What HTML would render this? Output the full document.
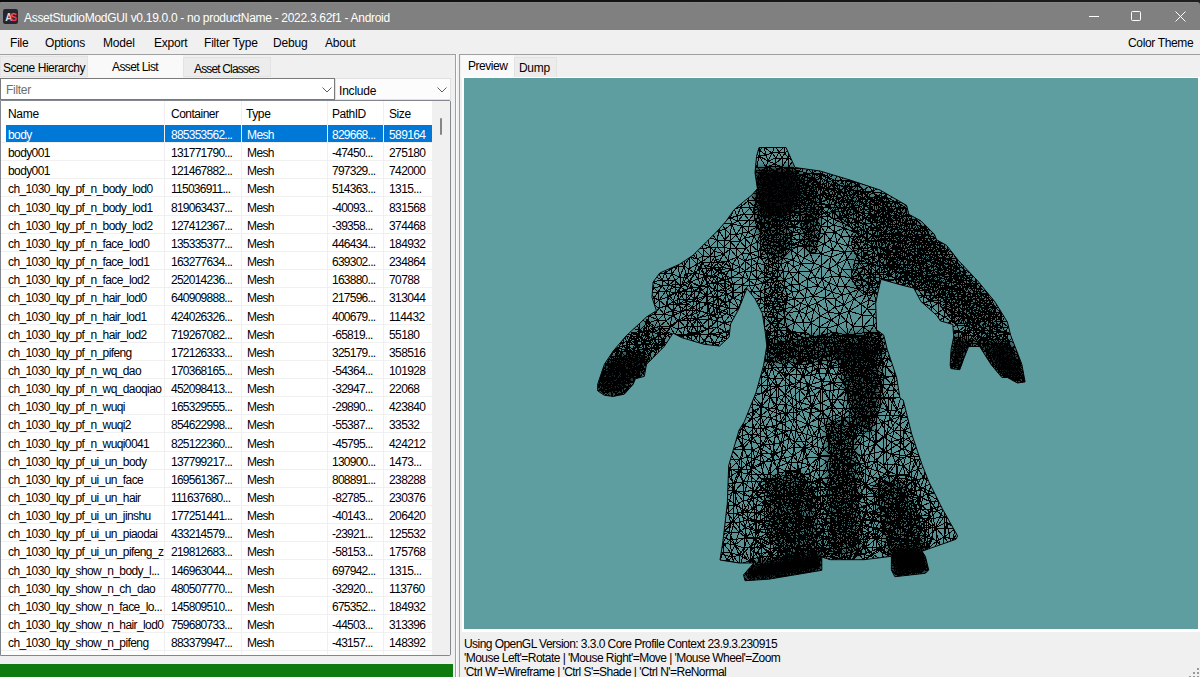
<!DOCTYPE html>
<html><head><meta charset="utf-8"><style>
*{margin:0;padding:0;box-sizing:border-box}
html,body{width:1200px;height:677px;overflow:hidden;background:#f0f0f0;font-family:"Liberation Sans",sans-serif;font-size:12px;color:#000}
.a{position:absolute}
.tx{position:absolute;line-height:17px;white-space:nowrap}
#top{left:0;top:0;width:1200px;height:6px;background:linear-gradient(90deg,#0b0b0b 0,#121212 600px,#1a1a1a 1020px,#1e1e1e 1200px)}
#title{left:0;top:2px;width:1200px;height:28px;background:#808080;border-top:1px solid #878787;border-radius:1px 3px 0 0}
.mi{top:35px;letter-spacing:-0.2px}
.t{position:absolute;line-height:17px;white-space:nowrap;letter-spacing:-0.6px}
.sw{color:#fff}
.c1,.c3{letter-spacing:-0.75px}
.gl{position:absolute;left:1px;width:431px;height:1px;background:#f0f0f0}
.vs{position:absolute;top:101px;width:1px;height:553px;background:#f0f0f0}
.sel{position:absolute;height:17px;background:#0078d7}
</style></head><body>
<div class="a" id="top"></div>
<div class="a" id="title"></div>
<div class="tx" style="left:24px;top:10px;color:#fff;letter-spacing:-0.3px">AssetStudioModGUI v0.19.0.0 - no productName - 2022.3.62f1 - Android</div>
<svg class="a" style="left:3px;top:9px" width="15" height="15" viewBox="0 0 15 15">
<defs><linearGradient id="ga" x1="0" y1="0" x2="1" y2="1"><stop offset="0" stop-color="#ff7040"/><stop offset="1" stop-color="#ff1070"/></linearGradient>
<linearGradient id="gw" x1="0" y1="0" x2="1" y2="0"><stop offset="0" stop-color="#f0eef6"/><stop offset="0.6" stop-color="#e8c8d8"/><stop offset="1" stop-color="#ff6060"/></linearGradient></defs>
<rect x="0" y="0" width="15" height="15" rx="2.2" fill="#23262e"/>
<text x="2.2" y="11.6" font-family="Liberation Sans" font-weight="bold" font-size="10" fill="url(#gw)" letter-spacing="-1.2">A</text>
<text x="7.2" y="11.6" font-family="Liberation Sans" font-weight="bold" font-size="10" fill="url(#ga)">S</text>
</svg>
<svg class="a" style="left:1080px;top:8px" width="120" height="18">
<line x1="9" y1="8.5" x2="19" y2="8.5" stroke="#fff" stroke-width="1"/>
<rect x="51.5" y="3.5" width="9" height="9" rx="1" fill="none" stroke="#fff" stroke-width="1"/>
<line x1="95.5" y1="3.5" x2="105.5" y2="13.5" stroke="#fff" stroke-width="1"/>
<line x1="105.5" y1="3.5" x2="95.5" y2="13.5" stroke="#fff" stroke-width="1"/>
</svg>
<div class="a" style="left:0;top:30px;width:1200px;height:24px;background:#f0f0f0"></div>
<div class="tx mi" style="left:10px">File</div>
<div class="tx mi" style="left:45px">Options</div>
<div class="tx mi" style="left:103px">Model</div>
<div class="tx mi" style="left:154px">Export</div>
<div class="tx mi" style="left:204px">Filter Type</div>
<div class="tx mi" style="left:273px">Debug</div>
<div class="tx mi" style="left:325px">About</div>
<div class="tx mi" style="left:1128px;letter-spacing:-0.35px">Color Theme</div>
<!-- left panel frame -->
<div class="a" style="left:0;top:54px;width:457px;height:1px;background:#a0a0a0"></div>
<div class="a" style="left:455px;top:54px;width:1px;height:623px;background:#a0a0a0"></div>
<div class="a" style="left:456px;top:54px;width:1px;height:623px;background:#fbfbfb"></div>
<!-- right panel frame -->
<div class="a" style="left:459px;top:54px;width:741px;height:1px;background:#a0a0a0"></div>
<div class="a" style="left:459px;top:54px;width:1px;height:623px;background:#a0a0a0"></div>
<!-- left tabs -->
<div class="a" style="left:0;top:56px;width:88px;height:21px;background:#ececec;border:1px solid #e3e3e3"></div>
<div class="a" style="left:88px;top:55px;width:95px;height:23px;background:#f9f9f9"></div>
<div class="a" style="left:183px;top:57px;width:88px;height:20px;background:#ececec;border:1px solid #e3e3e3"></div>
<div class="tx" style="left:3px;top:60px;letter-spacing:-0.45px">Scene Hierarchy</div>
<div class="tx" style="left:112px;top:58.5px;letter-spacing:-0.6px">Asset List</div>
<div class="tx" style="left:194px;top:60.5px;letter-spacing:-0.85px">Asset Classes</div>
<!-- filter row -->
<div class="a" style="left:0;top:78px;width:335px;height:22px;background:#fff;border:1px solid #7a7a7a"></div>
<div class="tx" style="left:6px;top:81.5px;color:#6d6d6d;letter-spacing:-0.3px">Filter</div>
<svg class="a" style="left:322px;top:87px" width="10" height="6"><path d="M0.5 0.5 L5 5 L9.5 0.5" fill="none" stroke="#606060" stroke-width="1"/></svg>
<div class="a" style="left:335px;top:78px;width:116px;height:22px;background:#fcfcfc;border:1px solid #e0e0e0"></div>
<div class="tx" style="left:339px;top:82.5px;letter-spacing:-0.2px">Include</div>
<svg class="a" style="left:437px;top:87px" width="10" height="6"><path d="M0.5 0.5 L5 5 L9.5 0.5" fill="none" stroke="#606060" stroke-width="1"/></svg>
<!-- table -->
<div class="a" style="left:0;top:100px;width:451px;height:556px;background:#fff;border:1px solid #828790;border-radius:0 2px 2px 0"></div>
<div class="a" style="left:432px;top:101px;width:18px;height:554px;background:#f0f0f0"></div>
<div class="a" style="left:440px;top:118px;width:2px;height:17px;background:#858585;border-radius:1px"></div>
<div class="tx" style="left:8px;top:106px;letter-spacing:-0.3px">Name</div>
<div class="tx" style="left:171px;top:106px;letter-spacing:-0.5px">Container</div>
<div class="tx" style="left:246px;top:106px;letter-spacing:-0.4px">Type</div>
<div class="tx" style="left:332px;top:106px;letter-spacing:-0.5px">PathID</div>
<div class="tx" style="left:389px;top:106px;letter-spacing:-0.4px">Size</div>
<div class="gl" style="top:142.00px"></div>
<div class="gl" style="top:160.15px"></div>
<div class="gl" style="top:178.30px"></div>
<div class="gl" style="top:196.45px"></div>
<div class="gl" style="top:214.60px"></div>
<div class="gl" style="top:232.75px"></div>
<div class="gl" style="top:250.90px"></div>
<div class="gl" style="top:269.05px"></div>
<div class="gl" style="top:287.20px"></div>
<div class="gl" style="top:305.35px"></div>
<div class="gl" style="top:323.50px"></div>
<div class="gl" style="top:341.65px"></div>
<div class="gl" style="top:359.80px"></div>
<div class="gl" style="top:377.95px"></div>
<div class="gl" style="top:396.10px"></div>
<div class="gl" style="top:414.25px"></div>
<div class="gl" style="top:432.40px"></div>
<div class="gl" style="top:450.55px"></div>
<div class="gl" style="top:468.70px"></div>
<div class="gl" style="top:486.85px"></div>
<div class="gl" style="top:505.00px"></div>
<div class="gl" style="top:523.15px"></div>
<div class="gl" style="top:541.30px"></div>
<div class="gl" style="top:559.45px"></div>
<div class="gl" style="top:577.60px"></div>
<div class="gl" style="top:595.75px"></div>
<div class="gl" style="top:613.90px"></div>
<div class="gl" style="top:632.05px"></div>
<div class="gl" style="top:650.20px"></div>
<div class="vs" style="left:164px"></div>
<div class="vs" style="left:241px"></div>
<div class="vs" style="left:327px"></div>
<div class="vs" style="left:383px"></div>
<div class="sel" style="top:125.0px;left:6px;width:158px"></div>
<div class="sel" style="top:125.0px;left:165px;width:76px"></div>
<div class="sel" style="top:125.0px;left:242px;width:85px"></div>
<div class="sel" style="top:125.0px;left:328px;width:55px"></div>
<div class="sel" style="top:125.0px;left:384px;width:48px"></div>
<div class="t sw c0" style="top:127.00px;left:8px">body</div>
<div class="t sw c1" style="top:127.00px;left:171px">885353562...</div>
<div class="t sw c2" style="top:127.00px;left:247px">Mesh</div>
<div class="t sw c3" style="top:127.00px;left:332px">829668...</div>
<div class="t sw c4" style="top:127.00px;left:389px">589164</div>
<div class="t c0" style="top:145.15px;left:8px">body001</div>
<div class="t c1" style="top:145.15px;left:171px">131771790...</div>
<div class="t c2" style="top:145.15px;left:247px">Mesh</div>
<div class="t c3" style="top:145.15px;left:332px">-47450...</div>
<div class="t c4" style="top:145.15px;left:389px">275180</div>
<div class="t c0" style="top:163.30px;left:8px">body001</div>
<div class="t c1" style="top:163.30px;left:171px">121467882...</div>
<div class="t c2" style="top:163.30px;left:247px">Mesh</div>
<div class="t c3" style="top:163.30px;left:332px">797329...</div>
<div class="t c4" style="top:163.30px;left:389px">742000</div>
<div class="t c0" style="top:181.45px;left:8px">ch_1030_lqy_pf_n_body_lod0</div>
<div class="t c1" style="top:181.45px;left:171px">115036911...</div>
<div class="t c2" style="top:181.45px;left:247px">Mesh</div>
<div class="t c3" style="top:181.45px;left:332px">514363...</div>
<div class="t c4" style="top:181.45px;left:389px">1315...</div>
<div class="t c0" style="top:199.60px;left:8px">ch_1030_lqy_pf_n_body_lod1</div>
<div class="t c1" style="top:199.60px;left:171px">819063437...</div>
<div class="t c2" style="top:199.60px;left:247px">Mesh</div>
<div class="t c3" style="top:199.60px;left:332px">-40093...</div>
<div class="t c4" style="top:199.60px;left:389px">831568</div>
<div class="t c0" style="top:217.75px;left:8px">ch_1030_lqy_pf_n_body_lod2</div>
<div class="t c1" style="top:217.75px;left:171px">127412367...</div>
<div class="t c2" style="top:217.75px;left:247px">Mesh</div>
<div class="t c3" style="top:217.75px;left:332px">-39358...</div>
<div class="t c4" style="top:217.75px;left:389px">374468</div>
<div class="t c0" style="top:235.90px;left:8px">ch_1030_lqy_pf_n_face_lod0</div>
<div class="t c1" style="top:235.90px;left:171px">135335377...</div>
<div class="t c2" style="top:235.90px;left:247px">Mesh</div>
<div class="t c3" style="top:235.90px;left:332px">446434...</div>
<div class="t c4" style="top:235.90px;left:389px">184932</div>
<div class="t c0" style="top:254.05px;left:8px">ch_1030_lqy_pf_n_face_lod1</div>
<div class="t c1" style="top:254.05px;left:171px">163277634...</div>
<div class="t c2" style="top:254.05px;left:247px">Mesh</div>
<div class="t c3" style="top:254.05px;left:332px">639302...</div>
<div class="t c4" style="top:254.05px;left:389px">234864</div>
<div class="t c0" style="top:272.20px;left:8px">ch_1030_lqy_pf_n_face_lod2</div>
<div class="t c1" style="top:272.20px;left:171px">252014236...</div>
<div class="t c2" style="top:272.20px;left:247px">Mesh</div>
<div class="t c3" style="top:272.20px;left:332px">163880...</div>
<div class="t c4" style="top:272.20px;left:389px">70788</div>
<div class="t c0" style="top:290.35px;left:8px">ch_1030_lqy_pf_n_hair_lod0</div>
<div class="t c1" style="top:290.35px;left:171px">640909888...</div>
<div class="t c2" style="top:290.35px;left:247px">Mesh</div>
<div class="t c3" style="top:290.35px;left:332px">217596...</div>
<div class="t c4" style="top:290.35px;left:389px">313044</div>
<div class="t c0" style="top:308.50px;left:8px">ch_1030_lqy_pf_n_hair_lod1</div>
<div class="t c1" style="top:308.50px;left:171px">424026326...</div>
<div class="t c2" style="top:308.50px;left:247px">Mesh</div>
<div class="t c3" style="top:308.50px;left:332px">400679...</div>
<div class="t c4" style="top:308.50px;left:389px">114432</div>
<div class="t c0" style="top:326.65px;left:8px">ch_1030_lqy_pf_n_hair_lod2</div>
<div class="t c1" style="top:326.65px;left:171px">719267082...</div>
<div class="t c2" style="top:326.65px;left:247px">Mesh</div>
<div class="t c3" style="top:326.65px;left:332px">-65819...</div>
<div class="t c4" style="top:326.65px;left:389px">55180</div>
<div class="t c0" style="top:344.80px;left:8px">ch_1030_lqy_pf_n_pifeng</div>
<div class="t c1" style="top:344.80px;left:171px">172126333...</div>
<div class="t c2" style="top:344.80px;left:247px">Mesh</div>
<div class="t c3" style="top:344.80px;left:332px">325179...</div>
<div class="t c4" style="top:344.80px;left:389px">358516</div>
<div class="t c0" style="top:362.95px;left:8px">ch_1030_lqy_pf_n_wq_dao</div>
<div class="t c1" style="top:362.95px;left:171px">170368165...</div>
<div class="t c2" style="top:362.95px;left:247px">Mesh</div>
<div class="t c3" style="top:362.95px;left:332px">-54364...</div>
<div class="t c4" style="top:362.95px;left:389px">101928</div>
<div class="t c0" style="top:381.10px;left:8px">ch_1030_lqy_pf_n_wq_daoqiao</div>
<div class="t c1" style="top:381.10px;left:171px">452098413...</div>
<div class="t c2" style="top:381.10px;left:247px">Mesh</div>
<div class="t c3" style="top:381.10px;left:332px">-32947...</div>
<div class="t c4" style="top:381.10px;left:389px">22068</div>
<div class="t c0" style="top:399.25px;left:8px">ch_1030_lqy_pf_n_wuqi</div>
<div class="t c1" style="top:399.25px;left:171px">165329555...</div>
<div class="t c2" style="top:399.25px;left:247px">Mesh</div>
<div class="t c3" style="top:399.25px;left:332px">-29890...</div>
<div class="t c4" style="top:399.25px;left:389px">423840</div>
<div class="t c0" style="top:417.40px;left:8px">ch_1030_lqy_pf_n_wuqi2</div>
<div class="t c1" style="top:417.40px;left:171px">854622998...</div>
<div class="t c2" style="top:417.40px;left:247px">Mesh</div>
<div class="t c3" style="top:417.40px;left:332px">-55387...</div>
<div class="t c4" style="top:417.40px;left:389px">33532</div>
<div class="t c0" style="top:435.55px;left:8px">ch_1030_lqy_pf_n_wuqi0041</div>
<div class="t c1" style="top:435.55px;left:171px">825122360...</div>
<div class="t c2" style="top:435.55px;left:247px">Mesh</div>
<div class="t c3" style="top:435.55px;left:332px">-45795...</div>
<div class="t c4" style="top:435.55px;left:389px">424212</div>
<div class="t c0" style="top:453.70px;left:8px">ch_1030_lqy_pf_ui_un_body</div>
<div class="t c1" style="top:453.70px;left:171px">137799217...</div>
<div class="t c2" style="top:453.70px;left:247px">Mesh</div>
<div class="t c3" style="top:453.70px;left:332px">130900...</div>
<div class="t c4" style="top:453.70px;left:389px">1473...</div>
<div class="t c0" style="top:471.85px;left:8px">ch_1030_lqy_pf_ui_un_face</div>
<div class="t c1" style="top:471.85px;left:171px">169561367...</div>
<div class="t c2" style="top:471.85px;left:247px">Mesh</div>
<div class="t c3" style="top:471.85px;left:332px">808891...</div>
<div class="t c4" style="top:471.85px;left:389px">238288</div>
<div class="t c0" style="top:490.00px;left:8px">ch_1030_lqy_pf_ui_un_hair</div>
<div class="t c1" style="top:490.00px;left:171px">111637680...</div>
<div class="t c2" style="top:490.00px;left:247px">Mesh</div>
<div class="t c3" style="top:490.00px;left:332px">-82785...</div>
<div class="t c4" style="top:490.00px;left:389px">230376</div>
<div class="t c0" style="top:508.15px;left:8px">ch_1030_lqy_pf_ui_un_jinshu</div>
<div class="t c1" style="top:508.15px;left:171px">177251441...</div>
<div class="t c2" style="top:508.15px;left:247px">Mesh</div>
<div class="t c3" style="top:508.15px;left:332px">-40143...</div>
<div class="t c4" style="top:508.15px;left:389px">206420</div>
<div class="t c0" style="top:526.30px;left:8px">ch_1030_lqy_pf_ui_un_piaodai</div>
<div class="t c1" style="top:526.30px;left:171px">433214579...</div>
<div class="t c2" style="top:526.30px;left:247px">Mesh</div>
<div class="t c3" style="top:526.30px;left:332px">-23921...</div>
<div class="t c4" style="top:526.30px;left:389px">125532</div>
<div class="t c0" style="top:544.45px;left:8px">ch_1030_lqy_pf_ui_un_pifeng_z</div>
<div class="t c1" style="top:544.45px;left:171px">219812683...</div>
<div class="t c2" style="top:544.45px;left:247px">Mesh</div>
<div class="t c3" style="top:544.45px;left:332px">-58153...</div>
<div class="t c4" style="top:544.45px;left:389px">175768</div>
<div class="t c0" style="top:562.60px;left:8px">ch_1030_lqy_show_n_body_l...</div>
<div class="t c1" style="top:562.60px;left:171px">146963044...</div>
<div class="t c2" style="top:562.60px;left:247px">Mesh</div>
<div class="t c3" style="top:562.60px;left:332px">697942...</div>
<div class="t c4" style="top:562.60px;left:389px">1315...</div>
<div class="t c0" style="top:580.75px;left:8px">ch_1030_lqy_show_n_ch_dao</div>
<div class="t c1" style="top:580.75px;left:171px">480507770...</div>
<div class="t c2" style="top:580.75px;left:247px">Mesh</div>
<div class="t c3" style="top:580.75px;left:332px">-32920...</div>
<div class="t c4" style="top:580.75px;left:389px">113760</div>
<div class="t c0" style="top:598.90px;left:8px">ch_1030_lqy_show_n_face_lo...</div>
<div class="t c1" style="top:598.90px;left:171px">145809510...</div>
<div class="t c2" style="top:598.90px;left:247px">Mesh</div>
<div class="t c3" style="top:598.90px;left:332px">675352...</div>
<div class="t c4" style="top:598.90px;left:389px">184932</div>
<div class="t c0" style="top:617.05px;left:8px">ch_1030_lqy_show_n_hair_lod0</div>
<div class="t c1" style="top:617.05px;left:171px">759680733...</div>
<div class="t c2" style="top:617.05px;left:247px">Mesh</div>
<div class="t c3" style="top:617.05px;left:332px">-44503...</div>
<div class="t c4" style="top:617.05px;left:389px">313396</div>
<div class="t c0" style="top:635.20px;left:8px">ch_1030_lqy_show_n_pifeng</div>
<div class="t c1" style="top:635.20px;left:171px">883379947...</div>
<div class="t c2" style="top:635.20px;left:247px">Mesh</div>
<div class="t c3" style="top:635.20px;left:332px">-43157...</div>
<div class="t c4" style="top:635.20px;left:389px">148392</div>
<!-- right tabs -->
<div class="a" style="left:461px;top:55px;width:53px;height:23px;background:#f9f9f9"></div>
<div class="a" style="left:514px;top:57px;width:43px;height:21px;background:#ececec;border:1px solid #e3e3e3"></div>
<div class="tx" style="left:468px;top:58px;letter-spacing:-0.45px">Preview</div>
<div class="tx" style="left:519px;top:59.5px;letter-spacing:-0.3px">Dump</div>
<!-- preview -->
<div class="a" style="left:462px;top:77px;width:738px;height:555px;background:#fff"></div>
<div class="a" style="left:464px;top:78px;width:734px;height:551px;background:#5f9ea0;overflow:hidden"><svg class="a" style="left:-464px;top:-78px" width="1200" height="677" viewBox="0 0 1200 677">
<defs><filter id="bl" x="-20%" y="-20%" width="140%" height="140%"><feGaussianBlur stdDeviation="3.0"/></filter><clipPath id="sil"><polygon points="759.0,147.5 786.0,147.5 795.0,167.5 820.0,171.0 850.0,180.0 880.0,190.0 906.6,205.4 908.8,214.3 921.0,220.9 934.3,234.2 936.5,239.7 946.5,245.3 958.7,260.8 977.5,280.7 995.2,302.2 1007.4,322.1 1010.7,335.4 1021.8,364.2 1025.1,381.9 1017.4,383.0 1007.4,377.5 1001.9,377.5 990.8,364.2 979.7,346.5 968.6,346.5 964.2,357.6 959.8,369.7 950.9,368.6 950.2,365.2 951.1,349.3 953.7,336.9 952.8,324.5 940.4,320.9 936.9,315.6 920.9,301.4 913.8,288.1 903.2,285.5 881.0,279.3 877.5,294.3 875.7,303.2 876.6,329.8 883.7,335.1 887.2,349.3 892.6,365.2 896.6,377.5 900.0,398.2 903.2,400.0 911.7,434.0 922.0,464.6 928.7,481.5 942.3,508.7 957.6,535.9 955.9,539.3 922.0,551.2 925.3,556.3 928.7,569.9 925.3,573.3 894.8,576.7 891.4,569.9 891.4,556.3 864.2,559.7 830.2,559.7 821.8,557.0 821.8,570.3 768.6,579.2 745.0,580.7 743.5,574.8 753.9,563.0 739.0,563.0 720.0,560.0 722.8,542.3 727.3,503.9 728.7,465.5 739.1,430.0 744.3,421.8 756.1,392.3 763.5,365.7 766.8,346.0 765.3,332.7 762.4,313.5 755.0,298.7 746.9,288.4 738.7,309.1 730.6,323.9 729.1,337.1 719.5,346.0 704.1,344.3 681.9,337.7 673.1,333.2 664.2,346.5 646.5,364.3 644.3,376.4 635.4,378.7 633.2,384.2 624.3,394.2 613.2,396.4 604.4,395.3 597.7,390.8 597.7,384.2 604.4,364.3 613.2,351.0 626.5,335.5 646.5,317.0 656.4,310.7 652.0,297.4 653.1,282.0 659.8,273.0 679.7,264.2 693.0,255.3 706.3,242.0 717.4,231.0 726.2,221.0 733.9,209.9 743.6,201.7 751.7,195.2 757.4,188.7 755.0,172.5 756.6,156.2"/></clipPath></defs>
<g clip-path="url(#sil)">
<polygon points="759.0,147.5 786.0,147.5 795.0,167.5 820.0,171.0 850.0,180.0 880.0,190.0 906.6,205.4 908.8,214.3 921.0,220.9 934.3,234.2 936.5,239.7 946.5,245.3 958.7,260.8 977.5,280.7 995.2,302.2 1007.4,322.1 1010.7,335.4 1021.8,364.2 1025.1,381.9 1017.4,383.0 1007.4,377.5 1001.9,377.5 990.8,364.2 979.7,346.5 968.6,346.5 964.2,357.6 959.8,369.7 950.9,368.6 950.2,365.2 951.1,349.3 953.7,336.9 952.8,324.5 940.4,320.9 936.9,315.6 920.9,301.4 913.8,288.1 903.2,285.5 881.0,279.3 877.5,294.3 875.7,303.2 876.6,329.8 883.7,335.1 887.2,349.3 892.6,365.2 896.6,377.5 900.0,398.2 903.2,400.0 911.7,434.0 922.0,464.6 928.7,481.5 942.3,508.7 957.6,535.9 955.9,539.3 922.0,551.2 925.3,556.3 928.7,569.9 925.3,573.3 894.8,576.7 891.4,569.9 891.4,556.3 864.2,559.7 830.2,559.7 821.8,557.0 821.8,570.3 768.6,579.2 745.0,580.7 743.5,574.8 753.9,563.0 739.0,563.0 720.0,560.0 722.8,542.3 727.3,503.9 728.7,465.5 739.1,430.0 744.3,421.8 756.1,392.3 763.5,365.7 766.8,346.0 765.3,332.7 762.4,313.5 755.0,298.7 746.9,288.4 738.7,309.1 730.6,323.9 729.1,337.1 719.5,346.0 704.1,344.3 681.9,337.7 673.1,333.2 664.2,346.5 646.5,364.3 644.3,376.4 635.4,378.7 633.2,384.2 624.3,394.2 613.2,396.4 604.4,395.3 597.7,390.8 597.7,384.2 604.4,364.3 613.2,351.0 626.5,335.5 646.5,317.0 656.4,310.7 652.0,297.4 653.1,282.0 659.8,273.0 679.7,264.2 693.0,255.3 706.3,242.0 717.4,231.0 726.2,221.0 733.9,209.9 743.6,201.7 751.7,195.2 757.4,188.7 755.0,172.5 756.6,156.2" fill="#000" fill-opacity="0.05"/>
<g filter="url(#bl)"><polygon points="755.0,168.0 797.0,168.0 800.0,190.0 795.0,213.0 785.0,216.0 760.0,216.0 755.0,200.0" fill="#000" fill-opacity="0.87"/>
<polygon points="755.0,210.0 790.0,213.0 792.0,250.0 780.0,262.0 762.0,250.0 756.0,230.0" fill="#000" fill-opacity="0.40"/>
<polygon points="797.0,172.0 815.0,172.0 822.0,210.0 815.0,255.0 805.0,250.0 798.0,215.0" fill="#000" fill-opacity="0.40"/>
<polygon points="815.0,172.0 860.0,182.0 858.0,205.0 845.0,232.0 835.0,220.0 822.0,195.0" fill="#000" fill-opacity="0.21"/>
<polygon points="760.0,250.0 780.0,255.0 792.0,330.0 768.0,340.0 762.0,300.0" fill="#000" fill-opacity="0.12"/>
<polygon points="870.0,195.0 907.0,205.0 946.0,245.0 1000.0,310.0 1007.0,330.0 985.0,335.0 950.0,318.0 915.0,285.0 880.0,260.0" fill="#000" fill-opacity="0.12"/>
<polygon points="765.0,340.0 800.0,337.0 840.0,333.0 878.0,330.0 886.0,345.0 884.0,358.0 840.0,360.0 800.0,363.0 765.0,365.0" fill="#000" fill-opacity="0.40"/>
<polygon points="835.0,345.0 872.0,343.0 882.0,372.0 880.0,405.0 870.0,435.0 855.0,425.0 845.0,390.0" fill="#000" fill-opacity="0.49"/>
<polygon points="596.0,389.0 604.0,365.0 612.0,356.0 640.0,352.0 651.0,360.0 646.0,366.0 645.0,371.0 638.0,380.0 631.0,384.0 623.0,394.0 612.0,397.0 606.0,394.0 600.0,395.0" fill="#000" fill-opacity="0.74"/>
<polygon points="975.0,340.0 1008.0,340.0 1022.0,364.0 1025.0,382.0 1017.0,383.0 1007.0,377.0 1002.0,377.0 990.0,364.0 980.0,346.0 968.0,346.0 960.0,370.0 951.0,368.0 951.0,349.0 953.0,335.0" fill="#000" fill-opacity="0.69"/>
<polygon points="743.0,575.0 754.0,563.0 790.0,556.0 822.0,552.0 822.0,570.0 769.0,579.0 745.0,581.0" fill="#000" fill-opacity="0.87"/>
<polygon points="891.0,548.0 925.0,546.0 929.0,570.0 925.0,573.0 895.0,577.0 891.0,570.0" fill="#000" fill-opacity="0.87"/>
<polygon points="765.0,478.0 800.0,472.0 815.0,490.0 822.0,558.0 790.0,560.0 768.0,540.0" fill="#000" fill-opacity="0.35"/>
<polygon points="825.0,420.0 855.0,418.0 862.0,556.0 828.0,558.0" fill="#000" fill-opacity="0.35"/>
<polygon points="875.0,482.0 905.0,480.0 925.0,540.0 928.0,570.0 892.0,570.0 880.0,520.0" fill="#000" fill-opacity="0.35"/>
<polygon points="612.0,345.0 648.0,314.0 672.0,333.0 664.0,346.0 646.0,364.0 620.0,366.0" fill="#000" fill-opacity="0.12"/>
<polygon points="955.0,262.0 980.0,282.0 1000.0,310.0 1010.0,336.0 985.0,338.0 955.0,325.0 940.0,300.0" fill="#000" fill-opacity="0.16"/>
<polygon points="655.0,285.0 690.0,262.0 715.0,250.0 740.0,260.0 735.0,320.0 710.0,340.0 670.0,333.0" fill="#000" fill-opacity="0.03"/>
<polygon points="736.0,477.0 790.0,468.0 823.0,480.0 871.0,471.0 923.0,465.0 942.0,509.0 957.0,536.0 922.0,551.0 864.0,560.0 830.0,560.0 753.0,563.0 720.0,560.0 727.0,504.0" fill="#000" fill-opacity="0.01"/>
<polygon points="745.0,572.0 756.0,564.0 790.0,558.0 821.0,556.0 822.0,570.0 769.0,579.0 747.0,580.0" fill="#000" fill-opacity="0.95"/>
<polygon points="893.0,552.0 924.0,550.0 928.0,569.0 925.0,573.0 896.0,576.0 892.0,570.0" fill="#000" fill-opacity="0.95"/>
<polygon points="960.0,340.0 970.0,346.0 964.0,358.0 960.0,370.0 951.0,368.0 951.0,349.0" fill="#000" fill-opacity="0.58"/>
<polygon points="992.0,345.0 1012.0,345.0 1022.0,364.0 1025.0,382.0 1017.0,383.0 1007.0,377.0 1002.0,377.0 992.0,364.0" fill="#000" fill-opacity="0.58"/>
<polygon points="850.0,180.0 907.0,205.0 946.0,245.0 960.0,262.0 935.0,300.0 903.0,285.0 881.0,279.0 876.0,300.0 850.0,290.0" fill="#000" fill-opacity="0.16"/></g>
<path d="M768 378L772 368M673 302L668 297M944 528L954 521M791 212L799 214M625 369L623 376M802 228L808 232M829 435L835 424M915 460L911 472M845 286L850 293M744 492L743 501M823 194L821 203M911 404L910 418M891 384L896 391M827 328L820 336M864 280L870 275M943 275L939 269M717 291L718 282M993 346L1002 342M866 417L855 408M761 416L771 418M788 169L788 177M900 196L894 194M898 492L904 496M805 193L798 186M741 207L744 214M774 572L769 580M952 314L958 307M781 546L770 552M930 256L933 263M761 385L762 393M851 346L848 335M827 328L819 327M792 398L800 390M891 442L894 431M964 296L969 284M691 333L691 344M992 300L983 300M840 443L846 436M734 327L724 323M708 335L708 329M843 200L847 196M854 232L844 228M847 390L855 392M768 229L761 223M680 277L675 280M806 314L814 310M915 460L912 452M797 547L788 549M817 303L825 298M779 372L775 378M762 406L761 416M938 303L932 307M798 578L779 583M854 232L861 236M724 254L730 249M754 428L748 434M827 462L816 470M764 490L777 490M762 189L758 185M759 156L759 150M831 320L827 328M851 346L855 335M790 201L796 200M774 255L765 250M912 481L911 472M639 318L640 330M928 494L920 497M884 422L894 431M779 288L785 287M741 207L734 209M635 323L630 328M931 502L930 512M798 272L793 277M778 397L778 387M803 449L798 462M824 343L816 343M820 316L819 327M887 204L886 194M802 228L799 234M837 173L846 174M877 407L873 415M917 230L910 230M664 342L665 349M849 516L853 523M710 247L701 243M659 308L655 314M843 501L839 513M889 507L888 515M909 261L910 254M913 279L909 283M858 424L851 428M751 266L751 272M775 164L777 171M700 269L706 268M817 303L814 310M814 358L824 356M805 193L805 185M838 209L843 200M839 351L834 343M944 317L938 322M818 419L810 413M749 280L757 279M765 369L761 376M867 293L861 304M764 328L760 337M743 197L749 176M773 316L778 313M680 277L672 274M840 314L849 311M715 315L707 313M907 570L907 581M909 261L905 267M763 173L757 167M752 150L759 150M955 350L958 340M880 397L877 407M996 327L990 322M821 254L821 266M761 385L752 385M728 505L736 505M886 367L888 359M743 482L756 481M849 311L861 304M876 204L877 197M825 233L830 240M753 172L749 176M983 331L973 328M798 272L811 271M733 284L733 292M989 288L977 275M909 202L908 208M797 512L810 510M938 313L932 307M736 248L730 241M765 179L765 184M804 536L804 525M753 172L750 166M889 210L897 202M798 504L788 514M763 283L774 282M872 554L866 547M708 329L709 319M764 147L762 142M927 248L919 243M646 334L640 330M820 316L828 312M923 296L928 290M951 296L945 293M755 200L757 194M792 398L793 407M843 200L850 202M783 494L778 507M743 277L742 285M675 335L684 343M649 316L639 318M767 342L760 348M778 196L778 190M805 246L799 242M672 316L670 326M841 340L834 343M924 228L933 225M748 457L743 449M746 248L742 254M798 336L792 340M852 354L845 351M830 391L837 399M763 574L761 585M920 527L913 525M814 552L802 554M763 173L759 178M825 233L820 233M867 293L869 300M848 401L846 409M749 220L755 220M815 202L809 204M900 242L893 234M636 381L639 369M759 156L766 167M791 244L785 241M996 375L1005 375M820 403L821 389M788 313L783 309M840 314L828 312M786 535L778 538M739 532L745 537M759 321L760 337M980 306L988 305M723 543L731 553M717 291L712 282M783 176L788 177M940 244L947 250M864 561L845 565M728 505L721 508M877 407L868 397M866 547L881 548M748 457L746 465M801 221L799 214M846 557L850 545M793 540L797 547M912 552L919 553M750 561L754 573M1020 369L1030 374M755 459L753 450M735 545L731 553M906 478L911 472M723 267L721 273M711 262L706 268M969 284L962 289M776 220L783 220M646 377L639 369M795 221L799 214M822 279L825 289M892 260L896 254M821 266L815 277M769 580L761 585M956 358L949 363M934 231L933 225M781 443L787 450M810 253L804 258M738 437L743 449M923 303L930 301M833 559L838 551M730 241L725 240M758 251L763 245M724 254L718 263M847 484L839 475M952 314L944 317M954 521L944 517M755 459L764 462M853 251L847 259M921 264L926 260M672 316L666 321M768 378L770 386M927 310L932 307M823 505L832 502M787 450L775 453M832 408L821 411M765 184L759 178M879 283L879 274M851 428L846 436M841 430L840 443M795 442L803 449M875 183L863 179M919 579L907 581M797 566L790 572M855 417L858 424M873 415L876 424M972 320L978 324M637 347L629 341M944 528L936 528M727 560L723 552M764 196L769 201M778 196L784 192M683 335L685 327M962 372L955 366M679 260L685 259M797 512L796 524M932 307L930 301M780 208L772 206M919 250L927 248M603 378L603 386M770 495L770 504M821 226L813 225M718 282L724 280M815 395L820 403M977 275L975 286M763 204L769 201M831 444L824 449M699 334L708 335M726 332L736 336M789 272L783 271M666 266L661 268M691 333L684 343M859 289L851 278M821 363L828 373M872 554L864 561M743 426L735 430M859 207L865 205M956 358L964 364M726 332L717 327M709 347L715 352M797 470L798 462M910 215L917 215M937 511L944 517M872 345L882 349M747 520L747 512M762 216L755 220M778 397L776 405M753 490L756 481M932 251L934 244M757 227L761 233M856 222L854 232M714 251L715 257M756 506L747 512M700 311L697 319M757 531L764 526M864 561L853 561M785 301L779 303M675 335L672 343M881 298L874 292M765 369L761 359M706 276L712 282M860 349L852 354M787 450L780 459M897 478L903 466M808 306L801 303M596 373L605 371M814 349L816 343M778 313L777 321M746 574L733 569M825 572L845 565M841 340L839 351M857 243L848 246M925 282L919 282M700 311L692 308M895 247L890 240M686 299L679 304M999 300L1010 321M749 192L757 194M778 557L788 549M873 192L863 191M646 334L654 328M944 528L944 537M811 323L814 310M805 332L812 336M851 346L852 354M963 264L964 274M754 428L765 428M739 532L745 528M786 404L793 407M772 206L774 212M751 298L761 298M958 284L951 280M795 555L802 554M909 202L903 203M768 272L778 270M888 410L873 415M802 493L810 492M637 347L638 355M947 250L953 247M732 270L723 267M914 426L917 436M724 247L724 254M783 186L784 192M811 375L805 368M820 316L831 320M938 295L945 293M847 484L853 489M887 275L887 265M783 433L789 438M941 289L939 282M856 222L857 213M839 351L845 351M925 282L917 288M910 254L905 244M745 528L745 537M726 332L724 323M839 460L832 456M835 183L845 187M806 501L810 492M861 398L855 392M760 303L761 298M957 325L965 326M776 158L775 164M994 354L1002 350M699 345L709 347M813 446L803 449M799 194L802 202M751 266L752 259M697 319L692 315M901 564L907 570M1019 362L1020 369M1012 358L1002 350M1005 316L1010 321M708 286L700 292M806 441L795 442M794 153L788 158M758 435L754 428M925 282L930 280M794 419L793 407M791 285L785 287M863 212L865 218M877 432L884 422M761 385L761 376M809 204L813 209M880 397L887 390M818 534L831 530M883 497L874 503M860 444L854 436M879 365L868 367M810 465L816 470M1012 358L1019 362M753 490L758 497M816 247L809 240M751 245L745 238M772 461L764 462M768 296L766 305M898 492L890 492M786 336L792 340M933 270L939 269M739 318L733 321M788 158L782 158M808 279L811 271M785 503L778 507M776 405L770 397M775 263L768 266M649 316L658 320M1010 368L1019 362M779 152L784 147M792 193L784 192M678 266L684 266M860 472L848 474M745 261L737 257M856 510L851 505M678 329L679 320M750 561L744 548M693 326L701 326M947 250L954 253M841 340L845 351M971 309L980 306M734 327L733 321M964 296L971 298M887 250L890 240M873 316L877 310M730 315L729 308M885 377L880 384M805 332L792 332M785 559L782 571M907 274L897 279M980 306L984 312M772 461L775 453M859 201L859 207M686 305L692 308M847 390L848 401M981 282L980 293M777 356L786 352M759 321L757 311M889 337L885 331M827 216L829 205M717 321L708 329M617 351L621 343M798 186L805 185M727 294L718 297M777 467L785 471M715 276L721 273M838 358L839 367M728 261L737 257M949 329L951 321M665 349L684 343M777 328L770 323M775 164L768 161M933 270L927 270M932 483L940 492M1017 344L1014 329M997 316L1002 322M804 536L814 541M808 279L818 286M778 397L786 404M606 360L598 366M793 160L788 169M991 316L995 308M951 296L945 300M883 292L900 290M911 494L914 504M727 490L722 484M958 277L951 272M884 465L888 475M757 263L762 272M892 522L888 515M934 244L927 248M828 538L836 536M732 270L731 278M812 526L804 525M886 233L880 235M778 507L779 515M771 287L774 282M903 466L915 460M775 263L783 258M789 385L792 398M791 212L789 221M762 474L770 474M679 299L673 302M643 361L631 358M761 565L770 552M764 239L771 241M819 428L807 424M780 241L771 241M735 491L727 490M865 513L872 519M818 534L826 522M643 361L639 369M701 326L697 319M927 310L923 303M659 354L650 361M775 263L781 264M770 552L761 547M786 235L780 241M920 527L918 518M836 494L829 488M761 454L764 462M760 291L752 291M710 247L717 247M797 346L806 347M802 168L804 175M802 202L808 197M666 306L673 310M783 176L782 167M914 241L919 243M835 307L835 299M831 257L837 264M794 153L813 165M907 511L899 518M994 354L993 346M824 343L820 336M772 461L780 459M877 432L884 437M690 257L697 264M806 314L799 311M833 218L827 216M795 176L791 186M884 241L890 240M684 266L687 277M955 350L963 357M849 516L851 505M859 207L857 213M853 326L848 335M934 231L937 238M777 356L785 367M797 346L798 336M878 228L886 233M767 517L764 526M741 301L745 307M856 222L848 215M913 246L919 243M885 285L896 286M842 541L851 535M736 235L742 226M911 494L920 489M721 348L727 340M731 523L738 513M751 266L757 263M835 232L828 227M852 270L847 259M808 232L807 221M720 521L721 508M764 328L764 317M899 425L904 430M717 240L710 232M752 291L761 298M789 385L800 390M787 481L785 471M866 417L876 424M813 165L808 169M861 249L857 243M829 205L835 204M782 293L773 292M860 444L850 444M869 406L866 417M859 529L862 521M943 275L936 276M710 247L710 256M756 522L757 531M881 193L877 197M880 384L876 377M891 442L884 437M856 176L863 179M985 319L990 322M838 325L848 335M777 233L787 228M969 278L958 284M837 375L828 373M794 419L807 424M882 523L872 519M910 215L908 208M934 231L944 238M768 378L775 378M791 212L790 201M775 453L780 459M922 506L930 512M984 364L971 359M764 317L773 316M909 533L908 544M697 319L709 319M792 236L791 244M804 475L804 483M725 460L740 459M865 379L861 368M814 552L823 546M786 404L776 405M884 422L884 437M765 179L769 174M783 522L796 524M945 368L949 363M745 528L757 531M897 508L899 518M837 173L828 178M951 272L956 267M958 258L953 247M906 290L900 290M837 243L833 250M813 296L825 289M846 557L838 551M725 240L725 229M783 379L779 372M877 310L867 309M802 493L795 491M831 257L821 266M873 192L877 197M1002 350L1011 349M951 513L940 492M913 294L909 283M811 323L819 327M664 314L655 314M797 254L793 260M693 326L699 334M788 463L780 459M795 176L788 169M819 428L812 436M862 456L859 463M906 486L904 496M800 361L800 353M760 539L771 543M851 535L853 523M751 245L750 253M1030 382L1022 386M739 532L729 532M797 247L791 244M913 279L919 282M717 240L725 240M738 472L734 483M912 552L904 553M813 180L804 175M788 514L779 515M813 366L809 355M822 279L829 283M831 530L844 532M800 361L809 355M791 250L793 260M784 147L788 143M905 223L910 230M652 275L662 280M743 197L749 192M759 156L757 167M778 196L781 201M901 527L913 525M719 563L723 552M963 357L972 347M828 538L833 545M749 280L755 285M771 195L769 201M802 168L796 168M827 167L832 170M779 215L780 208M713 296L717 291M596 373L594 384M876 302L881 298M793 540L786 535M776 220L778 226M710 232L715 227M733 284L725 288M769 245L771 241M883 497L879 487M740 580L733 569M850 237L844 228M758 251L757 242M773 303L766 305M623 395L629 389M707 313L697 319M964 364L955 366M826 495L823 505M872 257L872 264M1005 316L1002 322M686 291L676 293M858 424L869 429M815 236L809 240M941 289L946 282M850 237L861 236M879 266L880 255M743 482L744 492M771 481L777 490M868 197L865 205M621 343L625 333M853 251L848 246M880 248L887 250M896 286L883 292M766 155L759 150M958 258L954 253M924 478L926 467M777 356L772 368M918 518L913 525M820 336L816 343M826 522L831 530M839 475L828 470M735 545L745 537M787 579L790 572M1023 355L1027 363M717 291L708 286M936 528L929 519M728 213L734 209M730 469L722 472M848 401L855 392M754 236L757 227M802 375L805 368M880 515L888 515M918 469L926 467M795 221L789 221M606 360L605 371M896 227L893 234M796 168L788 169M805 193L808 197M842 295L835 299M820 478L828 470M788 463L798 462M837 243L830 240M881 193L881 185M847 390L839 389M881 507L874 503M951 272L951 280M924 458L915 460M936 276L930 280M780 530L774 525M597 392L603 386M751 272L757 279M928 494L940 492M833 545L836 536M654 305L646 299M796 524L804 525M990 322L991 330M825 233L821 226M735 545L744 548M873 235L878 240M831 196L834 190M799 194L796 200M860 444L862 456M918 469L924 458M901 397L889 398M925 242L927 248M865 484L875 493M1002 359L1002 350M879 321L878 333M777 490L787 481M923 296L931 295M820 186L828 178M797 566L795 555M792 332L787 327M764 239L761 233M647 323L640 330M830 391L829 399M748 457L755 459M780 414L768 410M896 500L889 507M611 366L623 360M944 258L951 259M930 256L932 251M891 442L883 451M764 147L770 142M941 289L947 288M872 229L865 224M996 327L1008 327M990 337L997 336M873 192L881 185M797 254L797 247M888 567L899 577M778 478L777 490M806 347L816 343M715 276L724 280M749 220L749 226M810 253L821 254M758 365L765 369M892 260L887 265M812 173L813 165M744 416L752 419M762 474L756 481M933 263L939 269M958 284L962 289M861 398L848 401M793 407L788 413M791 250L797 247M692 308L686 316M883 223L884 216M875 493L874 503M839 389L831 382M747 520L738 513M840 443L850 444M755 285L752 291M763 283L765 277M885 331L879 321M859 289L850 293M789 385L783 379M1020 369L1027 363M888 410L889 398M778 226L787 228M874 218L870 215M873 235L867 232M706 276L708 286M662 286L669 285M701 286L708 286M743 292L742 285M636 381L632 374M720 521L718 537M659 335L654 328M785 359L785 367M874 325L878 333M812 526L817 515M897 478L906 478M812 436L807 424M693 326L690 321M761 223L761 233M868 538L866 547M781 264L778 270M680 277L687 277M912 269L905 267M837 243L835 232M821 175L827 167M871 283L859 289M767 351L760 348M798 504L790 497M804 175L801 180M823 194L826 189M760 210L755 207M833 559L837 565M956 358L955 366M933 263L927 270M762 406L770 397M681 287L687 277M646 334L639 337M754 236L761 233M678 266L672 274M748 232L745 238M773 444L776 435M777 171L769 174M916 542L920 527M991 316L990 322M781 546L793 540M792 236L794 227M866 417L869 429M831 196L835 204M923 303L932 307M864 280L859 274M868 526L872 519M685 327L690 321M681 287L675 287M904 430L910 418M774 255L783 258M756 270L757 263M709 347L704 341M853 251L861 249M901 397L904 385M865 513L873 511M872 477L881 479M902 217L899 208M841 218L848 223M870 332L878 333M883 497L890 492M863 212L857 213M868 526L868 538M862 456L868 447M897 279L890 281M883 451L884 465M660 326L667 332M825 298L825 289M615 373L625 369M790 149L785 153M969 278L964 274M831 320L819 327M723 543L718 537M838 551L828 552M923 296L923 303M718 282L712 282M843 200L837 197M878 340L865 336M798 504L810 510M796 368L789 374M775 146L784 147M767 342L770 335M858 424L866 417M990 337L987 343M806 314L808 306M730 218L737 216M919 579L912 575M796 478L795 491M795 322L787 327M749 176L749 192M850 379L860 386M662 286L654 288M749 285L755 285M817 515L809 519M713 296L708 286M946 282L947 288M832 292L825 289M879 283L883 279M863 212L870 208M779 372L789 374M903 466L906 478M844 418L851 428M700 311L707 313M780 241L772 235M858 541L850 545M837 197L834 190M732 270L733 264M999 300L993 294M1009 341L1004 334M801 264L793 260M777 328L787 327M712 268L711 262M892 260L898 267M924 478L912 481M763 204L755 207M861 261L847 259M741 301L734 298M914 241L918 237M710 247L707 237M723 267L718 263M878 340L878 333M647 323L654 328M859 529L851 535M1004 334L1002 342M964 364L971 359M806 441L812 436M712 268L706 276M918 469L912 481M845 492L836 494M768 438L758 435M951 513L945 508M882 523L888 532M755 220L749 226M932 564L943 550M746 465L753 467M937 511L945 508M697 259L697 264M784 280L774 282M987 343L988 351M883 223L878 228M831 320L828 312M731 523L729 532M907 236L910 230M779 303L776 298M753 172L757 167M672 274L668 280M861 236L867 232M821 217L827 221M724 254L715 257M766 533L778 538M768 272L765 277M791 186L783 186M964 364L963 357M912 481L906 478M859 529L858 541M646 377L651 370M665 273L662 280M804 475L816 470M684 266L689 269M728 513L721 508M749 280L743 277M759 257L750 253M879 283L870 275M777 328L770 335M867 240L857 243M768 229L764 239M647 349L638 355M783 379L775 378M884 422L873 415M882 200L883 210M683 335L691 333M735 491L743 501M861 398L855 408M879 487L881 479M741 207L736 203M914 504L904 496M935 549L927 549M771 543L778 538M857 479L865 484M715 343L721 348M933 263L933 270M788 313L799 311M844 418L846 409M806 215L801 221M765 184L776 184M996 327L997 316M846 174L841 180M813 165L819 169M828 418L836 415M745 261L745 271M745 261L750 253M783 176L777 171M974 293L969 284M802 375L811 375M886 259L879 266M983 300L986 294M791 186L784 192M899 208L897 202M736 248L742 254M758 365L752 385M821 254L833 250M779 303L783 309M793 456L780 459M833 559L826 563M861 261L872 264M896 464L903 466M900 196L897 202M882 523L880 515M792 398L785 394M771 195L778 190M782 158L785 153M810 253L805 246M841 218L845 208M869 406L873 415M727 294L717 291M807 221L801 221M796 524L788 514M865 336L872 345M785 503L798 504M983 331L991 330M892 266L887 265M1030 382L1030 374M738 472L748 474M821 209L821 203M615 373L611 366M754 304L761 298M892 347L894 355M755 459L753 467M922 254L932 251M734 298L743 292M955 529L954 521M615 373L623 376M943 263L939 269M751 499L758 497M727 490L725 497M764 462L770 474M728 513L738 513M723 301L729 301M777 336L778 344M847 196L850 202M987 343L978 344M798 272L794 267M808 306L814 310M843 501L832 502M862 456L867 468M817 497L815 504M659 300L658 292M944 537L943 550M735 491L725 497M837 375L831 382M873 511L874 503M849 516L856 510M911 404L897 410M698 279L694 273M666 291L659 300M713 296L713 304M934 231L924 228M983 331L981 338M847 259L837 264M974 335L966 335M845 252L837 264M853 326L846 321M922 254L916 256M969 278L972 269M865 224L865 218M879 365L876 377M822 279L832 276M914 241L907 236M903 284L896 286M922 506L918 518M770 335L760 337M952 335L943 326M886 259L892 260M676 293L668 297M815 202L821 203M914 504L920 497M883 451L884 437M896 557L884 561M853 452L843 452M837 286L832 276M924 228L927 223M910 254L903 258M808 279L807 288M699 334L691 333M723 217L715 227M944 537L953 539M730 218L738 221M728 261L723 267M794 307L801 303M723 543L729 532M865 224L871 223M765 428L776 435M617 351L629 352M799 242L799 234M730 315L739 308M956 358L963 357M768 266L762 272M782 167L775 164M712 268L715 276M735 545L729 532M783 249L774 255M838 325L846 321M847 466L839 475M825 233L828 227M860 349L861 342M881 507L888 515M611 366L606 360M962 316L958 307M799 311L808 306M821 226L820 233M773 426L765 428M768 438L764 445M907 236L918 237M697 259L702 262M818 241L809 240M861 249L865 254M784 280L785 287M1002 368L992 366M917 215L924 218M751 298L754 304M903 284L897 279M680 277L684 266M754 214L755 220M869 360L868 367M901 397L896 391M869 406L868 397M770 504L758 497M924 228L914 224M608 353L614 344M701 326L709 319M903 466L906 456M853 523L862 521M891 442L892 454M773 426L782 423M887 204L889 210M710 232L723 217M1015 379L1007 383M815 395L809 385M851 346L861 342M939 282L936 276M804 475L796 478M812 406L815 395M741 301L743 292M760 303L754 304M885 377L876 377M891 384L885 377M780 241L777 247M844 305L850 293M907 274L898 267M635 323L625 333M678 329L675 335M876 302L867 309M823 194L826 199M818 534L804 536M669 285L662 280M761 385L770 386M610 390L604 398M969 284L969 278M648 288L652 282M805 163L799 163M981 351L971 359M715 276L718 282M858 183L851 189M806 347L814 349M903 284L900 290M874 247L865 254M900 196L881 185M881 193L886 194M651 370L650 361M932 483L924 478M765 369L768 361M958 340L967 343M778 557L785 559M922 569L919 579M619 382L623 376M965 326L973 328M672 263L671 269M819 373L822 381M783 258L793 260M945 368L955 366M808 232L809 240M920 274L926 276M913 294L917 288M851 346L845 351M786 404L785 394M799 284L793 277M750 441L743 449M631 358L629 352M686 316L690 321M769 260L765 250M899 544L904 553M949 329L943 326M802 493L790 497M944 317L951 321M785 318L777 321M845 252L847 259M647 349L659 354M608 353L615 359M874 247L867 240M887 275L897 279M812 406L820 403M792 292L787 296M943 275L946 282M838 358L845 351M746 574L754 573M710 256L711 262M882 349L894 355M918 469L911 472M736 235L742 233M800 361L792 356M886 233L890 240M842 295L837 286M839 460L827 462M710 256L702 262M611 366L615 359M741 207L737 216M753 586L740 580M958 284L953 289M1023 355L1011 349M787 228L794 227M858 361L869 360M853 207L857 213M820 316L814 310M761 376L768 378M839 460L828 470M850 379L847 371M896 365L894 355M635 323L639 318M643 361L651 370M825 298L835 307M923 296L917 300M909 261L912 269M768 312L773 316M762 216L766 209M806 347L806 339M672 263L690 251M930 236L925 242M827 328L828 337M748 201L755 207M878 340L885 343M840 443L843 452M794 153L799 163M799 284L808 279M950 265L951 259M997 316L991 316M916 542L928 536M785 211L780 208M786 404L788 413M804 475L797 470M745 271L751 266M984 364L996 375M889 220L889 210M784 280L779 288M748 232L742 226M920 489L928 494M863 327L855 335M864 280L859 289M941 289L934 286M895 247L887 250M822 279L818 286M799 242L797 247M749 404L744 416M739 532L735 545M813 446L812 436M666 306L668 297M977 275L972 269M829 205L826 199M916 542L927 549M906 486L912 481M919 250L910 254M854 299L861 304M861 249L874 247M727 294L734 298M730 234L725 229M782 167L782 158M857 192L847 196M764 196L762 189M806 501L810 510M772 153L764 147M724 247L717 247M763 574L761 565M883 210L876 204M931 502L937 511M1002 307L995 308M906 456L912 452M847 466L860 472M841 430L844 418M723 301L719 306M857 243L861 236M922 506L931 502M816 470L828 470M695 248L703 256M859 289L845 286M881 358L882 349M784 192L778 190M794 419L788 413M909 533L913 525M791 212L795 221M776 158L768 161M899 208L889 210M867 505L873 511M752 150L750 166M848 335L855 335M1015 379L1005 375M890 483L881 479M903 258L896 254M651 293L658 292M873 316L879 321M813 446L819 457M717 291L718 297M821 209L813 209M865 336L870 332M768 223L770 216M640 330L632 336M733 284L731 278M834 225L828 227M781 264L783 258M797 512L798 504M810 253L814 263M844 532L853 523M867 352L861 342M929 519L944 517M795 442L791 430M768 361L772 368M843 501L851 505M992 300L995 308M839 513L838 523M832 367L824 356M922 569L912 575M770 552L770 563M996 327L1002 322M922 254L919 250M797 566L805 566M823 194L816 196M791 285L792 292M951 272L945 269M764 317L759 321M941 251L932 251M738 513L740 522M777 233L768 229M874 218L884 216M881 507L883 497M764 445L753 450M861 229L865 224M840 276L837 286M1017 344L1009 341M879 365L886 367M945 368L954 374M748 201L749 192M945 300L938 295M814 263L801 264M770 188L762 189M812 482L810 492M743 292L752 291M686 305L695 299M720 312L730 315M815 219L813 225M938 259L930 256M786 404L780 414M721 223L725 229M715 276L712 282M766 305L757 311M959 331L965 326M824 244L818 241M962 316L952 314M815 202L813 209M737 257L733 264M904 430L914 426M667 332L672 343M955 529L944 537M897 508L907 511M740 459L743 449M959 331L958 340M783 249L783 258M943 275L951 280M978 344L981 338M782 293L787 296M804 175L805 185M766 533L771 543M768 296L773 292M939 501L940 492M865 379L868 367M944 517L945 508M864 561L858 552M878 213L870 215M821 226L815 219M867 505L856 510M858 361L867 352M762 474L764 462M857 192L850 202M861 398L869 406M974 293L971 298M695 248L710 232M736 336L727 340M635 323L640 330M882 349L888 359M842 541L833 545M793 160L788 158M914 224L924 218M824 356L814 349M757 242L763 245M946 307L952 305M791 250L783 258M832 292L837 286M907 511L918 518M899 544L890 544M888 410L891 420M740 459L746 465M748 474L756 481M784 280L783 271M775 263L778 270M879 266L887 265M946 347L947 355M896 365L888 359M837 173L841 180M736 235L732 224M856 510L853 523M891 442L903 438M763 283L772 277M610 382L605 371M879 283L885 285M756 522L757 513M825 298L832 292M882 200L881 193M773 303L768 296M908 208L903 203M843 452L848 459M864 267L870 275M762 406L749 404M835 232L844 228M892 347L889 337M924 228L924 218M762 406L762 393M779 215L783 220M786 336L787 327M904 230L910 230M885 377L886 367M980 293L975 286M852 270L859 274M781 546L771 543M958 340L952 335M869 389L865 379M841 430L835 424M916 256L910 254M858 183L856 176M853 367L847 371M876 302L874 292M758 435L764 445M652 282L662 286M771 418L768 410M859 201L857 192M813 446L824 449M732 270L740 267M844 532L836 536M818 534L823 546M963 357L962 347M818 286L813 296M924 458L917 436M773 303L776 298M858 552L853 561M883 292L874 292M1009 341L1015 335M884 241L887 250M783 522L795 532M842 541L850 545M920 274L927 270M758 365L760 348M733 284L743 277M751 547L745 537M840 192L847 196M770 216L774 212M897 478L898 492M872 477L860 472M876 444L877 432M888 532L876 539M713 296L706 296M767 351L767 342M743 426L738 437M744 214L738 221M935 549L943 550M651 293L646 299M824 244L833 250M958 277L958 284M922 506L914 504M923 296L930 301M763 574L769 580M681 287L675 280M787 481L795 491M776 184L783 186M831 354L838 358M749 285L749 280M725 460L731 440M813 165L805 163M817 497L819 487M713 304L719 306M736 248L730 249M866 417L873 415M980 293L974 304M903 284L907 274M872 264L864 267M751 547L744 548M901 527L899 518M958 277L956 267M831 257L833 250M806 314L803 322M804 237L808 232M756 506L758 497M943 326L951 321M770 386L775 378M896 227L904 230M768 438L765 428M754 189L758 185M841 340L835 335M748 201L741 207M872 229L867 232M713 296L718 297M794 307L783 309M759 156L768 161M1004 334L997 336M781 546L786 535M853 523L838 523M789 385L785 394M739 532L731 523M893 234L888 226M905 223L904 230M877 461L870 454M740 267L739 273M715 315L717 321M793 540L804 536M852 270L864 267M745 261L742 254M749 404L754 411M740 459L730 469M848 223L844 228M872 345L875 351M799 402L802 410M936 528L944 537M859 463L853 452M805 246L797 247M766 533L764 526M743 501L736 505M758 435L748 434M778 478L787 481M831 196L826 199M741 301L751 298M829 205L821 203M760 348L761 359M798 272L808 279M1002 307L1005 316M958 307L966 302M808 232L799 234M667 332L675 335M757 167L754 161M925 282L926 276M829 269L832 276M738 437L748 434M788 463L797 470M758 251L759 257M870 208L871 201M853 326L862 315M762 272L765 277M897 508L888 515M805 332L803 322M789 272L784 280M817 497L810 492M805 298L808 306M639 337L644 342M760 539L761 547M835 183L826 189M912 269L921 264M827 216L827 221M737 216L744 214M768 229L761 233M820 478L829 488M777 247L771 241M846 174L856 176M765 184L762 189M774 525L767 517M768 272L772 277M856 222L861 229M981 282L975 286M824 244L830 240M862 456L853 452M954 253L951 259M909 261L916 256M824 343L834 343M802 202L809 204M806 501L817 497M860 444L868 447M748 201L750 208M941 251L944 258M940 244L948 242M864 561L876 562M892 522L888 532M698 279L690 282M939 501L937 511M754 411L744 416M826 563L820 559M728 213L736 203M718 537L729 532M668 280L662 280M723 301L718 297M748 232L749 226M925 282L928 290M949 329L957 325M699 303L707 302M756 554L770 552M821 254L816 247M958 277L951 280M819 487L812 482M911 494L906 486M737 216L734 209M749 280L742 285M892 260L887 250M879 283L883 292M845 492L838 486M805 332L795 322M791 186L792 193M805 368L809 355M768 312L774 309M955 529L953 539M959 331L957 325M776 158L772 153M879 274L883 279M920 489L912 481M788 158L785 153M782 293L785 287M826 495L829 488M672 263L661 268M887 275L879 274M760 291L761 298M720 312L724 323M795 221L801 221M755 220L761 223M857 192L851 189M907 511L908 519M1007 383L996 375M639 337L632 336M885 285L890 281M902 217L908 208M992 366L988 358M784 147L785 153M869 406L877 407M773 426L776 435M643 361L650 361M806 397L799 402M897 410L891 420M712 268L706 268M806 347L800 353M765 184L770 188M778 557L770 563M750 208L755 207M728 261L733 264M858 424L863 435M785 559L790 572M811 375L819 373M859 463L848 459M739 555L750 561M759 178L758 185M757 263L752 259M714 251L724 254M706 296L700 292M775 263L774 255M943 275L951 272M826 563L825 572M861 368L868 367M824 356L821 363M611 366L625 369M881 358L869 360M800 382L800 390M702 262L697 264M730 241L740 241M890 544L900 537M806 215L806 209M739 564L733 569M878 471L881 479M765 428L771 418M916 542L909 533M924 218L933 225M776 220L779 215M779 215L785 211M762 216L770 216M746 248L740 241M888 554L884 561M918 469L915 460M794 299L794 307M939 501L945 508M879 274L870 275M797 512L809 519M783 186L778 190M771 481L762 474M917 446L912 452M821 411L810 413M768 296L771 287M699 334L708 329M877 461L884 465M793 160L796 168M890 492L879 487M870 215L871 223M916 542L908 544M840 276L832 276M830 240L833 250M857 479L853 489M804 475L812 482M839 460L843 452M708 335L717 327M739 555L739 564M767 351L768 361M895 271L897 279M938 303L945 300M951 513L944 517M783 249L791 244M829 283L825 289M911 404L901 397M832 408L846 409M647 349L650 361M743 449L753 450M887 275L892 266M888 410L880 397M679 260L672 263M780 208L781 201M894 194L886 194M953 289L947 288M769 245L764 239M835 183L840 192M886 233L888 226M745 307L751 298M783 433L782 423M832 502L836 494M660 326L659 335M878 228L874 218M899 544L900 537M771 195L770 188M779 152L782 158M763 283L755 285M997 336L1002 342M768 229L772 235M723 543L735 545M863 212L859 207M930 572L919 579M791 250L791 244M1009 341L1002 350M793 407L802 410M799 311L803 322M717 240L724 247M778 226L783 220M888 567L876 562M857 479L860 472M800 382L802 375M740 459L748 457M985 319L978 314M756 554L751 547M776 405L780 414M903 284L906 290M764 490L758 497M855 392L860 386M648 288L654 288M896 464L888 475M855 417L855 408M833 218L832 212M732 224L730 234M737 257L730 249M859 274L851 278M759 257L769 260M878 228L871 223M749 220L744 214M691 344L684 343M841 218L848 215M659 274L662 280M916 256L919 250M666 306L659 308M891 384L880 384M814 552L808 546M772 153L768 161M1002 368L1010 368M699 334L691 344M806 441L802 433M869 360L861 368M988 305L984 312M874 292L869 300M878 228L880 235M742 226L738 221M859 289L867 293M837 399L848 401M922 254L921 264M890 544L881 548M911 442L903 449M804 237L799 242M724 323L733 321M786 235L787 228M837 264L842 269M868 197L863 191M811 323L803 322M822 279L829 269M772 368L775 378M953 289L951 280M835 307L844 305M679 304L681 312M739 308L739 318M939 282L946 282M802 493L804 483M790 201L799 208M745 307L739 318M795 322L803 322M713 304L718 297M869 389L880 384M901 564L888 567M751 547L761 547M955 350L950 341M648 288L652 275M631 358L638 355M907 511L914 504M806 314L811 323M782 293L776 298M756 270L751 272M846 362L838 358M879 365L881 358M806 441L813 446M883 223L874 218M780 241L785 241M848 335L846 321M694 273L697 264M907 274L905 267M978 324L978 314M910 560L919 553M914 224L910 230M747 520L757 513M933 263L926 260M901 564L896 557M989 288L981 282M787 481L796 478M715 553L723 552M794 153L790 149M758 435L765 428M841 218L832 212M907 236L904 230M865 484L860 472M604 398L614 399M757 227L755 220M911 442L917 436M800 382L789 385M776 405L768 410M761 416L754 428M715 343L708 335M779 288L782 293M804 525L809 519M812 406L799 402M872 229L871 223M754 214L749 220M952 314L951 321M754 181L753 172M944 238L953 247M1023 377L1022 386M839 460L839 475M720 312L719 306M702 262L711 262M886 367L894 376M1023 355L1012 358M1015 379L1015 388M952 314L952 305M853 251L845 252M867 352L869 360M859 201L863 191M861 304L869 300M717 327L708 329M749 285L742 285M754 214L755 207M962 316L972 320M629 352L629 341M842 541L838 551M735 491L744 492M1012 358L1011 349M686 291L694 291M778 313L785 318M981 351L988 351M919 250L919 243M936 276L926 276M717 240L719 231M703 249L703 256M950 265L956 267M929 519L937 511M798 462L806 458M734 483L722 484M862 315L861 304M654 305L659 300M900 242L907 236M932 483L920 489M721 223L719 231M810 577L805 566M996 327L997 336M832 367L821 363M721 530L729 532M781 546L788 549M992 300L986 294M810 510L809 519M760 291L755 285M888 567L884 561M739 564L727 560M679 320L690 321M683 335L684 343M672 274L665 273M861 261L864 267M958 307L952 305M927 556L932 564M900 242L902 251M987 343L981 338M798 186L791 186M769 260L768 266M764 490L753 490M625 333L630 328M778 557L782 571M800 353L809 355M720 521L721 530M761 454L753 450M972 320L973 328M760 303L757 311M733 284L724 280M697 259L690 257M750 561L761 565M754 181L758 185M779 288L773 292M843 501L836 494M806 501L815 504M977 275L981 282M750 208L741 207M818 241L825 233M882 200L876 204M658 347L664 342M672 274L671 269M757 167L750 166M794 267L787 262M860 444L870 439M778 313L783 309M824 343L814 349M770 323L777 321M886 259L880 255M805 193L802 202M718 263L715 257M699 303L695 299M615 373L605 371M748 232L742 233M794 227L799 234M865 513L862 521M988 358L984 364M918 518L930 512M936 528L928 527M878 213L884 216M904 430L894 431M826 563L837 565M739 532L740 522M958 284L964 274M891 577L888 567M944 317L943 326M695 299L700 292M877 461L867 468M930 256L926 260M736 235L730 234M983 300L974 304M994 354L988 351M715 315L719 306M865 484L879 487M944 258L943 263M948 242L953 247M950 545L943 550M840 443L831 444M876 539L890 544M938 259L941 251M777 233L778 226M629 352L638 355M685 259L690 257M794 227L789 221M927 270L926 260M889 220L896 215M785 301L794 307M831 196L823 194M856 510L862 521M934 286L928 290M761 454L775 453M811 375L822 381M849 311L846 321M776 158L782 158M911 404L914 426M773 426L783 433M940 244L941 251M699 345L691 344M869 186L858 183M741 207L743 197M745 261L751 266M816 470L819 457M896 464L897 478M853 326L855 335M802 228L807 221M949 363L955 366M855 417L851 428M842 295L844 305M897 508L896 500M833 559L846 557M883 223L889 220M811 375L809 385M811 323L812 336M637 347L644 342M815 202L821 209M665 273L671 269M880 248L880 255M762 393L770 397M855 408L848 401M625 369L639 369M891 420L894 431M776 220L768 223M909 533L901 527M917 300L900 290M708 335L704 341M869 389L880 397M914 241L905 244M786 235L785 241M680 277L681 287M859 529L868 526M813 180L813 191M810 253L816 247M706 276L700 269M839 367L847 371M941 251L934 244M751 499L743 501M768 438L776 435M884 437L894 431M820 559L828 552M782 423L788 413M854 299L859 289M872 264L870 275M876 204L871 201M760 210L754 214M884 422L891 420M863 212L865 205M880 248L874 247M837 243L841 236M813 446L806 458M883 210L889 210M795 221L794 227M876 424L869 429M914 241L913 246M619 382L629 389M668 280L669 285M837 399L839 389M762 474L748 474M865 336L855 335M858 541L858 552M889 337L885 343M782 571L779 583M767 517L757 513M839 513L832 502M728 261L730 249M667 332L664 342M858 183L852 182M738 513L747 512M908 519L899 518M865 379L876 377M821 226L828 227M748 201L755 200M853 207L845 208M743 277L745 271M1027 363L1030 374M910 560L915 567M890 483L879 487M862 315L863 327M819 373L828 373M834 225L827 221M845 252L833 250M859 201L850 202M797 470L810 465M884 241L880 248M830 391L839 389M707 237L710 232M931 502L928 494M723 543L723 552M772 206L769 201M639 337L640 330M1002 359L992 366M855 417L846 409M756 554L750 561M868 197L877 197M795 555L797 547M782 167L788 169M765 179L763 173M802 202L796 200M880 397L880 384M771 195L778 196M981 351L987 343M814 358L821 363M834 343L828 337M798 272L801 264M902 217L896 215M759 257L765 250M751 245L757 242M782 571L770 563M824 244L816 247M899 425L894 431M883 210L884 216M734 209L736 203M692 308L692 315M777 336L770 335M760 348L760 337M787 579L779 583M717 321L709 319M887 275L895 271M821 217L827 216M703 249L701 243M857 375L861 368M832 367L828 373M861 229L867 232M725 460L730 469M876 204L878 213M745 528L740 522M759 156L766 155M804 483L795 491M935 549L937 541M910 418L914 426M853 207L859 207M900 196L909 202M766 305L760 303M835 307L828 312M717 321L717 327M758 251L750 253M701 286L706 276M837 375L839 367M833 218L834 225M619 382L623 395M719 231L715 227M945 300L952 305M764 147L759 150M789 385L778 387M733 284L742 285M809 385L821 389M761 416L768 410M652 275L661 268M727 560L733 569M768 272L762 272M958 300L958 307M772 153L775 146M770 188L778 190M820 186L813 180M850 545L851 535M821 203L826 199M761 385L752 394M766 155L768 161M865 484L872 477M964 296L958 293M782 423L780 414M712 268L723 267M785 559L795 555M781 443L789 438M785 359L786 352M889 220L888 226M720 334L715 343M666 291L662 286M876 444L870 454M783 186L788 177M814 358L813 366M853 489L852 497M773 316L774 309M764 445L773 444M831 320L840 314M754 236L745 238M745 261L740 267M964 296L962 289M888 475L878 471M764 490L771 481M729 477L730 469M776 184L770 188M983 300L980 293M799 291L805 298M861 261L872 257M854 299L844 305M958 300L966 302M1002 350L993 346M804 475L810 465M797 566L802 554M802 202L806 209M955 350L947 355M717 327L724 323M853 452L850 444M841 218L834 225M934 286L930 280M953 289L958 293M808 546L797 547M834 225L844 228M876 539L866 547M778 387L770 397M930 280L926 276M846 174L852 182M884 465L878 471M659 300L666 306M840 276L842 269M717 321L724 323M841 218L838 209M639 318L646 299M732 270L721 273M766 533L757 531M770 335L770 323M989 288L986 294M810 577L817 576M659 335L664 342M681 287L690 282M820 403L829 399M805 332L798 336M799 208L799 214M953 289L962 289M756 554L761 565M773 426L771 418M928 527L929 519M683 335L675 335M897 478L906 486M783 433L776 435M907 236L905 244M895 271L892 266M728 261L718 263M807 424L810 413M796 368L785 367M690 257L690 251M774 525L779 515M904 430L911 442M689 269L697 264M916 256L921 264M881 548L884 561M864 267L859 274M785 318L787 327M865 205L871 201M951 296L952 305M949 329L952 335M922 254L926 260M779 288L771 287M910 560L904 553M610 390L614 399M603 378L605 371M930 280L928 290M648 288L651 293M904 553L908 544M762 406L768 410M823 505L827 513M802 433L791 430M706 296L707 302M790 201L785 211M732 270L728 261M598 366L605 371M890 483L890 492M779 372L785 367M868 197L873 192M735 491L743 482M766 167L769 174M959 331L952 335M734 298L733 292M958 340L950 341M1023 377L1030 374M887 275L890 281M917 288L909 283M790 201L784 192M865 484L861 495M800 361L796 368M672 316L664 314M812 526L804 536M731 523L740 522M767 351L761 359M806 215L813 209M768 223L762 216M686 299L694 291M928 536L920 527M840 314L846 321M818 286L807 288M743 277L731 278M861 229L861 236M753 490L751 499M829 283L832 292M977 275L969 278M885 377L894 376M831 478L838 486M755 459L746 465M870 439L869 429M868 526L862 521M825 298L835 299M753 490L744 492M757 279L765 277M831 530L838 523M927 556L919 553M887 204L897 202M845 492L853 489M774 255L769 245M833 218L827 221M797 346L792 340M739 564L731 553M740 459L738 472M814 263L804 258M785 301L782 293M981 351L972 347M887 275L883 279M912 575L915 567M767 517L770 504M821 203L816 196M927 310L917 300M972 320L965 326M835 424L826 425M706 276L715 276M840 192L837 197M760 210L763 204M651 293L654 288M888 410L897 410M1015 379L1020 369M861 495L867 505M749 404L752 385M896 365L886 367M792 332L798 336M837 399L846 409M956 267L964 274M876 377L868 367M760 539L766 533M693 326L691 333M775 263L769 260M832 292L835 299M832 408L836 415M715 343L704 341M777 467L780 459M903 258L902 251M806 397L800 390M853 326L863 327M839 513L851 505M792 236L786 235M918 237L919 243M643 361L638 355M791 212L799 208M795 176L788 177M846 362L847 371M764 239L772 235M625 333L614 344M765 369L768 378M743 197L736 203M835 424L836 415M728 513L731 523M913 279L907 274M943 275L939 282M700 311L707 302M753 586L761 585M925 242L919 243M802 375L809 385M813 180L805 185M937 238L934 244M837 375L847 371M938 303L938 313M774 572L779 583M771 543L761 547M883 497L875 493M874 218L871 223M896 227L888 226M797 566L798 578M721 223L715 227M961 537L953 539M870 275L859 274M765 179L759 178M893 234L900 235M930 236L924 235M806 215L815 219M785 344L786 336M938 303L930 301M930 572L943 550M857 479L847 484M792 236L799 234M877 461L878 471M805 566L810 560M738 513L736 505M783 176L774 176M974 293L980 293M992 366L984 364M879 274L879 266M648 288L646 299M871 283L874 292M730 218L723 217M807 424L802 410M936 528L937 541M822 381L809 385M660 326L658 320M828 418L826 425M672 316L681 312M829 435L821 438M785 503L783 494M920 274L912 269M947 250L944 258M777 247L769 245M806 397L815 395M736 336L721 348M804 175L808 169M797 346L785 344M787 579L782 571M810 510L815 504M885 285L883 292M840 276L851 278M962 316L965 326M625 333L629 341M1017 344L1011 349M807 221L815 219M779 372L772 368M815 202L816 196M823 546L828 552M846 409L836 415M720 334L708 335M803 449L793 456M768 361L761 359M878 240L880 235M882 200L877 197M747 512L757 513M757 227L749 226M876 539L881 548M885 331L878 333M955 350L962 347M819 428L826 425M658 292L654 288M749 285L752 291M750 441L764 445M831 354L839 351M774 572L763 574M801 264L797 254M699 303L700 311M775 146L779 152M867 293L874 292M917 446L911 442M806 209L813 209M760 210L762 216M754 189L762 189M966 335L973 328M730 218L728 213M821 217L815 219M673 302L679 304M930 236L934 231M895 271L898 267M924 478L920 489M893 234L890 240M781 546L778 538M837 197L835 204M686 291L690 282M812 173L821 175M849 516L838 523M724 247L730 249M841 236L848 246M643 361L647 349M665 273L661 268M941 251L947 250M906 486L906 478M793 540L788 549M768 266L757 263M802 493L798 504M964 296L958 300M950 265L943 263M756 522L767 517M849 311L862 315M787 450L789 438M760 210L766 209M925 242L934 244M911 442L903 438M938 259L943 263M835 232L830 240M621 343L629 352M962 316L964 309M832 408L837 399M841 218L844 228M835 183L837 173M647 349L651 340M731 523L720 521M809 204L808 197M802 493L806 501M896 215L889 210M860 444L863 435M864 561L866 547M792 356L786 352M805 246L816 247M608 353L598 366M747 520L740 522M764 147L775 146M935 549L927 556M773 303L779 303M881 298L883 292M894 194L897 202M826 522L827 513M880 384L887 390M890 281L883 279M719 563L733 569M763 283L771 287M623 376L628 382M949 363L947 355M897 410L889 398M750 208L744 214M822 279L815 277M699 345L699 334M824 449L821 438M838 325L827 328M927 556L915 567M853 452L848 459M784 280L780 276M920 489L920 497M799 291L792 292M754 236L748 232M858 361L846 362M798 186L792 193M771 287L773 292M812 436L821 438M820 336L812 336M904 385L896 391M939 501L931 502M750 441L748 434M850 379L843 382M855 408L846 409M890 483L888 475M720 334L726 332M812 336L816 343M869 389L876 377M779 303L774 309M817 515L827 513M847 390L860 386M813 191L816 196M901 527L900 537M945 269L943 263M872 519L862 521M610 390L610 382M937 238L944 238M913 294L900 290M779 215L770 216M701 243L707 237M679 320L670 326M759 257L757 263M791 430L789 438M934 286L931 295M746 248L750 253M711 262L715 257M878 340L885 331M777 336L785 344M910 560L907 570M763 204L766 209M817 567L820 559M617 351L623 360M775 164L782 158M713 304L707 313M985 319L991 316M821 175L828 178M820 336L819 327M869 360L875 351M962 316L971 309M604 398L603 386M706 296L695 299M754 304L757 311M867 240L878 240M802 554L808 546M792 193L796 200M603 378L594 384M915 460L906 456M846 362L853 367M1002 307L1010 321M861 398L868 397M703 249L710 256M751 547L760 539M767 351L777 356M881 358L888 359M792 236L799 242M702 262L706 268M770 495L783 494M776 184L774 176M792 332L786 336M867 309L869 300M701 243L695 248M941 289L945 293M870 208L865 205M818 241L816 247M658 347L665 349M697 319L690 321M678 266L671 269M815 395L821 389M670 326L666 321M924 218L927 223M892 266L898 267M770 495L758 497M735 430L731 440M690 321L692 315M799 311L794 307M625 369L632 374M668 280L665 273M950 265L945 269M881 185L875 183M850 237L848 246M831 196L826 189M908 519L913 525M761 385L768 378M802 168L799 163M901 527L908 519M861 495L874 503M820 478L812 482M768 223L761 223M763 283L757 279M924 458L926 467M938 313L931 315M768 296L776 298M778 387L783 379M666 291L658 292M873 235L867 240M783 309L774 309M1008 327L1015 335M920 527L928 527M817 303L813 296M658 347L647 349M778 397L770 397M686 316L681 312M990 337L983 331M754 428L743 426M733 292L725 288M804 237L809 240M867 240L867 232M786 352L778 344M814 349L809 355M783 522L788 514M697 259L690 251M725 497L722 484M913 294L923 296M743 501L747 512M951 296L947 288M761 416L752 419M736 336L760 337M888 554L881 548M781 264L787 262M877 197L871 201M879 365L885 377M764 328L770 323M760 539L745 537M760 291L771 287M842 541L836 536M631 358L623 360M853 251L857 243M753 490L743 482M823 505L817 515M930 236L937 238M886 259L887 265M654 305L649 316M795 442L787 450M797 566L785 559M743 426L752 419M914 504L918 518M785 211L781 201M772 277L774 282M790 149L784 147M894 194L881 185M800 382L809 385M917 215L908 208M687 277L689 269M733 292L742 285M783 249L777 247M797 470L785 471M843 501L845 492M904 430L917 436M679 320L685 327M658 347L659 335M778 557L781 546M745 307L754 304M646 334L647 323M867 505L874 503M832 367L837 375M805 193L813 191M935 549L932 564M679 320L686 316M762 142L779 142M737 257L742 254M685 259L690 251M707 313L707 302M783 176L783 186M887 250L880 255M807 221L813 225M802 554L797 547M928 536L927 549M759 150L762 142M821 217L821 226M872 264L879 266M777 336L777 328M938 259L933 263M813 225L820 233M1022 386L1015 388M758 365L761 376M938 303L946 307M695 248L690 251M666 266L665 273M911 494L904 496M764 196L757 194M744 416L735 430M783 176L776 184M874 247L880 255M666 291L676 293M861 495L853 489M754 214L744 214M787 450L793 456M783 494L787 481M739 555L731 553M882 523L888 515M872 477L879 487M857 375L853 367M727 560L731 553M885 331L885 343M768 361L777 356M725 460L722 472M727 294L733 292M902 377L896 365M927 310L931 315M858 361L861 368M963 264L953 247M611 366L605 371M764 462L753 467M847 259L842 269M675 335L670 326M917 230L924 235M896 227L889 220M847 466L859 463M851 189L847 196M767 342L778 344M974 335L973 328M845 187L847 196M666 266L671 269M925 242L918 237M659 354L665 349M853 561L845 565M818 241L815 236M883 497L889 507M658 347L659 354M810 465L798 462M765 179L774 176M909 202L917 215M872 257L879 266M721 273L731 278M821 209L817 213M826 495L817 497M827 167L828 178M891 420L903 415M900 242L890 240M1023 377L1030 382M763 173L769 174M854 232L848 223M723 543L715 553M907 274L895 271M897 202L903 203M956 358L947 355M983 331L990 322M825 572L837 565M892 522L882 523M812 406L821 411M777 328L786 336M842 295L850 293M723 217L736 203M855 417L844 418M734 327L726 332M746 574L750 561M850 545L858 552M924 235L918 237M845 187L841 180M752 259L750 253M772 235L771 241M797 346L786 352M861 342L855 335M774 525L778 538M730 241L724 247M855 417L866 417M895 247L896 254M840 192L843 200M868 197L859 201M789 221L785 211M659 274L665 273M759 257L768 266M912 575L907 570M660 326L666 321M777 233L772 235M779 288L774 282M857 213L865 218M771 418L780 414M787 579L798 578M917 288L919 282M717 240L717 247M729 477L722 472M787 228L789 221M791 186L788 177M795 322L785 318M1010 321L1014 329M843 200L835 204M838 325L835 335M755 200L764 196M974 293L964 296M1009 341L1002 342M867 240L861 236M869 186L875 183M812 482L804 483M845 286L837 286M667 332L659 335M821 226L827 221M808 232L815 236M896 464L884 465M896 500L904 496M785 318L783 309M900 242L905 244M761 454L772 461M629 352L623 360M920 527L929 519M778 557L770 552M752 394L762 393M772 277L780 276M835 183L841 180M780 530L786 535M814 263L821 254M853 207L848 215M843 200L845 208M746 574L739 564M880 397L889 398M686 299L695 299M664 314L666 321M706 276L706 268M958 340L966 335M829 205L832 212M810 465L819 457M788 313L794 307M974 335L978 344M692 308L681 312M764 445L775 453M678 266L672 263M899 425L903 415M739 308L729 308M958 307L964 309M725 497L728 505M766 209L774 212M940 244L937 238M933 225L944 238M721 223L723 217M887 390L889 398M848 215L857 213M974 304L966 302M861 398L860 386M831 354L832 367M745 271L740 267M903 449L903 438M778 478L771 481M795 176L801 180M877 432L876 424M750 208L754 214M610 390L619 382M937 541L944 537M768 223L768 229M783 433L791 430M938 322L931 315M845 492L852 497M802 433L812 436M971 309L966 302M832 502L827 513M790 201L792 193M947 250L951 259M731 278L724 280M884 241L886 233M794 153L793 160M776 184L778 190M917 446L917 436M892 260L903 258M818 286L815 277M760 539L757 531M889 398L896 391M880 515L872 519M845 252L837 243M912 552L908 544M794 299L787 296M777 356L778 344M890 544L896 557M619 382L628 382M752 394L752 385M887 250L896 254M754 573L761 585M792 292L785 287M932 483L928 494M842 269L851 278M910 230L918 237M770 504L757 513M818 419L807 424M732 224L725 229M907 274L909 283M932 251L927 248M794 227L801 221M821 175L820 186M810 577L798 578M772 206L781 201M751 499L744 492M928 536L936 528M652 282L654 288M859 529L853 523M758 365L761 359M826 522L817 515M805 246L797 254M963 264L958 258M822 279L821 266M697 259L703 256M1010 321L1002 322M905 267L898 267M880 248L878 240M729 477L738 472M754 181L759 178M903 466L911 472M772 206L766 209M812 406L810 413M972 269L964 274M909 202L924 218M952 335L950 341M890 483L898 492M884 422L876 424M861 261L861 249M754 161L750 166M908 519L918 518M832 456L827 462M776 298L773 292M907 274L912 269M830 391L831 382M779 152L785 153M854 299L850 293M672 316L679 320M945 300L945 293M856 510L865 513M710 256L714 251M649 316L655 314M806 441L803 449M994 354L1002 359M788 313L785 318M951 513L954 521M841 340L851 346M831 530L836 536M899 544L896 557M679 260L690 251M800 382L789 374M1012 358L1002 359M910 215L902 217M901 564L899 577M652 282L652 275M838 209L835 204M828 178L826 189M728 513L720 521M879 530L888 532M821 217L821 209M902 377L894 376M813 191L805 185M737 216L738 221M610 390L603 386M617 351L614 344M1007 383L1005 375M794 299L801 303M1010 368L1002 359M963 264L956 267M901 564L904 553M691 333L685 327M621 343L629 341M831 530L828 538M666 266L672 263M703 249L695 248M888 532L901 527M812 336L819 327M778 226L768 229M820 316L811 323M798 578L790 572M736 248L746 248M969 278L975 286M831 320L838 325M899 208L908 208M838 209L845 208M952 314L957 325M804 237L799 234M596 373L598 366M762 216L761 223M659 354L651 370M749 285L743 292M672 274L675 280M967 343L972 347M876 539L868 538M782 167L788 158M931 295L928 290M944 317L938 313M874 218L878 213M921 264L915 263M774 525L783 522M844 418L836 415M710 256L703 256M743 426L748 434M812 336L806 339M990 337L991 330M690 257L689 269M906 290L909 283M701 286L700 292M693 326L685 327M811 271L815 277M597 392L594 384M882 200L886 194M922 569L932 564M878 228L888 226M832 408L820 403M766 167L777 171M872 345L861 342M962 289L958 293M788 463L793 456M768 438L773 444M813 165L827 167M938 322L943 326M883 223L888 226M932 483L926 467M850 237L841 236M617 351L615 359M971 298L966 302M775 146L770 142M832 408L829 399M837 243L848 246M802 554L805 566M782 423L771 418M773 303L774 309M913 279L912 269M679 304L673 310M710 247L717 240M990 337L981 338M755 285L757 279M721 223L730 218M806 339L798 336M856 176L852 182M881 507L889 507M831 478L829 488M902 251L896 254M988 305L995 308M761 376L752 385M830 391L821 389M715 315L709 319M761 454L755 459M839 475L848 474M826 495L836 494M797 346L806 339M943 263L951 259M845 252L848 246M924 458L917 446M868 526L879 530M786 404L792 398M787 262L793 260M764 490L756 481M937 541L943 550M831 382L828 373M721 530L718 537M795 532L786 535M806 347L809 355M812 406L802 410M812 526L809 519M722 472L722 484M756 270L757 279M777 467L772 461M817 567L826 563M814 552L820 559M833 559L828 552M686 305L686 299M846 557L845 565M788 463L785 471M878 340L882 349M841 218L833 218M686 305L681 312M804 237L805 246M818 534L828 538M687 277L694 273M891 577L899 577M765 179L776 184M910 215L914 224M658 320L654 328M885 285L883 279M933 270L926 276M821 175L819 169M944 528L944 517M812 406L806 397M845 187L851 189M881 298L877 310M870 454L862 456M801 264L804 258M870 215L865 218M864 280L851 278M1002 350L1002 342M732 224L738 221M782 423L791 430M831 444L821 438M757 227L761 223M913 294L906 290M915 567L919 553M815 236L820 233M951 296L958 293M666 291L675 287M730 315L724 323M789 272L787 262M877 310L879 321M824 343L824 356M958 258L951 259M785 287L787 296M789 272L798 272M801 264L811 271M839 460L848 459M865 336L861 342M766 209L769 201M795 176L804 175M672 343L664 342M945 368L947 355M869 186L863 191M817 567L805 566M873 316L867 309M821 209L829 205M808 279L815 277M792 332L795 322M896 365L894 376M769 260L774 255M877 432L869 429M825 233L835 232M757 242L761 233M782 167L777 171M743 292L733 292M858 541L866 547M825 298L813 296M861 495L875 493M971 359L972 347M994 354L992 366M756 270L751 266M867 468L860 472M777 467L788 463M847 390L837 399M795 442L789 438M971 309L974 304M764 328L770 335M824 343L828 337M997 336L991 330M829 435L840 443M738 437L735 430M892 454L884 465M785 301L794 299M759 321L739 318M749 280L751 272M785 301L787 296M896 464L906 456M753 586L754 573M950 545L944 537M924 235L924 228M850 237L857 243M749 220L738 221M845 208L850 202M637 347L639 337M917 230L918 237M673 302L676 293M789 272L793 277M867 468L859 463M715 343L709 347M856 222L865 224M788 143L779 142M971 309L978 314M792 356L800 353M729 477L734 483M924 458L912 452M896 227L900 235M918 469L924 478M715 343L715 352M948 242L944 238M686 305L679 304M896 500L890 492M846 557L853 561M832 408L828 418M955 350L946 347M992 300L993 294M879 274L872 264M930 236L924 228M718 263L711 262M828 538L823 546M909 533L900 537M947 250L948 242M863 212L870 215M814 552L814 541M734 298L739 308M820 186L826 189M770 397L768 410M639 369L632 374M958 277L964 274M702 262L700 269M717 240L707 237M785 559L788 549M1015 335L1004 334M881 185L863 179M835 424L828 418M899 577L907 570M899 208L903 203M794 153L788 143M774 176L769 174M818 534L812 526M793 540L795 532M1019 362L1027 363M816 470L812 482M865 484L853 489M764 317L768 312M900 196L903 203M822 381L828 373M896 286L897 279M1009 341L1011 349M676 293L675 287M719 306L718 297M858 183L857 192M805 163L808 169M800 390L809 385M850 444L854 436M799 311L795 322M739 555L744 548M827 462L828 470M997 316L995 308M802 168L808 169M724 254L717 247M719 231L710 232M783 379L789 374M758 251L765 250M980 306L974 304M814 358L814 349M783 522L786 535M831 196L837 197M922 569L930 572M842 541L844 532M731 523L721 530M750 561L739 564M597 392L604 398M844 418L835 424M983 300L988 305M870 439L863 435M923 296L917 288M625 369L623 360M654 305L654 298M1015 379L1010 368M828 418L821 411M659 274L661 268M727 294L725 288M853 326L849 311M718 537L715 553M756 506L757 513M887 390L896 391M594 384L603 386M712 268L718 263M662 286L662 280M890 544L888 554M980 306L978 314M731 449L731 440M896 286L900 290M765 250L763 245M974 335L983 331M898 492L906 486M805 298L813 296M985 319L984 312M743 426L744 416M789 385L789 374M783 494L795 491M795 176L796 168M804 483L810 492M819 373L821 363M679 299L686 299M761 416L765 428M859 201L853 207M872 554L881 548M651 340L644 342M842 295L845 286M749 176L750 166M991 316L988 305M1010 368L1005 375M796 368L805 368M783 433L781 443M694 291L700 292M829 269L837 264M827 167L819 169M927 549L937 541M720 312L729 308M911 404L903 415M905 223L896 227M820 478L816 470M699 345L715 352M838 551L833 545M910 254L913 246M904 430L903 438M772 277L765 277M802 375L796 368M764 317L757 311M922 254L930 256M854 232L861 229M861 495L852 497M719 231L725 240M740 241L742 233M746 574L753 586M805 332L806 339M745 271L739 273M741 301L739 308M971 298L974 304M686 316L692 315M806 397L809 385M962 372L954 374M840 314L835 307M783 249L785 241M764 239L763 245M679 320L681 312M767 342L773 349M825 572L817 576M931 502L920 497M737 257L740 267M728 213L723 217M639 369L651 370M787 228L783 220M813 366L821 363M640 330L630 328M834 225L835 232M857 479L848 474M732 270L739 273M819 373L813 366M852 182L841 180M806 215L807 221M820 559L810 560M839 389L843 382M681 287L676 293M944 528L955 529M897 410L903 415M721 273L724 280M795 176L798 186M718 282L725 288M932 307L931 315M911 494L912 481M817 303L828 312M766 305L774 309M845 565L837 565M872 477L867 468M773 316L777 321M694 273L700 269M832 367L838 358M912 269L915 263M858 361L853 367M783 494L777 490M701 286L694 291M938 295L934 286M916 542L919 553M778 387L785 394M774 525L764 526M756 506L751 499M944 317L946 307M893 234L886 233M679 299L679 304M900 242L895 247M867 505L865 513M896 500L883 497M999 300L995 308M896 215L899 208M819 487L810 492M740 459L731 449M804 536L808 546M858 361L860 349M827 513L838 523M840 192L845 187M989 288L980 293M636 381L629 389M685 259L684 266M829 269L821 266M928 536L928 527M756 522L745 528M849 311L854 299M964 309L966 302M766 167L768 161M596 373L603 378M812 173L813 180M818 419L826 425M919 250L913 246M798 462L793 456M623 376L632 374M958 300L958 293M869 186L863 179M841 236L844 228M823 546L833 545M771 481L770 474M889 210L884 216M981 351L978 344M954 253L953 247M608 353L617 351M840 276L845 286M933 225L927 223M658 320L666 321M792 236L787 228M678 329L670 326M646 377L629 389M783 271L778 270M752 150L759 156M847 484L848 474M1002 307L999 300M799 284L807 288M795 442L793 456M903 258L898 267M938 259L932 251M888 359L894 355M828 552L833 545M636 381L646 377M950 545L953 539M943 275L945 269M873 316L862 315M846 362L852 354M841 430L851 428M740 267L733 264M797 512L804 525M811 271L821 266M879 283L871 283M902 377L904 385M745 307L757 311M951 296L958 300M832 456L843 452M910 418L903 415M651 370L665 349M863 327L870 332M796 368L792 356M835 183L828 178M840 276L837 264M757 279L762 272M735 491L736 505M815 202L808 197M844 305L835 299M829 269L840 276M763 173L753 172M993 346L988 351M785 503L788 514M679 299L686 291M708 286L712 282M788 313L795 322M850 545L838 551M724 247L725 240M778 313L774 309M920 274L921 264M859 463L860 472M720 334L727 340M992 300L999 300M774 525L766 533M980 293L986 294M819 428L829 435M899 544L908 544M780 414L788 413M820 478L819 487M754 181L749 176M817 567L817 576M913 246L905 244M963 264L972 269M795 491L790 497M783 249L791 250M874 325L863 327M819 487L829 488M777 336L767 342M799 284L791 285M829 205L831 196M859 529L868 538M797 346L800 353M754 214L762 216M808 546L814 541M666 306L664 314M777 356L773 349M865 379L860 386M938 295L931 295M881 358L886 367M1023 355L1017 344M802 554L810 560M778 478L770 474M997 316L1005 316M799 284L799 291M647 323L639 318M857 375L850 379M770 504L778 507M897 508L889 507M769 245L763 245M756 506L770 504M826 522L812 526M780 208L774 212M715 315L720 312M818 286L825 289M1008 327L1004 334M730 315L733 321M848 335L835 335M796 478L804 483M745 307L739 308M870 208L876 204M731 553L723 552M874 325L879 321M745 238L742 233M675 280L675 287M974 293L975 286M804 536L797 547M758 435L750 441M731 449L738 437M700 269L697 264M852 270L842 269M907 236L900 235M886 259L887 250M749 280L745 271M989 288L993 294M826 495L819 487M936 276L939 269M913 294L917 300M761 416L754 411M750 441L753 450M846 362L839 367M762 406L752 394M969 284L975 286M606 360L615 359M946 347L943 326M666 291L669 285M892 454L906 456M758 251L751 245M1007 383L1015 388M991 316L984 312M993 346L997 336M799 194L792 193M778 226L768 223M812 173L808 169M802 410L810 413M876 302L869 300M738 472L743 482M760 291L768 296M1017 344L1015 335M678 329L685 327M971 298L980 293M877 461L883 451M730 218L732 224M867 352L872 345M782 571L790 572M699 334L701 326M831 354L824 343M810 465L806 458M751 298L752 291M971 309L972 320M610 390L623 395M879 530L876 539M910 215L905 223M911 442L912 452M730 241L730 249M791 285L793 277M857 375L860 386M765 369L772 368M983 300L980 306M892 454L903 449M902 251L905 244M888 475L881 479M745 537L744 548M990 337L993 346M765 184L758 185M921 264L927 270M981 351L988 358M826 189L834 190M774 255L777 247M903 449L906 456M872 257L865 254M939 282L930 280M930 572L932 564M917 230L924 228M805 185L801 180M929 519L930 512M788 158L790 149M813 191L808 197M631 358L625 369M791 250L797 254M873 316L874 325M854 436L846 436M818 241L820 233M781 443L773 444M892 454L883 451M768 312L766 305M913 279L917 288M734 327L739 318M780 276L774 282M768 296L761 298M808 306L813 296M754 189L749 192M673 302L673 310M817 567L810 560M997 316L990 322M767 342L760 337M1015 335L1014 329M870 208L878 213M843 382L847 371M769 245L765 250M869 186L873 192M853 251L861 261M903 284L909 283M827 216L821 209M896 227L896 215M805 246L804 258M872 554L876 562M927 270L926 276M951 296L953 289M804 536L795 532M891 384L894 376M805 193L799 194M746 574L740 580M785 301L776 298M762 474L753 467M831 478L828 470M783 522L779 515M841 340L848 335M780 276L778 270M777 233L780 241M727 294L723 301M896 464L892 454M629 389L628 382M672 316L673 310M841 430L829 435M849 516L839 513M837 399L829 399M829 399L821 389M647 349L637 347M687 277L690 282M792 236L785 241M858 552L866 547M776 158L779 152M837 375L843 382M794 227L802 228M945 269L939 269M874 247L878 240M819 428L821 438M858 183L863 191M826 495L832 502M832 456L819 457M740 241L745 238M762 406L754 411M832 367L839 367M962 372L984 364M829 283L837 286M955 529L961 537M954 374L955 366M959 331L966 335M679 260L684 266M702 262L703 256M891 442L903 449M922 569L915 567M713 304L715 315M859 201L865 205M994 354L988 358M865 218L871 223M951 280L947 288M863 435L869 429M699 334L704 341M881 507L873 511M881 298L900 290M700 311L692 315M727 490L734 483M799 242L791 244M761 565L770 563M764 490L770 495M870 454L883 451M839 351L838 358M873 511L872 519M912 575L907 581M844 532L851 535M891 384L902 377M785 301L783 309M817 515L810 510M623 360L615 359M901 397L897 410M760 291L763 283M784 280L791 285M781 201L769 201M793 160L799 163M829 488L838 486M840 314L838 325M768 266L778 270M844 532L838 523M735 491L734 483M927 549L927 556M974 335L981 338M865 224L867 232M938 259L944 258M806 339L816 343M869 389L868 397M839 475L838 486M848 215L845 208M815 236L813 225M831 382L821 389M771 481L756 481M872 257L880 255M831 257L845 252M831 354L834 343M892 522L901 527M743 277L739 273M861 495L851 505M768 272L768 266M823 505L817 497M748 232L757 227M794 419L802 410M780 241L783 249M713 296L707 302M806 215L817 213M813 296L807 288M917 230L914 224M822 381L831 382M852 270L851 278M884 241L878 240M792 398L799 402M742 226L749 226M731 278L739 273M872 257L874 247M816 196L808 197M731 449L743 449M814 358L809 355M699 303L706 296M668 280L675 280M761 454L764 445M784 147L779 142M820 186L816 196M851 428L854 436M878 340L872 345M812 173L804 175M654 305L659 308M853 207L850 202M936 276L933 270M1008 327L1010 321M878 228L873 235M819 428L818 419M814 263L811 271M725 288L724 280M996 327L1004 334M767 517L779 515M672 343L684 343M797 512L788 514M761 565L754 573M872 554L884 561M848 223L848 215M647 323L658 320M978 344L972 347M730 315L739 318M824 244L821 254M780 530L778 538M881 507L880 515M659 300L668 297M721 348L715 352M762 393L770 386M883 210L878 213M958 258L956 267M746 248L745 238M770 386L770 397M623 395L614 399M888 554L896 557M802 433L795 442M734 298L729 301M831 257L821 254M841 430L846 436M764 239L757 242M787 262L783 271M745 537L757 531M879 283L874 292M870 208L870 215M917 215L914 224M820 336L828 337M974 335L967 343M610 382L603 386M757 311L739 318M900 537L908 544M978 324L973 328M684 266L690 257M706 296L708 286M989 288L999 300M832 456L824 449M821 217L817 213M632 336L630 328M659 300L654 298M872 477L878 471M785 359L777 356M728 513L736 505M910 254L902 251M967 343L966 335M892 266L892 260M803 449L806 458M659 274L652 275M759 156L754 161M895 247L902 251M772 153L766 155M887 204L883 210M667 332L670 326M835 232L841 236M1012 358L1010 368M831 354L824 356M754 236L751 245M673 310L664 314M899 518L888 515M806 458L819 457M870 439L868 447M876 444L868 447M872 229L873 235M736 235L740 241M794 419L791 430M725 240L730 234M865 336L863 327M939 501L928 494M967 343L962 347M672 343L665 349M778 397L785 394M820 316L817 303M774 572L770 563M759 257L752 259M838 209L832 212M777 233L786 235M964 296L966 302M939 282L934 286M891 384L887 390M785 344L792 340M822 381L821 389M835 335L834 343M770 495L777 490M847 466L848 459M738 472L746 465M831 257L829 269M957 325L951 321M910 560L912 552M846 174L832 170M778 344L773 349M928 536L937 541M861 304L867 309M988 358L988 351M892 347L885 343M756 270L762 272M787 262L783 258M817 303L808 306M701 326L708 329M752 150L754 161M922 506L920 497M987 343L993 346M881 185L886 194M820 186L813 191M646 334L651 340M742 226L749 220M888 532L890 544M763 574L770 563M745 261L752 259M754 236L757 242M694 273L690 282M993 294L986 294M817 567L810 577M915 567L907 570M843 501L852 497M769 580L779 583M772 461L770 474M851 346L860 349M785 344L778 344M779 215L774 212M892 522L899 518M762 189L757 194M615 373L610 382M1002 368L1002 359M845 286L851 278M850 444L843 452M778 507L788 514M699 345L704 341M955 350L956 358M652 282L662 280M646 299L654 298M965 326L966 335M783 494L790 497M938 313L938 322M940 492L945 508M827 328L835 335M754 189L757 194M756 522L747 520M879 365L869 360M825 298L828 312M963 357L971 359M824 449L819 457M799 402L800 390M896 500L898 492M869 406L855 408M799 208L802 202M728 513L728 505M946 282L951 280M649 316L646 299M1008 327L1014 329M874 325L870 332M882 200L887 204M847 390L850 379M806 501L798 504M666 291L668 297M888 410L877 407M770 142L762 142M799 311L801 303M770 552L771 543M660 326L654 328M777 336L786 336M745 528L747 520M899 425L910 418M857 375L847 371M766 167L775 164M858 183L863 179M941 289L938 295M796 168L799 163M852 270L861 261M754 411L752 419M750 441L738 437M858 424L854 436M806 215L799 214M693 326L697 319M752 150L762 142M962 347L972 347M871 283L870 275M743 482L734 483M872 229L878 228M861 261L865 254M675 280L669 285M864 280L871 283M827 462L819 457M673 310L681 312M748 457L753 450M763 574L754 573M753 172L759 178M862 315L867 309M805 246L809 240M699 303L692 308M778 387L770 386M849 311L844 305M701 286L690 282M777 321L787 327M930 236L934 244M773 316L770 323M766 167L757 167M736 248L740 241M947 288L945 293M916 542L912 552M856 222L848 223M946 347L950 341M958 300L952 305M875 493L879 487M725 460L731 449M763 204L764 196M756 554L761 547M738 472L730 469M854 299L867 293M797 470L796 478M880 397L868 397M869 389L860 386M821 175L813 180M789 221L783 220M903 449L912 452M857 375L865 379M858 541L868 538M888 567L896 557M798 186L799 194M873 192L881 193M768 312L757 311M632 374L628 382M802 228L801 221M881 358L875 351M651 340L654 328M835 335L828 337M746 248L751 245M827 216L832 212M812 173L819 169M937 511L930 512M870 454L868 447M851 189L852 182M780 530L783 522M845 187L852 182M897 478L888 475M868 197L871 201M853 367L861 368M767 351L773 349M813 366L805 368M820 186L823 194M800 361L805 368M721 508L722 484M772 368L785 367M646 334L644 342M712 268L721 273M863 435L854 436M799 402L793 407M876 444L884 437M754 181L749 192M774 176L777 171M911 404L904 385M713 304L707 302M839 475L831 478M729 308L729 301M781 443L776 435M829 283L832 276M904 230L900 235M796 368L785 359M658 320L664 314M692 308L695 299M933 263L943 263M619 382L610 382M714 251L717 247M925 282L920 274M763 173L766 167M878 340L870 332M1008 327L1002 322M770 188L764 196M952 314L946 307M1023 377L1015 379M820 478L831 478M835 183L834 190M814 263L821 266M882 349L885 343M916 256L915 263M726 332L727 340M658 347L651 340M969 284L958 284M608 353L606 360M950 545L961 537M698 279L700 269M721 223L732 224M823 505L815 504M867 468L878 471M651 293L654 298M697 259L695 248M847 484L838 486M719 231L725 229M879 274L887 265M879 530L872 519M742 226L742 233M647 349L644 342M899 425L891 420M748 201L743 197M873 235L880 235M678 329L683 335M909 533L920 527M817 567L825 572M907 511L904 496M780 276L783 271M964 364L984 364M801 264L794 267M792 332L792 340M802 375L789 374M770 216L766 209M836 494L838 486M839 513L827 513M748 474L746 465M879 530L868 538M775 146L779 142M754 428L752 419M799 284L798 272M720 334L717 327M799 291L807 288M962 372L964 364M778 478L785 471M818 534L814 541M891 384L904 385M739 308L729 301M790 201L781 201M850 237L854 232M669 285L675 287M839 460L847 466M774 572L782 571M798 578L805 566M783 220L785 211M917 288L928 290M829 435L826 425M767 517L778 507M861 249L867 240M730 218L734 209M929 519L918 518M903 258L905 267M797 346L792 356M806 209L799 214M997 316L1002 307M637 347L629 352M805 298L807 288M962 316L957 325M850 444L846 436M954 521L961 537M770 142L779 142M891 577L876 562M794 299L792 292M909 261L915 263M899 577L907 581M857 192L863 191M943 326L950 341M1023 355L1019 362M817 213L813 209M873 511L880 515M900 242L900 235M747 512L736 505M755 200L755 207M896 227L902 217M826 522L838 523M789 374L785 367M846 557L837 565M860 444L853 452M698 279L706 276M679 299L676 293M658 320L655 314M772 153L779 152M840 192L834 190M681 287L686 291M717 291L725 288M847 484L845 492M654 305L655 314M799 291L791 285M785 503L790 497M814 552L810 560M967 343L978 344M905 223L902 217M940 244L934 244M811 375L813 366M738 437L731 440M823 546L820 559M924 235L925 242M884 241L880 235M788 158L788 169M781 201L784 192M804 525L795 532M772 277L778 270M938 303L938 295M897 508L904 496M877 432L870 439M751 298L743 292M959 331L949 329M978 314L984 312M876 444L870 439M783 494L770 504M778 196L769 201M879 530L882 523M992 300L988 305M710 247L714 251M778 478L777 467M660 326L670 326M996 327L991 330M809 204L806 209M719 563L727 560M764 328L759 321M781 264L783 271M703 249L710 247M832 456L831 444M730 241L730 234M658 292L654 298M835 204L832 212M789 272L794 267M755 200L763 204M1015 379L1022 386M828 178L832 170M639 337L629 341M901 564L910 560M867 352L875 351M794 267L793 260M764 147L766 155M802 433L794 419M766 305L761 298M723 301L729 308M971 309L964 309M603 378L610 382M1002 368L1005 375M871 283L867 293M847 390L843 382M802 433L807 424M686 291L686 299M725 497L736 505M751 499L747 512M775 453L773 444M802 168L805 163M870 454L867 468M831 382L843 382M888 532L900 537M827 221L828 227M615 373L619 382M890 483L897 478M796 524L795 532M951 272L950 265M876 444L883 451M764 317L770 323M842 295L832 292M846 174L827 167M873 316L863 327M888 410L884 422M876 562L884 561M790 149L788 143M791 212L785 211M882 349L875 351M817 213L815 219M694 291L695 299M782 423L794 419M808 232L813 225M858 361L852 354M694 291L690 282M755 200L749 192M754 181L754 189M887 204L894 194M625 333L632 336M826 563L828 552M938 313L946 307M777 328L777 321M779 583L761 585M673 302L666 306M799 208L796 200M777 467L770 474M889 220L884 216M701 243L710 232M794 153L805 163M985 319L983 331M707 313L709 319M799 291L794 299M811 323L805 332M840 314L844 305M861 495L856 510M823 546L814 541M742 226L732 224M978 324L985 319M698 279L701 286M798 186L801 180M678 266L679 260M756 522L764 526M876 302L877 310M729 308L719 306M636 381L628 382M662 286L658 292M727 294L729 301M719 563L715 553M736 248L737 257M938 295L930 301M797 254L804 258M776 220L770 216M856 222L865 218M805 298L794 299M911 494L920 497M745 271L751 272M748 474L753 467M922 569L927 556M659 300L659 308M992 366L996 375M1002 368L996 375M829 435L831 444M837 173L832 170M869 389L861 398M892 347L882 349M725 497L721 508M739 555L735 545M927 549L919 553M905 223L914 224M781 443L775 453M783 176L788 169M831 444L843 452M846 557L858 552M896 286L890 281M751 547L750 561M945 300L946 307M632 336L629 341M778 387L775 378M818 419L821 411M860 349L867 352M846 362L845 351M851 505L852 497M796 478L785 471M742 254L750 253M958 340L962 347M1010 368L1020 369M813 446L821 438M710 256L715 257M795 176L802 168M649 316L647 323M691 344L715 352M734 327L736 336M978 324L983 331M972 320L978 314M728 261L724 254M936 528L944 517M659 335L651 340M981 351L984 364M784 280L793 277M920 274L919 282M847 466L848 474M817 515L815 504M903 438L894 431M956 267L951 259M795 555L788 549M923 303L917 300M743 482L748 474M913 279L920 274M896 557L904 553M818 419L828 418M659 308L664 314M891 577L907 581M858 541L851 535M694 273L689 269M821 411L820 403M785 344L786 352M749 404L752 394M940 244L944 238M799 208L806 209M715 343L727 340M631 358L639 369M824 244L825 233M922 254L927 248M771 195L764 196M720 312L717 321M1023 377L1020 369M805 298L801 303M729 477L722 484M678 266L680 277M736 235L730 241M873 192L875 183M909 261L903 258M931 295L930 301M792 356L785 359M621 343L614 344M760 346L770 359M916 434L911 456M987 334L991 359M819 456L810 475M875 443L874 461M786 413L776 409M730 540L743 554M888 572L871 556M854 359L843 363M752 397L743 409M900 416L910 419M750 582L722 566M752 397L760 407M835 472L829 489M911 456L909 474M739 574L750 582M747 538L742 513M817 438L805 447M782 451L776 428M881 550L883 525M857 393L850 409M723 338L714 351M809 424L805 447M884 364L895 375M942 551L935 528M775 499L774 521M760 346L760 365M880 478L891 488M644 343L651 331M888 572L896 556M927 549L935 528M782 451L773 456M850 467L842 486M760 346L767 333M801 494L813 492M788 556L787 572M855 499L847 516M839 556L832 531M841 444L827 436M624 387L636 384M685 335L658 346M767 333L780 354M927 549L920 561M812 408L823 412M807 548L809 575M790 471L794 447M866 486L874 461M942 551L927 549M831 505L832 531M864 543L857 553M603 384L611 369M743 445L751 469M767 391L767 375M871 399L880 380M818 368L804 376M770 555L756 539M981 354L987 334M921 456L928 471M785 395L785 377M752 397L756 380M809 360L803 337M774 521L779 547M603 360L597 373M753 497L744 495M935 528L932 509M774 521L764 522M864 543L854 537M1008 359L1024 359M603 384L594 390M842 486L829 489M733 489L741 469M776 409L777 387M809 360L798 361M786 535L798 531M752 565L743 554M950 332L956 346M822 386L828 368M915 486L909 474M767 391L760 407M614 390L594 390M845 536L848 564M739 574L752 565M916 434L921 456M880 478L874 461M836 352L847 335M875 536L871 556M785 431L794 447M957 373L949 364M900 416L906 395M800 474L805 447M831 505L829 489M893 399L900 416M854 359L847 335M847 516L862 526M873 361L864 356M823 529L824 552M785 377L780 354M831 455L827 436M787 572L809 575M744 495L741 469M782 451L790 471M597 373L594 390M916 543L907 538M774 575L765 584M897 475L909 474M820 481L819 456M760 448L752 436M776 428L786 413M867 511L862 526M824 552L814 560M724 481L731 469M801 494L800 474M958 531L945 505M857 553L848 564M942 551L947 522M650 373L658 346M827 570L848 564M774 575L762 569M813 492L820 509M915 486L925 489M857 553L871 556M752 565L762 569M767 391L756 380M720 536L716 553M778 473L775 499M899 458L888 471M866 418L850 409M644 343L635 340M938 495L925 489M798 531L798 513M811 507L807 527M880 380L871 381M817 438L827 436M701 346L710 334M801 494L811 507M786 535L798 554M797 412L809 424M612 347L603 360M720 536L734 521M809 360L804 376M847 516L842 486M764 504L766 483M775 499L791 500M785 395L777 387M650 373L643 360M732 557L722 566M900 574L896 556M1018 340L1007 332M786 535L774 521M897 475L891 488M785 377L777 387M962 333L976 330M846 389L852 375M867 511L875 536M1007 332L976 330M867 511L866 486M776 428L776 409M890 538L907 538M864 543L862 526M999 346L1000 373M714 351L701 346M786 535L779 547M753 497L751 469M863 435L854 428M916 434L910 419M836 352L833 332M631 366L625 335M832 404L832 421M750 582L762 569M624 387L619 361M938 495L945 505M803 337L818 337M650 373L636 384M843 363L852 375M848 564L871 556M742 513L744 495M760 448L760 425M916 543L924 525M809 392L795 386M916 434L901 442M969 348L962 333M865 463L863 435M877 415L887 434M809 575L798 554M1008 359L1000 373M877 415L866 418M825 346L818 368M951 544L947 522M854 428L850 409M910 516L903 500M833 332L818 337M728 451L741 469M658 346L643 360M832 404L846 389M669 334L658 346M878 500L893 504M785 484L778 473M865 463L852 447M886 452L887 434M823 412L832 421M847 516L854 537M827 570L814 560M624 387L614 390M619 361L611 369M732 557L716 553M850 467L842 461M846 389L850 409M900 416L887 434M701 346L685 335M784 515L775 499M798 361L804 376M910 516L898 521M760 407L752 417M864 543L875 536M797 412L809 392M886 452L888 471M854 428L842 416M741 469L731 469M669 334L685 335M785 395L795 386M795 386L804 376M907 538L896 556M924 525L935 528M809 392L818 368M878 500L880 478M752 397L752 417M881 550L888 572M773 456L761 465M785 395L776 409M625 335L635 340M886 452L901 442M756 380L767 375M900 416L890 415M823 529L831 505M714 351L710 334M785 377L795 386M631 366L635 340M991 359L999 346M726 512L734 521M776 428L785 431M747 538L756 539M915 486L903 500M756 539L764 522M893 399L884 398M820 481L810 475M900 416L901 442M846 389L842 416M809 575L814 560M893 504L891 488M878 500L883 525M845 536L832 531M785 484L791 500M903 500L909 474M834 383L828 368M760 448L767 437M694 335L710 334M815 542L814 560M818 368L818 337M999 346L1007 332M742 429L743 445M835 472L842 486M819 456L831 455M924 525L927 549M842 486L856 481M820 481L835 472M854 359L852 375M866 418L854 428M756 380L743 409M822 386L834 383M747 538L734 521M728 451L733 433M897 475L903 500M784 515L798 513M723 338L735 330M756 380L760 365M753 497L755 522M776 428L760 425M798 361L789 353M762 569L765 584M1008 359L1007 332M767 333L776 330M778 473L766 483M760 448L761 465M820 481L831 455M766 483L761 465M886 452L899 458M860 339L869 332M925 489L932 509M895 375L906 395M862 375L871 381M884 364L877 345M957 373L963 361M1025 387L1029 372M819 456L805 447M841 444L832 421M856 481L866 486M865 463L856 481M644 343L658 346M916 577L928 572M854 359L864 356M798 531L807 527M752 436L752 417M797 412L796 430M823 412L809 424M755 522L764 522M733 489L734 521M884 364L873 361M739 574L743 554M805 447L794 447M743 445L728 451M743 409L733 433M969 348L976 330M823 529L820 509M764 504L774 521M603 384L603 360M877 345L886 335M800 474L794 447M938 495L932 509M790 471L785 484M823 529L815 542M956 346L963 361M770 359L767 375M824 552L839 556M723 338L710 334M644 343L643 360M857 393L871 399M847 335L869 332M893 504L883 525M643 360L635 340M901 442L910 419M791 331L803 337M785 377L789 353M733 489L731 469M863 435L852 447M685 335L694 335M764 504L764 522M770 555L770 537M890 538L881 550M981 354L976 330M742 513L734 521M907 558L896 556M831 505L842 486M612 347L619 361M893 399L890 415M906 395L910 419M850 409L842 416M751 469L766 483M956 346L949 364M776 428L767 437M751 469L752 436M651 331L625 335M877 415L884 398M651 331L658 346M790 471L778 473M767 375L760 365M809 360L818 337M770 359L760 365M782 451L794 447M981 354L969 348M865 463L866 486M786 413L796 430M962 333L956 346M742 429L752 436M611 369L603 360M845 536L847 516M839 556L848 564M807 548L815 542M770 359L767 333M893 504L903 500M910 516L915 486M873 361L871 381M611 369L614 390M1018 340L1029 372M770 537L779 547M791 500L798 513M847 516L831 505M880 478L888 471M612 347L611 369M921 456L911 456M873 361L877 345M832 404L822 386M900 574L907 558M751 469L741 469M832 421L842 416M981 354L991 359M788 556L799 571M726 512L724 481M947 522L958 531M726 512L733 489M797 412L786 413M841 444L852 447M901 442L911 456M915 486L921 456M750 582L765 584M893 504L898 521M752 397L767 391M881 550L875 536M834 383L843 363M760 425L767 437M770 555L762 569M797 412L785 395M855 499L856 481M770 359L785 377M631 366L624 387M855 499L862 526M798 531L798 554M775 499L764 504M790 471L791 500M875 536L883 525M878 500L891 488M865 463L850 467M877 345L864 356M969 348L963 361M774 521L770 537M822 386L809 392M823 412L822 386M949 364L963 361M819 456L827 436M651 331L635 340M910 516L907 538M1011 379L1024 359M743 445L733 433M801 494L798 513M807 527L820 509M720 536L726 512M776 409L760 407M881 550L871 556M716 553L730 540M981 354L963 361M819 456L817 438M832 404L823 412M1018 340L1024 359M832 404L834 383M624 387L611 369M957 373L981 354M820 481L829 489M801 494L810 475M631 366L643 360M920 509L910 516M797 412L795 386M871 399L871 381M760 425L776 409M877 415L890 415M884 398L890 415M774 575L779 547M899 458L909 474M767 391L777 387M1008 359L999 346M855 499L842 486M799 571L798 554M809 392L804 376M760 448L773 456M766 483L773 456M881 550L896 556M742 429L733 433M925 489L928 471M907 538L907 558M823 529L832 531M916 577L920 561M877 415L875 443M900 574L916 577M855 499L866 486M751 469L744 495M784 515L798 531M790 471L801 494M782 451L785 431M916 577L907 558M935 528L947 522M887 434L890 415M785 431L796 430M942 551L951 544M728 451L731 469M760 425L752 436M791 331L780 354M631 366L636 384M744 495L733 489M886 452L875 443M742 513L733 489M764 504L755 522M920 509L925 489M887 434L875 443M950 332L962 333M857 393L846 389M619 361L625 335M888 471L891 488M862 375L852 375M710 334L735 330M880 478L866 486M739 574L732 557M932 509L945 505M865 463L875 443M701 346L694 335M938 495L928 471M875 536L862 526M820 481L820 509M753 497L764 504M855 499L867 511M864 543L871 556M770 359L777 387M847 335L843 363M893 399L895 375M857 393L871 381M916 543L920 561M854 428L852 447M669 334L694 335M832 404L842 416M752 565L750 582M732 557L743 554M910 516L924 525M928 572L920 561M898 521L883 525M842 486L842 461M809 575L827 570M897 475L888 471M798 361L785 377M916 543L907 558M987 334L1007 332M916 543L927 549M969 348L956 346M871 399L866 418M891 352L877 345M752 565L756 539M873 361L862 375M843 363L828 368M824 552L815 542M895 375L891 352M862 375L864 356M860 339L864 356M867 511L883 525M800 474L810 475M720 536L730 540M751 469L761 465M785 484L775 499M832 421L827 436M807 548L807 527M898 521L903 500M603 384L597 373M812 408L797 412M747 538L743 554M831 455L842 461M920 509L915 486M767 391L776 409M860 339L847 335M777 387L767 375M836 352L825 346M776 428L773 456M811 507L813 492M1011 379L1000 373M767 333L735 330M903 500L891 488M784 515L774 521M907 558L920 561M787 572L774 575M901 442L887 434M785 431L786 413M807 548L798 531M743 445L752 436M788 556L798 554M603 384L614 390M747 538L755 522M770 555L774 575M760 448L751 469M643 360L636 384M1011 379L1008 359M825 346L828 368M857 393L866 418M897 475L899 458M852 447L842 461M820 481L813 492M728 451L724 481M743 445L741 469M835 472L831 455M1018 340L1008 359M775 499L766 483M847 516L832 531M862 526L854 537M907 538L898 521M863 435L866 418M788 556L779 547M895 375L884 398M836 352L828 368M787 572L765 584M1025 387L1024 359M890 538L896 556M756 539L770 537M824 552L827 570M756 539L743 554M880 380L884 398M801 494L791 500M742 429L743 409M799 571L809 575M760 346L735 330M742 429L752 417M770 537L764 522M950 332L976 330M942 551L928 572M812 408L809 424M1025 387L1011 379M951 544L958 531M631 366L619 361M732 557L730 540M841 444L831 455M863 435L875 443M841 444L842 416M927 549L928 572M845 536L854 537M884 364L880 380M864 356L869 332M756 539L755 522M825 346L818 337M850 467L852 447M901 442L899 458M807 548L798 554M846 389L843 363M742 513L755 522M874 461L888 471M878 500L866 486M798 361L803 337M791 331L818 337M778 473L773 456M612 347L625 335M831 505L820 509M809 424L796 430M747 538L730 540M857 393L862 375M921 456L909 474M810 475L805 447M935 528L945 505M756 539L762 569M825 346L833 332M891 352L886 335M824 552L832 531M790 471L800 474M860 339L854 359M862 375L854 359M947 522L945 505M890 538L883 525M1024 359L1029 372M807 527L815 542M770 359L780 354M857 553L854 537M807 527L798 513M845 536L839 556M924 525L932 509M809 360L818 368M799 571L787 572M820 509L829 489M782 451L778 473M878 500L867 511M886 452L874 461M669 334L651 331M884 364L891 352M822 386L818 368M871 399L884 398M900 574L888 572M920 509L932 509M877 345L869 332M753 497L766 483M810 475L813 492M785 395L786 413M987 334L999 346M742 513L753 497M847 335L833 332M784 515L791 500M920 509L924 525M835 472L842 461M916 543L910 516M865 463L874 461M893 399L906 395M807 548L814 560M794 447L796 430M877 415L871 399M798 361L795 386M846 389L834 383M739 574L722 566M987 334L976 330M784 515L786 535M857 393L852 375M743 409L752 417M812 408L809 392M823 412L827 436M730 540L734 521M811 507L820 509M805 447L796 430M895 375L880 380M716 553L722 566M818 368L828 368M873 361L880 380M811 507L798 513M780 354L789 353M911 456L899 458M780 354L776 330M850 467L856 481M823 412L817 438M866 418L875 443M787 572L779 547M817 438L809 424M886 335L869 332M788 556L786 535M773 456L767 437M839 556L827 570M841 444L842 461M890 538L898 521M791 331L789 353M760 425L760 407M791 331L776 330M915 486L928 471M760 425L752 417M789 353L803 337M724 481L733 489M848 564L854 537M812 408L822 386M950 332L949 364M991 359L1000 373M770 555L779 547M823 529L807 527M841 444L854 428M836 352L843 363M865 365L861 365M768 565L767 569M860 530L855 530M767 534L767 529M762 580L770 580M829 356L830 351M632 352L630 356M969 332L973 327M774 510L770 506M907 538L911 541M815 235L814 230M889 201L886 197M984 305L982 303M1005 339L1005 333M790 220L788 224M787 208L788 210M860 275L856 281M758 216L760 221M989 299L986 297M1003 357L1000 360M812 177L811 180M899 217L897 215M902 517L900 515M860 541L858 537M880 335L875 337M790 174L786 172M881 393L876 401M756 200L758 209M772 211L775 215M865 274L869 278M793 570L795 568M1017 365L1020 363M824 556L823 564M988 293L981 295M839 529L838 524M952 273L950 276M783 179L785 183M961 323L967 324M902 229L906 230M813 355L817 354M787 237L789 244M809 238L804 234M902 505L903 502M982 338L980 343M959 341L962 342M885 232L891 230M847 517L851 521M869 209L874 210M855 530L855 525M801 489L806 490M911 508L908 506M982 300L979 298M884 520L880 516M888 259L891 259M851 459L855 463M772 541L774 548M847 525L844 523M615 377L614 379M902 558L898 560M837 467L837 463M626 356L627 359M867 336L871 337M637 335L641 338M896 224L892 220M831 518L830 523M830 351L830 346M1019 355L1023 364M802 197L797 197M708 304L707 296M869 209L866 205M789 573L791 568M778 551L774 548M1019 355L1014 354M894 201L886 197M906 220L910 220M885 238L883 235M848 538L851 539M777 224L773 226M763 565L762 567M902 248L901 251M912 560L911 564M768 483L769 486M802 197L807 197M921 490L919 498M806 184L809 186M801 205L804 208M799 503L796 503M856 540L854 546M888 214L885 216M833 495L832 498M785 183L787 181M838 550L835 553M624 388L623 384M1023 382L1023 378M622 372L618 374M779 213L778 211M824 556L828 554M810 552L813 550M632 369L629 370M847 338L841 336M904 252L905 257M906 543L903 546M812 202L816 202M892 503L889 499M826 426L831 426M893 261L891 259M977 318L978 321M623 369L628 366M944 248L954 254M839 341L842 343M776 362L782 359M860 519L857 522M755 491L764 501M926 521L926 530M1018 379L1023 378M791 471L799 472M988 311L984 312M907 573L911 572M613 382L611 384M839 357L837 353M856 472L861 480M872 223L864 224M854 537L858 537M853 448L852 455M871 408L866 411M1023 372L1023 364M853 229L857 232M946 309L941 307M755 570L759 568M763 244L768 244M650 342L647 345M919 230L923 230M776 495L778 498M692 324L688 332M787 553L784 549M888 214L893 211M1009 345L1015 351M766 340L771 342M870 345L868 347M847 517L847 521M988 320L983 319M847 346L849 341M673 313L677 322M960 355L960 352M984 330L981 332M782 225L779 229M874 253L877 247M784 549L783 543M850 346L846 350M853 219L859 217M841 505L846 503M656 345L654 339M829 471L833 478M790 536L795 535M955 337L959 341M823 564L820 559M791 208L789 206M804 234L811 231M838 433L837 437M894 513L891 513M838 550L841 554M789 357L788 361M758 216L758 209M912 265L917 263M984 308L988 311M907 556L910 553M753 509L748 518M816 536L820 534M784 318L778 323M976 288L972 289M787 553L782 552M859 200L859 206M607 388L607 393M772 557L767 561M799 361L803 358M646 335L654 339M816 531L820 534M1001 312L1000 318M769 241L768 244M820 195L816 193M921 562L924 560M772 541L770 549M994 313L991 312M766 506L766 511M962 281L967 280M766 361L772 360M896 272L896 267M789 180L786 178M634 372L638 373M1000 346L1004 347M782 527L785 526M881 242L877 247M772 528L769 524M753 559L748 566M861 280L868 283M856 209L853 209M848 354L846 352M775 530L775 534M902 541L906 543M903 522L907 521M875 354L874 357M875 514L876 504M852 533L855 533M976 303L979 305M877 370L874 367M780 342L785 344M767 222L772 221M869 278L873 281M890 490L890 486M861 373L859 376M981 327L981 332M876 496L868 504M845 496L847 494M888 508L884 506M897 264L899 267M960 352L958 350M997 359L996 362M912 527L917 528M852 181L845 180M787 481L791 480M607 384L611 384M785 190L785 193M955 337L954 343M919 576L924 569M844 193L837 192M940 285L937 284M755 491L747 500M777 353L778 358M897 239L894 242M686 310L687 318M1017 369L1017 373M882 362L877 370M847 338L845 341M852 343L849 341M782 523L782 527M991 348L988 353M862 511L859 515M848 373L853 372M841 433L837 437M954 312L955 317M874 392L877 387M874 388L877 387M803 495L804 498M1014 370L1017 373M765 206L762 210M956 282L959 283M666 334L660 335M987 340L986 334M969 292L975 296M905 518L904 514M789 492L790 495M859 263L868 264M776 495L772 491M803 548L803 545M810 545L813 541M804 498L800 499M768 174L770 170M890 494L890 490M878 346L875 344M935 247L940 249M871 401L866 403M657 350L656 345M785 365L788 361M845 377L848 381M970 301L971 297M802 517L805 521M892 532L890 529M942 297L942 293M818 211L815 214M785 250L789 244M691 296L691 288M884 506L885 509M843 464L848 471M820 189L820 195M812 560L814 558M964 348L968 346M867 250L868 255M843 464L838 459M776 230L770 231M858 191L862 193M781 167L789 170M706 330L697 332M829 361L821 360M918 260L917 256M863 286L856 281M1000 346L995 344M854 440L857 434M761 190L757 188M772 484L775 486M783 507L785 513M762 580L755 576M774 338L774 332M997 355L997 359M835 338L830 337M895 258L893 261M958 297L954 296M885 258L881 257M782 345L778 346M771 253L774 254M829 435L828 430M859 248L863 251M754 580L752 575M984 285L974 275M884 501L879 498M875 265L871 267M789 180L791 182M756 221L760 230M810 190L806 190M961 300L962 296M883 279L876 272M763 175L765 177M890 524L884 528M931 294L934 297M939 265L941 270M969 307L972 311M831 507L836 509M917 242L914 244M854 387L853 390M632 352L635 354M795 489L795 493M799 340L799 345M825 489L822 496M951 270L951 265M922 261L920 265M864 400L862 406M897 568L897 565M884 272L884 267M876 539L884 547M1001 350L1002 353M853 205L853 209M784 549L780 547M917 547L920 544M804 498L809 495M824 184L819 184M768 201L769 198M803 570L804 567M845 440L839 440M761 190L759 193M893 211L897 215M787 349L786 354M782 572L785 575M776 560L772 562M885 238L885 243M880 478L878 483M777 529L779 524M809 245L810 252M728 313L719 318M917 479L904 482M813 355L811 358M837 513L831 512M798 496L797 500M775 174L777 177M797 557L798 562M858 212L856 209M793 491L790 495M908 240L904 240M770 568L774 567M846 215L838 217M907 475L897 475M838 547L835 542M981 327L985 327M833 432L835 428M911 273L908 274M639 378L633 382M779 198L777 196M768 235L770 231M966 287L966 284M782 187L787 187M623 393L619 390M876 504L868 504M944 269L945 272M767 529L769 524M914 515L913 511M848 359L845 355M635 354L635 360M641 344L645 349M796 514L793 513M914 249L914 244M796 518L792 522M846 350L847 346M918 273L915 274M627 372L629 370M839 474L835 474M939 265L942 263M611 372L610 375M912 265L916 266M896 224L893 224M862 391L858 389M768 201L766 203M773 190L770 188M866 361L863 363M801 510L798 507M616 360L618 363M862 220L858 221M829 361L829 356M860 530L866 526M884 224L884 220M869 373L872 370M976 310L980 311M646 362L643 368M812 350L818 347M907 260L910 259M784 222L781 217M878 204L883 202M781 167L792 167M786 561L789 559M852 552L851 547M773 203L769 203M878 255L877 247M888 264L889 267M789 485L793 482M915 560L913 558M799 185L796 182M907 516L910 513M847 521L844 517M847 548L841 546M962 337L962 342M818 509L816 512M916 564L911 564M624 371L629 370M846 435L845 440M771 324L767 317M800 355L803 358M820 559L817 559M863 203L859 200M762 202L766 197M810 567L809 564M924 569L923 565M865 347L862 350M802 517L801 510M1015 363L1012 367M848 359L848 354M881 495L883 489M865 354L862 355M1000 360L999 365M864 268L859 263M640 371L636 368M778 211L780 207M755 570L758 571M839 347L834 346M871 199L877 195M851 431L849 427M617 378L615 377M965 351L968 346M934 270L939 274M933 527L926 521M851 529L846 528M1005 366L1006 363M670 328L666 334M854 537L853 542M887 495L885 492M787 509L785 513M768 191L771 193M813 355L808 356M912 242L908 240M903 527L908 525M828 496L831 489M935 247L936 242M830 523L824 519M813 184L809 186M843 493L845 496M855 285L859 290M793 232L802 228M760 256L764 263M924 250L924 244M837 506L840 510M777 490L779 494M944 248L947 254M666 334L662 340M783 500L778 498M782 225L784 222M896 212L897 215M858 196L862 198M787 553L789 551M867 384L867 380M881 198L878 200M889 201L883 202M781 167L786 172M894 516L891 513M876 222L882 218M773 226L775 221M939 265L937 267M1005 377L1007 374M768 516L770 520M923 230L922 234M768 483L767 490M630 376L635 375M851 361L855 363M876 228L870 227M902 558L901 560M938 257L943 257M602 373L608 371M792 339L787 341M821 525L817 524M982 338L986 334M802 228L804 234M627 359L625 362M624 365L618 363M800 553L803 558M1000 360L1001 363M782 345L781 350M879 411L876 415M846 532L843 530M944 295L942 293M874 388L874 392M1011 350L1011 353M840 371L844 370M984 312L980 316M806 505L806 501M787 349L790 347M834 447L830 443M928 285L929 289M844 517L839 518M794 216L797 213M985 314L980 316M756 200L756 192M900 534L896 537M859 236L863 236M958 363L962 360M817 518L813 522M955 268L951 270M914 252L914 249M907 511L904 507M780 207L775 206M618 381L620 383M708 304L710 315M882 362L883 374M619 367L622 366M1006 363L1010 364M856 404L859 405M925 547L926 551M845 207L842 212M785 575L785 571M866 526L872 522M906 487L910 490M860 408L856 408M959 273L963 275M926 521L919 521M914 545L915 550M948 280L950 276M945 279L940 278M916 544L914 545M995 372L1001 373M820 203L820 195M728 313L725 304M700 287L691 296M939 261L936 263M787 181L786 178M889 245L885 243M855 494L859 497M618 363L622 366M632 358L630 364M776 239L781 241M839 518L837 521M777 301L772 296M885 216L889 219M872 383L874 377M764 569L762 572M790 199L790 203M777 293L779 283M860 408L862 406M962 337L968 342M764 574L762 572M861 341L864 342M874 258L874 253M612 377L610 375M816 218L811 216M914 249L917 248M833 548L829 549M880 379L876 383M921 509L919 516M901 251L899 246M839 347L834 351M846 457L849 456M794 179L791 182M797 531L793 530M820 203L816 202M887 495L883 497M952 307L951 310M878 255L874 253M834 332L830 337M783 563L781 566M904 551L902 554M791 480L793 476M890 224L888 222M824 338L821 343M867 553L861 553M643 359L646 362M776 522L774 519M956 282L951 282M868 289L871 296M887 514L887 517M870 345L874 348M697 301L700 287M778 517L780 518M960 267L955 271M786 496L786 502M771 571L769 573M829 342L826 346M860 347L862 350M783 206L784 212M881 242L885 238M775 187L775 192M854 355L853 360M796 194L797 190M784 557L782 552M610 379L611 384M882 532L885 534M762 556L750 550M776 239L773 242M784 325L780 330M956 285L959 283M897 239L899 236M793 491L795 489M773 242L768 244M808 341L811 344M704 275L701 264M725 283L717 283M852 502L855 499M942 282L940 278M775 192L771 193M611 390L607 388M846 510L841 508M623 382L628 380M812 555L808 554M835 542L838 542M969 332L976 329M771 324L767 331M988 311L985 314M760 174L762 177M783 174L785 176M971 286L970 283M829 471L835 474M852 533L851 529M785 310L778 312M1007 357L1012 356M602 373L608 362M971 317L969 322M785 176L786 172M845 507L846 503M838 459L842 456M944 276L950 276M832 556L824 556M922 261L925 259M783 480L785 475M909 562L909 558M1003 357L1000 356M917 558L915 556M775 327L774 332M888 214L889 219M832 534L836 534M789 357L791 351M813 498L809 495M634 362L630 364M789 492L786 496M772 265L764 263M897 497L898 493M884 224L879 225M867 336L865 339M904 273L904 277M770 568L771 565M856 472L852 467M776 495L772 496M692 324L698 318M926 280L929 279M785 567L781 566M774 489L775 486M852 533L849 536M641 344L647 345M848 373L849 369M1001 350L1003 350M783 206L786 205M812 555L810 557M913 288L921 288M669 295L677 305M937 254L940 249M865 357L866 361M900 503L896 504M783 543L787 541M774 525L776 522M775 192L777 196M887 538L885 534M922 248L924 244M934 280L931 283M794 189L797 187M863 286L859 290M908 264L907 260M918 552L921 548M956 357L956 352M856 400L852 399M878 236L875 241M917 242L921 244M919 567L923 565M914 515L914 520M777 507L780 509M781 559L784 557M769 573L769 576M774 338L767 331M832 538L832 534M780 564L776 563M846 215L848 210M924 536L921 531M818 239L815 235M761 206L762 210M669 295L679 292M849 191L849 186M856 209L859 206M792 522L788 519M859 397L858 393M782 523L784 519M731 268L726 275M794 226L802 228M925 254L920 254M835 528L838 524M841 433L838 433M804 535L807 534M885 492L890 490M772 528L771 532M790 203L792 201M618 374L615 377M879 225L876 228M902 243L898 243M855 511L859 508M792 527L795 523M871 408L868 405M856 400L852 402M856 472L860 465M780 342L787 341M905 244L904 240M818 211L823 208M618 381L614 379M634 362L637 361M775 174L772 174M897 264L900 264M833 478L831 481M812 533L810 536M797 197L795 201M856 242L861 242M790 215L794 211M785 219L781 217M911 572L911 569M614 371L615 374M767 569L764 569M924 291L931 294M850 196L854 194M856 359L853 360M899 488L902 488M771 253L767 253M774 525L777 529M753 559L753 566M921 509L916 508M865 274L860 275M1009 377L1007 374M928 235L936 238M852 502L852 499M822 547L823 538M607 384L604 389M867 200L862 198M804 199L807 197M768 258L767 253M634 372L635 375M994 354L994 351M984 308L984 305M858 356L854 355M803 548L804 553M770 513L770 506M719 318L716 308M772 354L775 349M831 422L831 426M968 318L963 318M776 560L781 559M883 386L877 387M894 218L890 216M645 349L652 348M840 371L845 377M812 520L808 522M790 542L791 545M921 269L919 270M882 532L876 539M616 384L619 386M792 527L787 527M787 537L787 541M861 280L869 278M912 270L915 271M931 287L931 283M976 307L980 311M1023 372L1020 374M925 234L922 234M887 495L890 490M1004 354L1007 357M862 416L859 412M809 364L817 358M836 454L838 459M806 493L806 490M846 485L841 484M854 369L860 369M813 538L810 536M910 550L907 550M849 415L856 418M787 553L790 555M777 243L774 246M788 523L787 527M763 565L768 565M632 369L630 364M719 270L726 275M756 179L757 182M992 327L998 325M856 484L861 480M846 435L847 432M829 477L827 484M881 209L883 214M876 397L871 397M769 524L774 525M863 257L863 251M834 447L839 444M980 343L978 335M869 533L862 535M874 392L876 397M797 568L795 564M772 354L770 350M860 359L858 356M907 502L904 507M841 208L837 207M811 548L813 544M801 489L797 486M904 252L909 250M850 561L846 553M963 288L960 292M772 347L770 350M970 301L967 301M892 503L896 501M874 411L870 411M862 411L864 408M982 338L987 340M939 274L937 277M854 440L848 443M889 238L885 238M894 513L895 509M906 487L902 488M952 273L951 270M902 541L904 538M857 457L855 463M986 351L988 353M887 226L888 222M787 569L788 564M806 214L809 219M807 544L808 540M1017 369L1014 367M905 257L902 259M773 190L775 192M825 489L827 484M844 445L844 448M910 550L910 553M833 495L831 489M914 222L910 224M779 253L782 252M933 527L930 515M782 247L780 250M887 538L876 539M849 438L848 443M1014 370L1014 367M813 173L821 178M907 550L909 548M903 522L908 525M875 337L871 337M845 367L840 365M796 538L799 540M622 376L620 378M843 454L849 450M988 320L993 318M777 536L783 538M644 355L639 355M771 248L767 253M783 177L786 178M873 422L871 431M859 263L857 255M909 250L908 255M896 272L895 279M773 516L774 519M786 214L788 210M803 495L800 499M872 230L866 232M648 330L650 323M791 208L793 203M804 193L800 194M780 235L783 232M1001 312L1002 322M812 177L807 177M939 265L943 266M872 230L870 227M612 377L614 379M882 362L877 360M938 257L941 254M907 236L904 240M880 342L877 340M815 197L816 202M863 377L864 383M831 512L832 515M866 361L865 365M867 342L864 342M895 246L896 249M809 219L814 221M766 240L768 238M991 316L993 318M793 501L796 503M853 411L852 407M808 548L803 545M785 176L788 175M944 269L943 266M855 533L858 537M772 496L776 500M791 178L794 179M762 170L765 172M826 213L823 208M869 422L862 426M767 529L771 532M901 495L898 493M926 566L923 565M855 285L851 278M889 483L894 485M899 556L896 558M624 388L619 390M837 506L841 505M603 382L602 377M803 495L798 496M762 185L766 185M856 404L852 402M781 202L778 201M843 359L845 355M846 553L841 554M907 215L902 216M784 325L784 318M799 472L793 476M994 307L994 313M928 562L923 565M817 559L817 556M753 211L758 216M832 556L835 553M798 551L795 554M767 222L764 223M823 538L817 542M854 194L853 190M947 254L944 252M805 510L807 516M883 206L887 207M866 398L865 394M848 210L853 214M843 383L845 377M826 426L828 430M897 252L899 257M928 267L926 263M868 260L868 255M918 260L917 263M916 544L920 544M847 338L853 337M889 271L891 275M863 257L868 260M776 200L778 201M807 529L809 526M842 520L837 521M894 255L891 259M803 495L809 495M783 206L780 207M858 196L852 199M884 272L883 279M887 514L891 513M873 236L871 241M977 293L972 289M884 520L887 517M834 351L834 346M907 215L910 220M924 244L923 241M786 205L781 202M862 213L867 217M799 520L795 523M902 498L903 502M883 279L891 275M918 573L924 569M862 406L859 405M976 288L977 293M903 522L903 527M757 564L753 566M808 548L807 544M919 560L920 564M944 276L939 274M910 220L916 219M817 187L819 184M1005 339L998 340M956 285L951 282M863 236L866 232M958 313L960 316M871 350L874 351M794 211L798 206M773 306L767 305M960 276L963 275M795 564L798 562M771 312L773 306M765 218L760 221M792 167L796 170M610 379L612 377M853 508L849 505M899 556L900 553M859 362L863 360M843 383L849 386M964 348L962 346M848 366L849 369M941 254L940 249M769 241L766 240M711 267L712 276M859 376L859 381M834 435L837 437M984 330L986 334M963 311L963 314M778 544L783 543M964 293L962 296M878 346L880 342M921 490L917 479M959 345L962 346M923 283L924 278M776 218L778 221M912 270L916 266M786 559L781 559M904 252L901 251M930 260L926 263M874 253L871 246M792 509L790 506M872 287L868 289M876 222L876 228M920 265L923 264M913 500L908 496M798 507L799 503M960 355L957 360M918 260L913 261M835 483L831 486M778 180L780 184M901 509L903 511M868 283L869 278M799 361L800 355M634 367L636 368M785 219L783 216M817 498L813 498M1004 354L1007 352M809 245L813 243M832 498L837 502M899 541L896 544M780 547L774 548M912 527L909 529M853 229L851 223M776 318L778 323M867 239L861 242M841 429L838 428M804 524L800 525M872 223L876 228M793 487L797 486M969 327L969 322M682 284L679 292M994 358L996 362M1014 354L1014 358M780 342L778 346M941 270L945 272M958 297L961 300M803 479L807 481M801 202L804 203M874 258L879 261M834 195L833 200M951 297L956 301M759 568L753 566M905 244L902 243M796 526L797 531M769 228L769 224M942 297L938 294M877 283L875 277M964 293L963 288M865 354L863 352M835 553L828 554M804 208L806 211M1001 343L1005 344M866 398L871 401M894 568L897 568M845 363L840 365M923 283L918 286M1000 356L997 355M892 532L889 535M839 444L835 444M863 377L866 373M851 526L847 525M851 547L847 548M811 491L818 491M893 265L893 261M781 241L777 243M828 182L821 178M906 543L900 544M814 247L813 243M768 206L770 208M798 180L796 182M633 377L628 380M768 195L766 197M763 195L759 193M834 525L835 528M873 422L872 418M617 365L613 367M791 182L791 184M907 225L902 229M783 238L781 241M902 259L900 255M948 263L945 260M784 212L788 210M781 497L779 494M907 550L906 546M841 513L846 510M608 371L611 372M1014 358L1012 356M863 230L870 227M872 230L873 236M679 292L691 288M913 214L907 215M830 543L835 542M904 236L906 230M920 557L915 556M852 402L852 407M611 356L616 360M874 388L876 383M855 202L859 206M1005 344L1004 347M947 254L954 254M849 501L846 503M858 384L854 387M944 276L940 278M783 179L780 182M764 182L760 180M907 511L904 514M920 526L926 530M900 564L898 560M775 215L772 218M900 240L898 243M959 289L957 292M795 206L798 206M849 351L846 352M948 263L948 268M984 308L979 305M839 357L842 353M902 498L908 496M887 538L889 535M960 352L956 352M894 516L890 517M791 519L793 516M806 565L806 569M992 327L989 326M911 541L906 543M932 275L930 272M813 194L816 193M969 332L978 335M755 171L756 179M841 559L832 556M955 349L959 345M916 525L911 524M806 490L808 487M760 521L769 524M805 510L806 505M796 526L795 523M942 282L940 285M845 472L843 475M918 552L922 553M858 349L858 345M876 365L882 362M939 274L941 270M810 228L807 225M863 368L861 365M837 480L839 474M794 540L790 539M930 515L921 509M781 217L778 221M971 280L970 283M859 515L856 517M853 219L853 214M707 284L712 276M1003 350L1000 346M803 495L802 492M859 402L856 400M946 309L952 307M915 274L915 271M815 568L819 565M865 365L863 363M783 538L783 543M821 360L823 356M904 565L909 567M853 448L857 457M783 185L787 187M795 201L792 201M868 289L874 292M913 552L910 550M789 189L793 192M790 199L787 197M919 251L920 254M899 257L902 259M787 341L785 344M857 491L859 497M790 542L790 539M599 384L602 385M822 547L817 542M790 536L787 534M771 214L772 218M913 566L911 564M797 547L799 545M868 192L877 195M984 308L984 312M811 491L809 495M954 303L952 307M814 208L818 211M778 544L780 547M843 530L840 533M1001 343L1005 339M797 568L795 568M625 377L628 380M907 492L902 488M911 533L907 535M992 339L992 332M994 354L988 353M853 508L852 513M608 368L610 366M868 405L866 411M756 179L756 192M849 202L845 207M900 528L899 525M780 235L779 229M864 268L868 264M817 502L814 506M915 236L922 234M939 274L945 272M987 340L984 343M905 530L903 527M950 344L950 355M862 391L858 393M860 408L859 412M820 559L819 565M829 549L824 551M989 331L984 330M914 252L917 248M799 514L801 510M1008 361L1004 362M782 359L778 358M810 545L808 548M775 478L785 475M845 507L841 508M782 527L777 529M765 218L770 217M799 361L804 361M818 343L821 343M903 269L904 264M772 562L767 561M781 167L781 173M881 198L877 195M770 580L769 576M772 354L775 357M878 255L883 250M832 467L830 463M865 354L868 355M918 260L920 265M841 477L837 480M814 516L808 519M999 365L998 368M981 348L984 343M777 227L782 225M1007 357L1007 352M851 547L849 544M940 249L936 250M862 391L865 394M829 199L820 195M892 558L894 564M856 517L853 518M918 552L915 550M799 545L803 545M853 337L858 336M876 496L876 504M768 186L770 188M988 320L991 316M813 538L808 540M880 267L884 272M783 174L786 172M836 534L836 540M836 454L842 456M864 383L867 384M859 508L856 505M838 217L842 212M807 529L804 524M835 483L831 481M816 180L813 184M854 194L852 199M774 489L772 484M839 498L837 502M795 543L794 547M776 495L774 489M910 247L909 250M841 524L838 524M864 342L865 339M874 351L874 348M962 281L957 279M810 552L808 554M916 532L919 535M818 509L822 514M814 558L817 556M636 368L638 373M861 280L856 281M919 240L923 241M837 516L833 521M762 177L760 180M791 178L788 175M898 560L899 556M764 311L767 317M776 495L777 490M627 359L632 358M851 526L851 521M627 362L630 364M797 500L796 503M871 408L873 404M919 251L924 250M863 189L868 192M862 355L859 354M771 312L767 305M839 529L835 528M781 504L783 500M893 498L896 501M817 358L823 356M800 531L799 535M782 515L778 517M871 274L868 271M795 197L793 192M934 280L937 284M783 563L785 567M859 362L861 365M677 322L687 318M1018 360L1020 363M871 199L867 196M787 509L792 509M892 532L893 529M981 295L979 298M837 513L840 510M780 177L781 173M994 354L998 351M899 541L900 538M851 485L849 492M834 447L828 448M784 486L781 485M817 354L823 356M976 310L976 307M865 519L859 515M913 511L910 513M854 393L853 390M761 512L766 511M937 287L940 285M870 378L874 377M789 502L786 502M1023 364L1020 363M796 538L799 535M807 544L803 545M810 567L811 564M1017 365L1014 367M808 181L809 186M825 342L821 343M837 506L837 502M770 183L768 183M974 275L971 280M904 578L907 573M885 232L883 228M847 476L848 471M1014 370L1009 369M922 226L917 225M849 492L854 490M997 355L1002 353M811 548L813 550M939 274L937 267M992 339L991 342M871 489L878 483M789 492L793 491M960 276L954 277M919 230L922 234M994 351L988 353M760 230L761 225M755 171L760 174M768 244L774 246M860 530L860 525M901 212L902 216M872 219L870 213M926 242L931 241M897 252L900 255M643 359L640 358M859 402L861 399M794 244L790 248M804 535L799 535M977 318L980 316M820 203L830 207M872 418L876 415M790 555L792 560M834 460L831 457M810 212L814 211M768 186L768 191M623 382L623 384M959 341L954 343M917 245L914 244M774 503L770 506M764 227L769 224M973 340L978 335M778 568L781 566M782 196L785 193M911 280L906 281M607 377L602 377M984 308L987 307M871 356L868 355M645 349L650 353M858 356L856 359M902 558L904 561M795 523L792 522M867 244L863 251M915 283L917 279M861 480L854 478M875 204L878 200M904 273L901 274M892 558L896 558M913 279L915 274M784 286L781 297M942 293L943 290M840 425L844 426M878 255L884 254M832 467L834 465M871 431L861 432M896 272L893 269M883 214L878 211M791 195L793 192M834 447L835 444M769 228L773 226M834 211L835 220M909 250L905 248M1017 373L1016 376M960 352L964 348M638 350L639 355M813 550L814 555M797 175L796 170M901 512L898 511M795 357L799 361M824 338L817 336M780 509L782 515M938 257L934 259M849 191L853 190M969 332L962 337M907 502L903 502M772 500L770 506M771 324L775 327M907 271L903 269M889 234L891 230M794 211L788 210M772 347L771 342M1017 369L1020 374M641 344L636 344M893 489L890 490M804 538L807 534M812 533L816 536M790 199L792 201M952 316L954 312M986 303L982 300M901 274L904 277M792 548L793 553M849 501L852 499M853 448L854 440M900 207L894 201M776 209L777 213M632 369L628 366M952 316L955 317M852 502L856 505M787 234L783 232M813 550L816 551M787 197L787 194M774 254L776 250M908 553L907 550M790 220L785 219M775 486L777 490M774 525L779 524M897 475L899 482M954 303L956 301M774 171L775 174M899 488L898 493M855 285L863 286M859 236L857 232M811 548L810 545M871 386L867 384M847 521L851 521M893 526L891 521M853 348L850 346M994 358L990 357M852 351L850 346M864 209L870 213M835 338L834 342M928 300L940 301M826 524L821 525M917 245L922 248M890 517L891 521M777 536L773 537M768 258L764 263M994 351L998 351M818 211L814 211M803 479L803 484M798 507L795 509M925 287L924 291M748 566L753 566M829 531L828 538M972 308L976 307M907 492L904 494M786 559L786 561M992 362L995 372M822 547L816 548M930 247L928 244M818 347L821 343M982 338L984 343M853 542L851 539M829 471L832 467M798 490L802 492M975 315L972 311M789 497L793 501M1009 369L1012 367M762 479L770 479M848 392L852 395M813 538L816 536M839 529L841 524M914 515L911 518M875 354L877 349M1003 327L998 325M795 489L797 486M958 313L954 312M871 386L874 388M781 202L780 207M837 207L833 200M849 479L846 479M775 179L772 181M946 303L952 307M965 270L966 276M797 531L799 535M785 365L776 362M873 422L869 426M958 313L955 317M862 220L859 217M814 208L816 202M884 528L890 529M779 194L782 196M966 309L970 313M780 184L778 187M834 435L838 433M995 372L998 368M852 382L848 381M881 393L883 386M813 494L813 498M791 208L795 206M941 254L937 254M951 287L949 292M787 537L787 534M881 233L877 231M767 497L767 490M793 173L789 170M903 549L906 546M748 577L754 580M967 296L971 297M845 507L846 510M884 224L881 223M942 297L940 301M631 340L637 335M1023 382L1023 372M905 530L907 535M766 506L761 512M967 280L970 283M767 270L772 265M782 569L781 566M855 380L852 378M831 422L843 420M766 506L764 501M817 542L813 544M845 440L844 445M861 280L860 275M646 362L648 359M862 511L859 508M867 336L863 336M821 178L819 184M650 353L652 348M799 221L804 224M795 352L800 355M767 529L758 530M772 296L770 287M898 548L898 551M979 305L980 311M900 222L903 223M689 281L691 288M800 553L799 557M833 432L829 435M778 568L777 566M899 499L900 503M921 548L926 551M864 383L859 381M866 415L868 418M915 283L921 281M858 191L853 190M792 548L789 551M794 558L792 560M894 492L890 490M802 507L798 507M774 567L777 566M774 489L772 491M972 308L970 304M864 268L865 274M904 565L906 561M846 543L848 538M934 254L932 257M789 502L790 506M866 415L866 411M892 537L892 532M920 526L919 521M899 257L895 258M1005 377L1001 373M719 270L731 268M806 493L811 491M855 202L858 196M849 415L849 423M795 568L798 572M836 498L837 502M627 376L628 380M941 254L943 257M907 502L908 496M817 518L812 520M783 174L780 177M834 435L833 440M922 226L919 230M934 270L932 275M959 289L962 285M780 509L777 513M965 270L974 275M888 250L887 256M858 389L864 387M846 543L849 544M853 348L852 343M900 564L901 560M788 224L784 222M913 261L917 256M907 260L908 255M845 341L839 341M941 270L943 266M903 269L899 267M623 369L629 370M997 355L994 354M848 381L849 386M808 181L813 184M724 262L716 259M758 216L761 213M833 453L836 450M954 296L949 292M1006 363L1001 363M817 518L817 524M1000 360L996 362M841 542L841 546M692 324L697 332M781 297L777 293M818 206L823 208M842 520L839 518M725 291L732 287M976 303L972 308M826 426L831 422M843 383L848 381M966 276L967 280M754 580L755 576M958 313L955 308M902 498L899 499M789 502L793 505M851 521L855 525M851 485L856 484M841 502L839 498M885 232L887 226M988 311L991 312M994 358L997 355M839 185L831 185M885 216L884 220M860 408L859 405M818 351L823 349M1005 366L1008 367M833 453L836 454M899 541L896 537M787 531L787 534M887 514L890 517M970 301L970 304M944 252L940 249M859 248L857 255M848 538L844 536M812 533L813 526M888 264L885 258M867 336L871 341M804 193L802 191M808 200L804 199M989 331L989 336M785 243L782 247M621 380L623 382M947 314L952 316M822 505L822 496M875 374L874 377M800 553L803 548M764 212L766 216M833 440L839 440M780 250L779 245M984 312L980 311M926 242L924 244M908 264L903 269M878 236L881 239M915 283L911 280M907 511L910 513M775 179L775 174M795 543L799 540M1019 355L1020 363M878 288L871 296M613 382L614 379M956 301L961 300M621 358L627 359M837 192L843 197M909 529L908 525M845 460L846 457M849 186L845 188M871 386L872 383M615 377L615 374M901 560L898 560M883 386L876 383M900 528L897 534M843 530L846 528M778 498L776 500M996 366L998 368M666 334L663 346M839 498L841 496M792 167L793 173M771 234L776 230M914 252L914 256M895 279L899 279M814 341L817 336M782 336L789 331M917 225L914 229M914 232L914 229M830 351L834 351M788 523L785 526M779 253L785 255M891 521L887 517M1009 348L1011 353M889 234L885 238M897 252L894 255M866 398L866 403M611 398L611 390M940 301L934 297M855 343L858 345M858 501L863 497M843 470L840 467M780 518L779 524M892 220L897 220M777 576L773 573M827 484L831 489M776 239L773 239M626 350L628 353M900 544L898 548M861 432L857 434M845 355L846 352M756 179L760 180M849 501L847 498M915 556L910 553M900 538L904 538M883 206L883 202M852 552L846 553M802 507L806 505M835 188L828 189M799 340L803 342M834 211L838 217M766 191L763 187M832 534L828 538M806 490L811 491M786 214L784 212M905 569L909 567M962 337L959 341M853 372L858 372M862 193L862 198M878 346L883 345M843 530L843 527M880 335L870 333M891 206L888 210M946 288L951 287M912 242L915 239M863 336L865 339M894 492L893 498M871 386L866 391M919 498L913 500M855 376L852 378M815 568L810 567M790 542L794 540M618 370L619 367M919 277L915 274M616 360L612 360M968 342L965 345M985 314L983 319M979 305L982 303M913 261L912 265M1001 350L998 351M768 174L772 177M761 545L772 541M614 387L616 389M815 481L818 491M859 217L858 221M831 507L834 504M879 411L875 407M966 287L972 289M916 539L920 544M804 224L807 225M786 559L787 553M774 510L773 516M924 244L928 244M875 514L880 506M875 529L882 532M640 366L641 362M864 475L861 480M611 356L617 348M900 222L899 217M900 544L896 544M880 267L884 267M922 272L927 271M772 211L775 206M859 397L861 399M837 506L834 504M688 332L687 318M884 224L883 228M896 574L904 578M779 194L778 190M913 261L910 259M816 512L814 506M767 253L767 248M899 257L897 261M940 301L941 307M985 322L978 321M804 563L804 567M879 488L883 489M802 502L799 503M869 393L871 391M682 284L689 281M852 382L854 387M917 245L921 244M697 301L707 296M811 548L816 548M780 354L778 358M874 392L871 397M784 348L785 344M643 331L641 338M833 440L829 435M800 565L798 562M767 529L772 528M796 514L799 514M889 483L886 488M641 344L638 350M907 260L904 264M1001 350L1000 346M1000 356L1002 353M770 506L766 511M786 214L783 216M778 174L775 174M908 255L910 259M781 350L780 354M1009 345L1009 348M880 335L880 342M874 392L869 393M973 327L969 322M813 494L811 491M774 503L776 500M939 245L940 249M851 547L854 546M846 388L849 386M919 240L921 244M867 200L863 203M834 342L839 341M766 361L769 357M1003 350L1007 352M847 498L846 503M945 285L940 285M867 336L870 333M1018 360L1014 358M793 505L790 506M856 408L859 412M872 223L872 219M793 203L790 203M920 257L917 256M688 332L697 332M875 204L874 201M831 518L833 521M905 559L907 556M834 525L837 521M808 571L803 570M786 205L790 203M884 254L888 250M950 344L955 349M940 289L943 290M846 532L849 531M881 247L877 247M849 202L852 199M834 460L834 465M785 176L783 177M808 499L806 501M768 180L768 183M946 288L943 290M866 398L864 400M803 573L798 572M810 511L808 508M768 174L768 178M938 294L940 289M617 365L618 363M986 351L986 358M881 230L881 233M937 287L931 287M772 500L776 500M789 189L793 186M1007 369L1010 372M905 244L908 240M955 268L960 267M885 258L887 256M902 517L905 518M806 214L805 220M875 529L884 528M778 312L771 312M828 189L831 185M782 187L778 187M904 534L900 534M822 335L824 338M776 481L770 479M904 494L901 495M894 242L889 245M622 376L621 380M889 241L894 242M1001 343L998 340M903 549L902 554M632 333L637 335M883 374L878 376M868 351L868 347M768 258L760 256M810 190L809 186M841 336L845 341M960 316L958 320M881 495L885 492M863 286L868 289M867 244L859 248M909 562L908 563M682 284L672 285M930 260L936 263M860 347L858 345M850 495L852 499M777 301L770 301M857 255L853 249M840 190L844 193M951 297L949 292M900 548L903 546M892 558L896 562M1000 336L998 340M908 553L907 556M639 378L633 386M753 211L758 209M848 398L852 399M820 230L815 235M764 276L766 282M790 203L786 200M861 341L863 336M924 536L919 539M802 502L806 501M876 228L877 231M644 355L640 358M802 179L806 184M846 435L849 438M944 295L949 292M776 230L779 229M875 374L869 373M794 244L791 239M760 230L760 237M849 450L849 456M878 236L881 233M772 278L766 282M846 435L842 437M988 320L992 323M793 186L789 185M902 554L899 556M887 226L883 228M889 499L883 497M841 502L841 505M867 196L862 193M829 471L829 477M850 561L857 556M772 557L774 548M1005 359L1004 362M795 197L796 194M795 352L798 351M802 246L809 245M858 227L863 230M873 364L874 367M848 398L852 402M785 219L784 222M843 346L847 346M782 527L779 524M900 207L896 212M988 345L991 342M962 304L964 300M1014 379L1016 376M800 565L804 567M787 569L789 573M950 259L954 264M845 207L843 202M846 479L847 483M633 386L628 383M842 549L846 553M805 510L808 508M899 488L894 485M847 448L844 448M793 203L795 201M840 425L843 420M772 557L778 551M1014 367L1012 367M843 470L845 472M913 214L916 219M950 344L954 343M830 351L826 346M831 457L836 454M781 200L778 201M815 481L811 485M756 221L753 211M812 350L808 356M802 517L799 520M877 360L878 354M914 249L910 247M787 349L784 348M768 191L770 188M875 514L882 511M780 182L780 184M812 202L811 207M623 393L624 388M969 307L970 304M786 172L789 170M1013 375L1010 372M925 287L923 283M810 545L808 540M793 232L786 227M899 499L903 502M902 243L902 248M856 404L856 400M628 380L633 382M788 296L785 303M1000 336L997 331M852 502L849 505M784 486L783 489M959 345L962 342M907 516L907 511M849 351L848 354M757 564L759 568M893 545L895 547M962 346L958 350M809 364L804 361M867 250L874 253M799 545L800 548M754 539L758 530M975 296L977 293M792 509L795 509M710 315L698 318M784 198L787 197M889 569L894 568M997 347L995 344M892 537L889 541M776 185L778 187M913 214L905 207M804 535L804 538M617 365L616 369M789 497L793 496M628 353L630 356M855 376L858 372M905 569L900 569M974 275L977 283M828 448L831 457M611 398L607 393M904 565L902 567M816 218L814 221M855 494L850 495M800 525L799 528M907 511L908 506M626 350L632 352M765 218L766 216M789 514L785 513M992 362L996 362M824 532L828 538M768 483L770 479M872 287L873 281M815 481L825 489M635 360L637 357M939 245L936 242M660 335L662 340M837 506L841 508M624 374L625 377M883 202L886 197M829 549L833 545M959 273L955 271M858 336L863 336M858 501L859 508M787 481L785 475M884 224L887 226M784 212L783 216M851 223L858 221M871 274L871 267M628 383L628 380M854 537L851 539M772 360L769 357M882 511L885 509M809 337L803 342M795 197L790 199M783 174L781 173M784 198L787 194M768 195L768 191M928 285L931 287M853 337L852 343M910 550L915 550M794 226L799 221M802 517L799 514M850 510L846 510M902 498L907 502M823 538L830 543M855 366L858 366M887 538L884 547M760 174L756 179M812 520L808 519M825 351L823 349M815 345L811 344M803 484L800 481M888 508L888 503M766 209L762 210M767 490L772 491M865 428L861 432M768 180L772 181M842 549L841 554M818 343L817 336M831 481L831 486M1017 369L1023 372M908 496L907 492M939 261L943 257M604 389L607 393M790 495L793 496M804 524L804 528M880 267L879 261M974 323L978 321M793 570L789 573M974 319L969 322M907 538L911 536M853 214L847 218M921 237L922 234M922 272L924 268M889 238L892 235M816 180L812 177M772 557L770 549M970 304L967 301M789 180L789 185M872 383L874 388M776 230L777 227M896 556L896 558M902 243L904 240M868 192L867 196M948 280L951 282M780 491L783 489M899 499L896 501M900 564L897 565M971 297L975 299M772 496L767 490M814 230L813 226M904 565L904 561M797 175L793 173M862 511L868 504M938 294L935 291M812 571L815 568M765 206L768 206M1003 357L1004 362M858 389L858 384M811 564L809 564M795 535L796 538M823 538L828 538M766 506L770 506M802 517L805 510M852 378L845 377M923 238L926 242M969 332L969 327M853 424L856 418M849 415L852 407M909 529L907 535M778 180L774 181M789 497L790 495M860 359L856 359M928 562L926 551M620 383L623 384M849 423L853 424M879 493L879 498M899 482L894 485M814 221L811 216M967 296L967 301M996 366L999 365M632 358L635 360M911 504L907 502M795 357L800 355M795 197L791 195M843 480L843 475M847 498L852 499M782 225L786 227M762 556L772 557M884 211L881 209M791 195L790 199M868 271L868 264M851 485L847 488M800 553L795 554M831 527L830 523M781 504L780 509M885 554L884 547M754 539L761 545M779 261L785 255M903 269L900 264M921 237L919 240M845 180L845 188M892 558L893 554M844 448L849 450M914 249L909 250M848 210L853 209M962 304L961 300M775 478L776 481M878 216L874 216M800 525L804 528M866 232L870 227M754 539L750 528M813 173L807 173M907 215L901 212M716 259L719 270M1019 355L1014 358M771 571L770 568M902 517L903 522M811 548L808 548M845 440L839 444M812 350L810 347M776 318L767 317M851 243L859 236M655 327L661 329M847 498L847 494M848 373L844 370M610 379L614 379M1010 360L1015 363M628 383L628 387M766 191L768 195M883 250L886 247M624 365L623 369M884 520L884 528M807 516L814 516M830 337L829 342M922 261L920 257M769 573L766 571M799 523L799 520M820 189L823 192M904 578L911 572M790 347L785 344M845 507L849 505M823 349L821 343M601 391L604 389M921 281L917 279M894 568L897 565M910 550L909 548M899 267L896 267M958 313L963 314M939 265L939 261M854 355L848 354M858 416L856 418M770 170L772 174M897 233L891 230M640 371L646 369M798 351L799 345M790 215L786 214M863 352L859 354M858 366L861 365M892 503L896 504M813 541L808 540M892 250L896 249M756 221L761 225M992 339L987 340M812 533L807 529M837 207L840 204M779 213L777 213M775 187L773 190M789 492L790 488M848 226L847 218M863 363L863 360M780 491L777 490M856 408L859 405M771 571L773 573M902 554L905 556M783 500L786 502M860 344L863 347M988 320L989 326M853 424L857 424M789 185L787 187M954 312L951 310M766 209L770 208M793 487L790 488M858 227L857 232M981 295L980 288M919 560L917 558M776 209L772 211M886 488L881 485M869 278L875 277M608 371L606 374M791 568L790 565M951 297L949 302M803 479L799 472M965 345L968 346M905 559L905 556M897 229L902 229M854 440L849 438M781 482L778 484M808 356L811 358M808 487L807 481M814 341L808 341M865 519L860 525M794 226L786 227M906 487L904 482M837 353L840 349M778 180L780 177M864 224L863 230M611 398L614 391M785 193L781 192M772 528L774 525M883 264L885 258M897 239L898 243M785 190L781 192M871 415L868 418M853 390L849 386M808 571L806 569M775 187L778 187M830 337L834 342M896 574L897 568M718 298L707 296M812 571L819 565M956 285L951 287M842 549L841 546M907 573L904 572M725 291L732 298M884 272L876 272M797 557L795 554M782 569L785 567M857 491L856 484M863 286L863 294M621 358L618 363M802 351L804 345M795 498L795 493M857 428L861 432M862 213L858 212M901 226L903 223M988 293L989 299M965 270L957 262M988 320L985 314M867 217L872 219M818 347L818 351M808 499L804 498M863 377L867 376M816 252L818 239M897 229L896 224M820 230L818 239M964 348L965 345M913 566L909 567M775 179L778 180M768 565L770 568M758 209L761 213M1000 318L1002 322M802 517L802 522M911 276L915 274M818 239L813 243M756 200L759 193M966 357L965 351M851 243L856 242M839 498L843 498M789 189L787 187M871 341L871 337M992 327L997 331M822 547L830 543M782 515L780 518M920 265L919 270M923 556L924 560M1020 374L1017 373M778 551L782 552M750 528L748 518M911 276L911 273M877 247L871 246M813 494L818 491M919 560L924 560M844 445L848 443M947 314L946 309M900 544L903 546M829 361L840 365M772 562L774 567M815 214L814 211M777 536L778 533M926 242L929 238M785 243L785 250M832 556L823 564M869 373L866 373M784 530L787 534M862 406L864 408M948 263L943 266M876 496L871 489M776 560L776 563M924 268L927 271M916 544L916 539M1017 369L1017 365M807 558L808 554M807 346L810 347M889 241L885 243M907 502L908 506M875 204L870 205M932 266L930 272M837 516L837 521M799 199L797 203M799 191L796 194M789 180L788 175M874 210L874 216M897 264L896 267M927 275L930 272M919 251L917 248M924 536L924 543M880 267L883 264M762 580L754 580M818 509L822 505M963 275L964 278M820 195L815 197M797 568L803 570M767 253L761 250M975 315L977 318M805 220L804 224M760 521L758 530M913 288L918 286M875 529L869 533M831 507L831 512M820 203L823 208M618 374L622 376M782 527L784 530M779 194L775 192M812 571L808 571M893 489L890 486M858 349L856 352M810 212L811 216M858 336L861 341M802 502L804 498M908 264L912 265M776 362L775 357M834 354L837 353M848 398L848 392M992 327L989 331M945 285L951 282M848 359L843 359M793 505L796 503M839 529L840 533M807 558L810 557M1004 370L1007 374M824 188L823 192M784 486L786 490M766 185L768 183M660 335L652 332M905 244L905 248M831 518L832 515M926 521L920 526M871 341L875 337M846 435L841 433M888 250L890 254M813 355L817 358M905 569L904 572M962 304L967 301M909 558L907 556M783 563L780 564M908 264L910 259M864 475L860 465M779 557L772 557M917 242L915 239M832 534L829 531M900 240L899 236M892 506L896 504M794 179L796 182M777 227L779 229M832 556L828 554M794 558L795 554M843 454L846 457M778 221L775 221M892 503L893 498M848 398L852 395M1017 369L1020 363M854 369L858 366M762 580L764 574M862 406L866 403M817 559L817 563M804 345L805 349M917 558L920 557M889 541L888 545M849 202L853 205M851 243L853 249M984 308L980 311M812 560L817 563M780 564L781 566M847 521L844 523M921 269L923 264M773 537L775 534M923 238L922 234M837 513L832 515M837 467L840 467M621 380L625 377M761 190L763 187M833 495L836 495M888 250L886 247M764 212L762 210M793 344L787 341M905 559L909 558M836 454L840 450M845 460L838 459M858 212L859 206M847 498L845 496M916 525L917 528M894 564L897 565M846 503L843 498M904 507L903 511M858 416L859 412M793 203L789 206M868 405L873 404M677 305L667 304M899 482L899 488M813 494L809 495M854 478L852 481M952 291L949 292M771 201L769 203M896 556L896 553M776 209L780 207M799 472L807 481M787 541L790 539M900 564L902 567M874 351L875 354M933 283L931 287M880 335L877 340M783 352L787 349M762 479L755 491M785 190L787 187M992 362L990 357M944 248L940 249M852 436L857 434M801 215L794 216M914 256L910 259M785 183L787 187M728 313L716 308M775 187L776 185M851 431L852 436M923 230L927 230M786 172L788 175M643 331L637 335M621 358L625 362M758 209L762 210M770 287L772 278M919 521L914 520M841 502L846 503M868 260L868 264M886 488L883 489M784 286L788 296M776 234L776 230M905 569L904 565M784 318L778 312M909 567L911 564M848 373L845 377M965 270L959 273M793 232L804 234M871 356L866 361M835 470L837 467M783 174L783 177M916 266L919 270M880 521L880 516M894 255L892 250M779 253L778 257M762 185L757 188M863 236L857 232M839 440L837 437M640 371L643 368M893 269L889 267M845 440L842 437M935 247L932 252M771 532L775 534M767 534L754 539M766 191L768 191M626 345L634 350M828 496L827 502M885 554L877 549M625 377L623 382M923 238L919 240M863 286L861 280M797 557L795 560M611 390L614 391M876 365L873 364M838 547L841 546M942 297L947 297M778 174L780 177M961 300L964 300M839 347L843 346M900 240L904 240M810 190L814 190M863 203L866 205M890 529L885 534M913 214L910 220M854 393L858 393M716 259L711 267M813 194L814 190M846 350L846 352M900 564L904 561M876 222L881 223M880 335L883 345M901 226L897 229M854 264L851 278M884 211L888 210M774 338L782 336M998 351L1002 353M848 514L850 510M876 222L874 216M599 384L602 377M817 542L816 548M769 210L770 208M851 485L846 485M791 178L794 176M992 323L992 327M787 208L789 206M799 523L802 522M907 492L901 492M985 346L984 343M813 184L811 180M845 207L850 207M948 263L951 265M907 271L912 270M786 546L791 545M859 362L863 363M772 496L767 497M611 356L618 356M878 236L873 236M696 310L687 318M877 247L875 241M877 549L884 547M875 374L878 376M796 526L799 528M815 568L814 565M771 248L767 248M1004 370L1005 366M801 215L800 211M893 261L897 261M862 395L864 397M880 379L883 386M833 521L837 521M863 363L861 365M806 490L802 492M631 340L626 345M860 420L856 418M768 180L765 177M843 359L840 365M867 342L868 347M612 377L615 374M851 459L852 455M863 377L859 381M881 223L884 220M783 206L787 208M613 367L611 372M836 534L840 533M789 497L786 496M781 350L784 348M918 273L915 271M789 357L782 359M732 287L726 275M796 514L793 516M816 548L813 544M645 349L644 355M888 508L885 509M767 331L774 332M816 548L816 551M893 265L889 267M802 351L807 352M795 498L793 496M639 378L633 377M831 518L837 516M960 355L956 352M853 337L858 340M967 301L964 300M794 189L797 190M914 520L911 518M916 219L914 222M776 362L766 361M626 345L626 350M856 472L855 463M810 190L812 187M807 561L811 564M915 274L917 279M910 220L914 222M802 351L800 355M883 202L878 200M802 246L794 244M916 219L917 225M763 565L757 564M802 228L806 228M902 558L899 556M968 342L968 346M856 517L855 511M954 264L951 265M758 571L759 568M795 543L791 545M793 192L789 192M889 201L887 207M902 554L900 553M808 356L804 361M853 214L859 217M896 272L901 274M977 318L983 319M774 171L781 173M891 206L896 207M837 513L837 516M778 540L772 541M759 193L757 188M833 432L828 430M811 235L815 235M1005 333L1003 327M882 362L878 354M994 307L991 312M764 494L760 486M899 541L900 544M834 532L836 534M981 348L985 346M1010 360L1012 356M927 275L927 271M875 265L879 261M890 550L884 547M905 257L908 255M823 538L816 536M789 485L787 481M872 287L877 283M829 199L833 200M915 236L915 239M951 365L954 362M853 448L847 448M646 362L641 362M718 298L714 290M771 248L774 246M849 479L854 478M774 489L769 486M772 562L771 565M803 484L807 481M854 264L857 269M700 287L689 281M841 336L853 337M871 241L871 246M954 303L949 302M884 506L888 503M948 273L945 272M833 495L828 496M771 342L775 345M785 365L782 359M904 252L902 248M620 383L623 382M804 553L808 554M907 475L904 482M841 429L838 433M641 362L637 361M771 214L770 217M837 192L837 198M843 464L849 463M698 318L687 318M765 177L768 178M897 497L896 501M858 501L855 499M877 349L882 351M925 287L929 289M762 556L753 559M764 574L760 574M997 347L994 351M952 291L954 288M768 174L763 175M795 197L792 201M845 513L841 513M785 243L787 237M911 504L911 508M789 502L785 505M848 373L852 378M790 174L789 170M772 177L775 174M871 350L868 347M840 516L841 513M618 370L620 369M897 534L896 537M860 485L871 489M778 540L783 543M962 296L960 292M873 422L879 411M814 565L811 564M849 501L849 505M915 236L910 234M624 374L622 372M909 548L915 550M902 498L904 494M975 315L974 319M785 255L782 252M796 518L791 519M886 488L883 481M840 190L837 192M832 538L836 540M833 548L833 545M1020 374L1023 378M840 371L840 365M930 227L928 235M619 367L616 369M881 393L877 387M772 211L777 213M996 316L1001 312M614 387L616 384M834 465L837 467M858 389L854 393M881 247L883 250M824 532L829 531M920 265L917 263M906 543L906 546M655 327L650 323M760 237L766 240M778 190L782 187M871 356L871 353M894 516L898 520M964 293L966 287M881 495L879 498M841 433L847 432M897 233L900 233M871 408L875 407M848 538L849 544M799 185L799 191M794 558L790 555M766 209L769 210M958 304L956 301M858 537L862 535M909 529L905 530M867 250L871 246M813 538L817 542M759 568L762 572M867 553L863 546M842 520L844 523M812 202L808 203M951 297L947 297M772 221L775 221M768 483L772 484M849 463L848 471M854 393L852 395M929 289L931 294M846 215L853 214M929 571L928 562M911 546L906 543M792 167L789 170M767 222L765 218M867 244L861 242M784 325L778 323M796 538L794 540M869 368L872 370M806 501L812 502M766 209L767 211M643 331L646 335M761 190L764 193M857 428L853 424M830 543L832 538M944 295L947 297M923 556L926 551M789 185L787 181M831 507L825 510M895 509L898 511M879 493L879 488M880 405L876 401M790 347L787 341M854 369L849 369M756 200L753 211M892 220L893 224M639 378L646 369M795 498L796 503M682 284L685 274M858 349L862 350M769 224L773 226M772 181L774 181M918 273L919 277M908 264L912 270M925 234L927 230M632 358L635 354M948 263L950 259M811 548L810 552M931 241L929 238M917 547L915 550M904 286L911 280M978 321L977 324M848 226L851 223M614 391L616 389M772 211L769 210M1007 369L1008 367M852 378L848 381M696 273L689 281M864 400L866 403M875 204L874 210M779 198L781 200M903 527L899 525M788 564L790 565M780 491L783 494M992 339L998 340M945 260L950 259M793 232L787 234M799 345L795 349M804 203L804 208M810 252L814 247M804 538L800 538M856 242L859 248M937 277L934 280M812 202L815 197M863 377L861 373M840 516L844 517M988 293L986 297M793 505L795 509M772 354L777 353M766 191L768 186M777 301L777 293M679 292L686 302M898 548L896 544M865 347L863 347M805 510L810 511M807 561L810 557M785 255L785 250M670 328L677 322M643 331L650 323M988 345L987 340M777 576L785 575M810 228L806 228M770 520L769 524M846 215L842 212M914 252L909 250M782 225L778 221M775 187L774 184M966 309L963 311M847 432L849 427M824 184L824 188M787 341L789 331M911 518L907 521M797 187L797 190M771 234L773 239M907 271L908 264M797 531L794 533M812 571L810 567M862 395L858 393M815 568L817 563M863 189L858 191M772 218L770 217M856 540L860 541M806 569L803 570M777 301L780 307M801 202L801 205M900 240L902 243M645 349L647 345M787 537L783 535M1023 372L1023 378M900 528L900 534M964 298L962 296M779 213L784 212M782 336L780 330M862 511L865 519M764 574L766 571M799 191L797 190M891 521L887 522M919 270L915 271M916 266L915 271M725 291L717 283M617 348L621 353M785 513L784 519M786 546L790 542M863 236L861 242M846 457L849 450M870 378L867 376M916 266L917 263M770 513L766 511M772 265L773 259M851 459L846 457M771 312L767 317M939 261L942 263M807 173L796 170M871 241L875 241M913 288L915 283M816 218L819 215M788 564L786 561M892 228L893 224M719 318L713 324M992 323L996 321M820 189L819 184M1009 369L1010 372M789 548L792 548M890 524L890 529M880 521L884 520M820 559L817 563M781 482L781 485M777 279L772 278M889 541L893 545M964 348L958 350M852 513L850 517M836 498L832 498M851 278L856 281M893 545L896 544M775 345L778 346M838 459L837 463M801 202L797 203M892 537L896 537M839 529L843 527M818 509L817 502M632 333L626 345M810 511L814 506M999 365L996 362M834 180L839 185M907 550L905 554M827 484L831 486M856 472L850 475M837 198L843 197M956 357L954 362M925 259L926 263M863 368L865 365M969 292L964 293M1020 374L1016 376M952 273L954 277M845 460L842 456M849 492L850 495M902 558L905 556M790 248L785 250M849 501L852 502M959 345L958 350M894 542L889 541M962 304L958 304M778 533L781 532M708 304L697 301M789 514L792 509M872 418L868 418M800 175L796 170M847 488L843 488M767 270L764 263M997 331L992 332M776 560L780 564M898 243L899 246M789 548L784 549M834 342L837 344M783 489L781 485M857 186L852 181M933 283L934 280M859 200L862 198M915 283L918 286M811 491L808 487M775 486L778 484M849 463L845 460M847 476L846 479M814 558L810 557M795 543L790 542M838 470L839 474M755 576L753 572M761 225L764 223M920 265L916 266M863 257L868 255M810 212L806 211M889 569L892 558M1000 356L1000 360M795 489L798 490M878 288L872 287M801 489L800 484M779 213L783 216M868 365L869 368M841 505L837 502M783 494L779 494M779 261L778 257M846 388L848 392M790 555L789 559M885 238L881 239M875 374L872 370M885 492L883 489M783 480L787 481M1004 354L1002 353M623 393L628 387M914 252L908 255M922 226L927 230M790 542L787 541M761 545L769 538M783 480L781 482M969 292L967 296M837 480L835 474M903 549L903 546M890 529L889 535M778 174L781 173M907 225L910 224M946 303L949 302M797 175L798 180M798 572L803 570M851 539L849 544M785 183L780 182M803 558L801 560M785 475L791 480M776 200L773 196M881 393L874 392M843 464L837 463M834 346L834 342M807 346L808 341M874 351L877 349M894 485L890 486M884 272L891 275M781 350L778 346M868 264L872 263M807 561L806 565M871 199L874 201M786 172L781 173M802 351L805 349M966 315L970 313M945 260L942 263M828 182L834 180M858 366L859 362M926 280L923 283M802 502L797 500M962 281L964 278M782 336L774 332M611 398L616 395M860 347L863 347M981 327L985 322M904 273L908 274M869 209L870 213M837 516L839 518M874 258L878 255M841 429L844 426M799 528L804 528M849 479L847 476M900 548L898 551M925 259L929 255M614 371L613 367M810 505L812 502M914 232L910 234M874 210L870 213M847 476L843 475M855 380L859 376M965 345L962 346M789 357L786 354M603 382L605 380M787 509L790 506M633 377L635 375M791 182L796 182M901 492L902 488M939 261L934 259M813 173L816 180M599 384L601 391M1008 361L1006 363M843 470L838 470M618 381L613 382M885 554L892 558M919 567L920 564M834 532L832 534M802 502L800 499M725 304L716 308M825 489L818 491M646 362L646 369M769 210L767 211M725 291L725 283M788 564L789 559M887 538L888 545M900 564L900 569M996 335L992 332M876 504L880 506M900 515L904 514M868 351L871 353M773 573L775 572M902 517L898 520M724 262L719 270M865 519L872 522M778 540L773 537M768 565L767 561M782 196L784 198M775 287L770 287M847 448L849 450M942 282L945 279M807 352L810 347M786 546L784 549M897 233L897 229M864 400L861 399M767 270L773 273M981 327L984 330M863 352L862 355M892 503L892 506M835 338L839 341M934 270L937 267M879 411L874 411M919 567L919 570M913 558L910 556M785 475L793 476M853 360L851 358M994 354L990 357M853 508L859 508M846 503L849 505M626 345L636 344M896 207L894 201M901 560L904 561M890 216L892 220M764 235L768 238M790 488L786 490M843 493L841 496M890 224L892 228M810 228L813 226M977 318L974 319M817 224L816 218M846 532L849 536M860 420L862 416M772 557L772 562M959 307L963 311M772 484L770 479M854 194L849 191M795 554L799 557M960 276L957 279M893 211L896 207M782 572L778 571M835 188L831 185M893 238L892 235M885 232L883 235M897 534L900 534M782 187L781 192M771 201L773 196M763 187L766 185M707 296L714 290M772 541L769 538M959 273L960 267M788 523L792 522M934 259L932 257M756 221L760 221M991 348L997 347M788 564L793 563M879 493L881 495M792 339L793 344M841 542L838 542M974 319L978 321M764 212L767 211M858 356L859 354M816 180L811 180M823 538L824 532M884 506L884 501M926 280L924 278M868 365L865 365M633 386L628 387M882 218L884 220M824 184L821 178M773 239L773 242M873 361L874 357M854 355L856 352M795 564L795 568M903 522L898 520M889 271L889 267M971 286L972 289M907 535L904 538M780 235L776 234M764 276L772 278M787 569L790 565M866 373L868 371M938 257L939 261M860 530L862 535M864 475L856 472M819 565L817 563M696 310L686 302M774 567L771 565M847 525L851 521M770 520L774 519M767 222L769 224M890 524L887 522M928 285L926 280M781 482L784 486M630 376L627 372M800 553L804 553M775 530L771 532M836 495L841 496M942 282L939 281M862 411L859 412M873 422L876 415M847 525L843 527M971 317L970 313M777 566L781 566M767 490L769 486M801 560L800 565M618 370L615 374M928 267L923 264M853 508L855 511M793 491L793 496M778 211L781 210M778 544L774 548M630 376L629 370M830 543L829 549M878 346L877 349M779 557L784 557M793 563L790 565M871 274L876 272M853 411L856 408M866 391L865 394M962 285L966 284M790 174L788 175M841 336L839 341M937 287L935 291M872 383L867 380M814 341L811 344M837 198L843 202M844 536L840 538M770 568L767 569M686 310L677 305M862 220L867 217M918 260L920 257M795 564L795 560M878 376L877 370M893 211L890 216M776 560L772 557M951 287L951 282M820 551L816 548M818 347L818 343M786 496L786 490M910 238L912 242M907 271L908 274M804 535L805 531M809 364L799 365M891 206L887 207M663 346L662 340M791 178L789 180M846 532L840 533M813 522L812 520M778 517L777 513M914 232L915 236M781 532L783 535M806 490L803 484M860 344L864 342M899 488L894 492M802 197L800 194M924 560L920 557M831 481L827 484M837 198L834 195M792 560L795 560M868 283L868 289M855 376L859 376M858 227L851 223M954 277L957 279M919 539L920 544M984 330L985 327M813 522L817 524M907 502L902 505M893 545L888 545M865 357L863 360M807 207L804 208M1018 379L1016 376M793 192L796 194M817 518L824 519M780 182L780 177M768 201L771 201M904 252L900 255M890 529L893 529M803 573L803 570M926 263L923 264M903 522L899 525M844 536L844 540M753 559L750 550M832 538L836 534M833 440L830 443M768 186L768 183M774 338L766 340M835 489L837 486M932 540L924 543M867 200L867 196M791 471L785 475M829 199L823 192M991 304L987 307M981 327L978 321M880 516L887 517M793 232L787 237M820 189L817 187M871 199L868 192M797 175L794 179M793 173L794 176M839 185L845 180M788 523L792 527M889 267L884 267M854 369L855 366M997 347L998 351M893 269L891 275M758 571L762 572M781 202L781 200M656 345L662 340M794 547L791 545M803 188L802 191M847 525L847 521M868 355L866 361M873 236L866 232M1009 345L1004 347M772 296L770 301M922 275L921 281M851 361L853 360M657 350L663 346M846 543L841 542M608 362L608 368M787 516L789 514M835 542L836 540M764 501L770 506M760 237L761 250M894 242L895 246M863 546L858 549M772 562L776 563M996 316L994 313M901 251L900 255M889 475L894 480M807 352L805 349M901 512L900 515M789 548L789 551M804 535L800 531M841 559L850 561M855 380L859 381M839 492L841 496M910 490L908 496M780 330L789 331M854 537L849 536M860 359L863 360M784 222L786 227M914 515L910 513M801 182L806 184M773 573L770 580M764 291L772 296M923 556L928 562M906 543L904 538M788 224L786 227M769 573L767 569M889 219L888 222M778 190L778 187M610 375L606 374M772 354L764 351M859 508L868 504M652 361L648 359M732 298L732 287M773 203L776 203M890 494L893 498M772 347L764 351M890 216L889 219M921 288L924 291M883 250L884 254M856 359L859 362M792 527L793 530M886 353L882 362M623 393L616 395M613 382L616 384M966 287L963 288M881 198L883 202M669 295L667 304M815 214L811 216M785 575L789 573M849 186L853 190M917 225L919 230M933 244L928 244M768 195L771 193M887 226L892 228M1004 354L1003 350M826 524L824 532M911 280L913 279M771 186L774 184M911 541L916 544M818 351L823 356M913 552L910 553M647 345L652 348M779 194L777 196M855 376L853 372M787 531L790 536M849 202L846 200M959 345L959 341M876 272L871 267M961 323L963 318M966 287L970 283M991 316L991 312M996 366L996 362M849 415L843 420M780 547L782 552M894 218L892 220M808 200L807 197M773 516L768 516M769 166L765 172M977 283L970 283M697 301L696 310M883 345L882 351M847 338L849 341M622 376L625 377M938 257L937 254M772 265L779 261M616 395L619 390M843 383L840 371M813 194L815 197M797 477L793 482M843 464L845 460M762 556L767 561M821 525L816 531M779 261L773 259M957 262L950 259M880 405L879 411M841 524L837 521M602 377L606 374M828 189L823 192M849 531L846 528M607 377L610 375M931 241L933 244M831 507L837 506M762 556L761 545M812 533L807 534M854 393L856 400M802 507L802 502M784 530L785 526M858 196L862 193M865 354L868 351M834 354L839 357M863 377L867 380M932 275L934 280M783 500L786 496M975 299L979 298M788 361L782 359M776 318L778 312M836 454L840 453M803 558L804 553M852 552L858 549M624 388L619 386M829 342L834 342M760 574L762 572M985 314L984 312M962 304L967 305M761 206L765 206M700 287L704 275M614 387L611 390M626 345L632 352M764 212L766 209M831 486L837 486M822 335L834 332M928 300L924 291M959 345L954 343M857 457L852 455M774 338L780 342M775 287L772 296M855 494L854 490M907 215L905 207M875 337L877 340M889 475L897 475M832 538L835 542M853 390L848 392M861 399L864 397M801 205L800 211M1002 368L1001 373M822 547L820 551M907 271L911 273M646 335L648 330M928 300L934 297M828 448L830 443M670 328L661 329M905 556L905 554M804 224L806 228M636 368L636 364M795 509L798 511M826 346L821 343M618 374L618 370M902 248L905 248M801 560L797 557M799 493L798 490M802 246L790 248M779 229L786 227M791 519L792 522M797 531L800 531M802 522L804 524M900 240L904 236M810 552L812 555M890 224L893 224M853 390L852 395M852 533L855 530M819 215L815 214M765 298L770 301M971 286L977 283M851 431L853 424M769 241L773 242M789 180L787 181M762 479L760 486M599 384L602 373M895 258L891 259M634 372L629 370M808 181L811 180M847 448L848 443M780 342L775 345M800 194L799 191M799 340L809 337M814 208L811 207M908 553L910 550M776 495L776 500M948 280L945 279M1013 375L1016 376M706 330L713 324M976 303L975 299M652 332L661 329M1005 377L1009 377M843 527L846 528M798 551L792 548M946 303L947 297M926 280L931 283M792 548L794 547M911 572L915 571M808 181L802 179M844 426L849 427M771 214L766 216M924 250L925 254M855 376L855 380M860 530L869 533M844 536L849 536M783 352L782 359M858 196L859 200M771 234L776 234M921 562L923 565M810 505L808 508M761 545L750 550M768 195L769 198M785 310L784 318M634 367L632 369M894 242L893 238M942 297L934 297M630 376L633 377M944 276L945 272M781 504L778 498M925 547L932 540M923 238L925 234M802 228L804 224M808 519L808 522M607 388L604 389M602 385L604 389M787 509L783 507M989 336L992 332M952 316L951 310M944 276L948 280M876 383L877 387M783 185L785 183M988 345L984 343M799 523L800 525M977 293L979 298M1004 370L1001 373M900 564L904 565M871 199L870 205M607 377L605 380M846 350L840 349M808 203L811 207M807 558L807 561M786 496L783 494M895 509L896 504M822 547L829 549M1005 359L1007 357M801 215L799 221M858 501L856 505M829 471L830 463M910 238L915 239M778 498L781 497M711 267L701 264M907 225L906 220M772 500L767 497M809 219L811 216M795 543L797 547M1008 361L1010 360M826 524L831 527M871 296L874 292M910 234L906 230M820 551L817 556M906 487L917 479M799 514L798 511M805 531L800 531M624 388L628 387M969 292L972 289M799 221L802 228M835 188L834 195M796 182L801 182M839 444L836 450M876 401L876 397M696 273L704 275M892 537L894 539M919 240L915 239M796 514L796 518M875 344L874 348M878 288L883 279M858 549L861 553M763 195L764 193M853 348L855 343M966 276L971 280M826 524L830 523M769 224L772 221M750 570L753 566M843 470L848 471M866 398L864 397M616 389L619 390M969 332L968 342M816 202L819 199M805 510L801 510M982 300L979 302M869 373L867 376M775 478L781 482M905 244L902 248M944 276L945 279M1001 312L994 307M910 238L910 234M793 487L793 482M871 489L879 488M873 236L877 231M767 222L770 217M813 538L813 541M1012 356L1011 353M839 347L842 343M1007 352L1011 353M897 239L893 238M950 355L951 365M640 358L637 357M977 324L973 327M913 566L916 564M843 493L843 488M795 543L794 540M797 575L790 577M794 558L797 557M921 281L923 283M844 536L840 533M863 368L868 371M847 346L842 343M789 185L791 184M869 368L865 365M896 207L896 212M841 496L843 498M789 514L791 519M843 346L842 343M930 247L927 250M966 276L963 275M608 368L611 372M931 241L936 238M791 480L793 482M783 500L785 505M884 224L888 222M944 242L936 242M809 526L813 526M976 288L980 288M764 311L765 298M843 493L839 492M923 238L928 235M810 536L808 540M635 354L630 356M817 524L816 531M881 230L885 232M638 350L634 350M650 342L656 345M803 188L799 191M830 351L834 354M874 201L877 195M807 516L808 519M779 557L782 552M948 268L948 273M818 343L824 338M872 219L874 216M890 550L888 545M899 246L896 249M717 283L712 276M846 435L852 436M776 234L773 239M804 234L811 235M995 344L991 342M896 562L898 560M869 368L874 367M874 210L870 205M905 207L894 201M793 501L793 496M877 360L874 357M849 479L850 475M785 193L787 194M794 533L793 530M835 553L833 548M634 350L636 344M899 236L895 235M799 365L788 361M794 216L799 221M790 248L785 255M880 516L872 522M843 454L842 456M815 481L827 484M793 487L789 485M637 335L636 344M1000 356L997 359M956 282L956 285M881 209L878 204M892 537L889 535M867 342L870 345M841 505L841 508M924 543L921 548M627 376L625 377M809 195L806 190M847 488L847 494M818 491L822 496M784 530L783 535M916 525L914 520M863 203L864 209M766 197L769 198M934 254L929 255M907 225L909 228M813 173L812 177M871 415L876 415M888 259L885 258M868 355L865 357M851 459L857 457M796 526L792 527M870 411L866 411M836 495L839 492M830 523L833 521M910 238L907 236M954 323L958 320M787 531L794 533M834 460L837 463M845 496L843 498M853 219L847 218M911 276L913 279M603 382L602 385M960 316L963 314M818 347L823 349M889 241L889 245M846 553L847 548M772 484L776 481M962 281L959 283M837 198L833 200M850 507L850 510M807 207L806 211M945 285L951 287M909 228L910 224M1003 327L1002 322M837 521L838 524M848 514L847 517M897 534L893 529M914 256L908 255M1003 357L1007 357M859 248L853 249M849 423L844 426M778 540L778 544M858 212L859 217M601 391L602 385M911 504L916 508M996 321L1000 318M800 175L802 179M793 173L790 174M830 207L833 200M921 281L924 278M867 250L867 244M848 359L851 358M992 323L993 318M996 316L993 318M810 212L811 207M811 344L810 347M895 509L899 506M814 190L816 193M771 253L773 259M835 470L834 465M783 206L781 210M837 344L842 343M857 522L860 525M871 489L863 497M860 530L855 533M772 347L775 349M928 235L925 234M879 261L881 257M893 265L896 267M887 514L880 516M805 531L804 528M929 279L931 283M768 258L773 259M772 265L773 273M795 357L791 351M878 483L881 485M777 224L775 221M882 218L878 216M860 485L863 497M834 195L828 194M1004 370L1002 368M813 173L823 174M981 295L977 293M858 389L858 393M871 408L870 411M840 516L839 518M831 512L836 509M790 220L790 215M798 551L793 553M809 195L807 197M791 239L789 244M825 342L824 338M881 242L885 243M791 195L787 194M952 316L954 323M834 525L833 521M906 281L904 277M820 230L817 224M945 285L945 279M856 517L857 522M869 373L870 378M888 508L892 506M910 238L915 236M841 513L841 508M875 344L877 340M904 561L906 561M912 527L916 525M922 248L921 244M881 485L883 489M797 486L798 490M921 281L918 286M792 560L789 559M955 268L955 271M796 526L793 530M804 234L806 228M790 220L799 221M820 189L816 193M776 200L777 196M907 521L908 525M897 233L892 235M980 343L984 343M894 492L897 497M896 562L894 564M820 230L814 230M880 267L876 272M787 516L784 519M886 353L882 351M789 514L793 513M857 424L856 418M814 341L809 337M912 560L909 558M919 240L915 236M787 208L784 212M966 357L960 355M782 572L785 571M806 228L811 231M825 351L823 356M874 258L872 263M824 184L828 189M922 272L921 269M920 564L923 565M795 564L793 563M902 229L900 233M853 205L859 206M810 511L807 516M867 239L863 236M878 216L878 211M814 221L813 226M805 521L807 516M824 184L828 182M872 230L876 228M955 308L952 307M794 244L789 244M897 568L900 574M852 351L848 354M817 502L812 502M898 551L900 553M633 377L633 382M973 340L968 342M696 273L685 274M809 195L815 197M945 285L943 290M900 503L899 506M916 553L920 557M992 362L996 366M932 275L937 277M813 498L812 502M900 515L898 511M950 355L954 362M780 235L776 239M773 306L780 307M904 236L904 240M893 489L894 492M1014 379L1018 379M952 273L948 273M899 236L897 233M888 250L892 248M768 235L764 235M843 202L840 204M922 226L916 219M874 258L868 260M806 501L810 505M928 285L925 287M969 327L973 327M777 576L790 577M760 256L767 253M777 301L773 306M883 497L879 498M793 496L795 493M851 459L845 460M764 311L767 305M974 323L973 327M626 356L626 350M1009 369L1008 367M908 264L904 264M773 239L768 238M760 237L764 235M794 211L800 211M793 570L790 577M906 220L903 223M843 223L848 226M767 331L775 327M873 364L869 362M900 538L902 541M638 373L635 375M755 570L753 572M803 573L808 571M769 166L762 170M901 212L905 207M797 531L795 535M852 382L849 386M784 318L789 331M825 351L830 351M862 416L868 418M871 350L871 353M900 222L896 224M955 337L962 337M799 340L789 331M777 353L780 354M652 361L650 353M841 433L842 437M906 220L910 224M924 244L927 250M910 490L907 492M936 238L929 238M869 533L876 539M679 292L691 296M885 554L890 550M853 411L859 412M833 453L831 457M834 447L836 450M933 244L936 242M841 208L834 211M859 515L860 519M768 186L766 185M791 351L795 349M719 318L710 315M849 191L845 188M812 350L815 345M867 553L857 556M1015 351L1014 354M896 272L891 275M770 217L766 216M1003 350L1004 347M904 252L908 255M967 296L964 298M799 345L804 345M1007 369L1009 369M773 259L778 257M867 239L871 241M894 485L894 480M892 509L894 513M803 548L800 548M666 334L661 329M888 214L888 210M848 471L850 475M772 347L775 345M797 486L800 481M805 531L807 529M883 206L878 204M896 562L896 558M828 515L832 515M900 264L902 259M810 567L808 571M862 395L861 399M825 351L826 346M837 207L830 207M719 270L717 283M762 202L761 206M767 529L760 521M849 531L851 529M841 484L837 480M889 245L886 247M652 332L654 339M775 287L779 283M639 355L635 354M768 174L765 172M859 263L863 257M955 308L954 312M623 384L619 386M696 310L686 310M967 324L969 322M812 187L817 187M904 286L898 284M907 475L917 479M889 475L883 481M909 562L911 564M783 352L786 354M871 489L861 480M963 318L963 314M817 542L816 536M806 214L806 211M917 528L921 531M879 261L885 258M881 209L878 211M776 522L779 524M799 365L804 361M814 208L812 202M852 455L849 456M952 307L949 302M682 284L691 288M881 230L883 228M614 371L616 369M900 207L905 207M860 485L861 480M874 210L878 211M926 551L922 553M889 201L894 201M861 341L865 339M627 362L627 359M871 401L876 397M828 182L823 174M851 365L849 369M634 350L632 352M903 549L907 550M845 367L845 363M614 387L614 391M809 238L809 245M870 378L867 380M788 523L788 519M886 488L885 492M951 297L954 296M803 342L804 345M1000 346L998 340M848 210L842 212M771 201L769 198M810 222L810 228M771 234L770 231M934 270L930 272M875 529L872 522M846 543L844 540M803 484L808 487M639 355L640 358M881 485L883 481M864 342L863 347M962 281L966 284M907 538L904 538M772 360L775 357M798 507L796 503M784 222L778 221M768 180L770 183M811 235L811 231M990 357L988 353M971 280L977 283M864 400L859 402M849 438L852 436M673 313L667 304M783 489L786 490M804 208L800 211M934 254L934 259M773 203L776 200M827 502L822 496M825 342L829 342M1008 367L1012 367M777 507L774 503M921 288L918 286M795 498L797 500M852 382L852 378M835 428L838 428M807 534L810 536M781 532L777 529M813 194L809 195M954 296L952 291M644 355L638 350M611 384L616 384M974 275L966 276M770 170L765 172M779 245L777 243M838 547L838 542M817 224L814 230M897 229L900 233M853 337L855 343M965 345L962 342M873 364L873 361M975 299L979 302M782 196L781 200M805 521L808 522M771 571L774 567M793 563L795 560M614 371L611 372M967 301L967 305M748 577L750 570M814 558L814 555M927 275L926 280M802 246L804 240M923 556L920 557M962 346L962 342M913 288L911 280M840 365L844 370M946 303L946 309M905 530L908 525M974 319L974 323M919 560L920 557M779 245L774 246M896 504L896 501M871 274L865 274M832 467L835 470M775 530L772 528M871 408L874 411M802 522L799 520M898 551L896 553M622 372L624 371M847 432L841 429M835 489L831 489M851 243L857 232M857 491L854 490M841 208L842 212M876 365L874 367M917 245L917 242M914 229L910 224M840 190L839 185M808 548L803 548M976 329L973 327M623 384L628 387M615 363L613 367M840 190L845 188M762 202L768 201M927 275L932 275M814 208L814 211M768 565L764 569M623 393L611 398M857 186L849 186M725 291L718 298M906 220L902 216M611 390L610 386M959 289L963 288M710 315L716 308M838 550L833 548M902 558L902 554M795 498L798 496M793 570L791 568M787 516L785 513M952 273L955 271M847 488L849 492M916 564L920 564M868 405L866 403M903 549L898 551M779 557L781 559M969 327L967 324M959 273L960 276M851 361L851 358M892 235L891 230M778 268L777 279M851 521L853 518M930 247L932 252M860 347L860 344M860 359L865 357M869 209L864 209M883 250L888 250M925 259L930 260M919 240L917 242M947 254L943 257M976 288L971 286M793 186L791 184M988 314L988 311M634 367L636 364M824 556L817 556M884 211L883 214M855 285L856 281M924 543L919 539M864 408L866 403M855 499L859 497M989 326L985 327M652 361L657 350M893 238L895 235M778 533L783 535M761 545L770 549M994 307L988 311M922 553L920 557M808 548L808 554M975 296L972 289M924 268L923 264M857 491L855 494M835 489L840 488M890 550L893 545M611 384L608 381M887 514L882 511M929 255L932 257M853 205L850 207M714 290L707 284M784 286L779 283M774 181L774 184M859 381L855 383M936 238L936 242M802 507L801 510M794 216L794 211M845 367L849 369M686 302L686 310M839 474L843 475M915 560L916 564M837 513L840 516M925 259L925 254M787 516L788 519M787 509L785 505M875 344L870 345M830 207L823 208M850 346L849 341M771 234L768 235M843 420L844 426M994 307L991 304M958 313L959 307M811 207L814 211M811 231L814 230M769 241L768 238M911 524L914 520M771 532L769 538M800 565L804 563M851 485L847 483M608 381L605 380M778 568L775 572M824 556L824 551M936 263L934 259M829 549L828 554M856 404L852 407M774 567L775 572M806 505L808 508M1014 379L1009 377M833 440L835 444M853 229L858 227M762 556L757 564M983 319L978 321M878 483L883 481M623 393L633 386M836 359L840 365M799 185L797 190M840 538L838 542M989 336L986 334M916 532L917 528M627 372L624 371M618 356L616 360M1009 377L1010 372M783 179L780 177M772 296L777 293M986 358L990 357M884 211L888 214M1008 327L1002 322M638 350L636 344M869 422L872 418M855 533L862 535M797 203L795 206M827 502L822 505M836 359L834 354M1010 360L1014 358M828 515L831 518M969 292L971 297M888 264L893 265M770 287L766 282M857 556L858 549M862 391L862 395M845 507L841 505M786 559L784 557M853 542L849 544M926 521L919 516M849 463L852 467M871 274L875 277M994 358L997 359M926 242L923 241M921 509L919 498M906 487L907 492M862 213L864 209M851 526L846 528M913 566L911 569M807 529L804 528M752 575L750 570M835 483L837 480M856 484L854 490M898 284L899 279M1014 354L1011 353M868 283L873 281M793 505L792 509M828 515L824 519M802 191L799 191M932 266L928 267M897 528L900 528M944 242L944 248M840 510L841 508M717 283L707 284M891 230L892 228M822 514L824 519M834 211L842 212M750 570L753 572M853 219L851 223M786 496L790 495M843 480L837 480M959 289L956 285M632 369L634 372M612 360L615 363M975 296L975 299M889 499L888 503M811 235L813 243M796 518L799 520M916 532L921 531M849 423L843 420M782 515L784 519M792 509L793 513M937 254L936 250M1005 344L1005 339M787 531L792 527M811 491L811 485M962 337L967 324M979 302L982 303M869 368L868 371M766 203L769 203M779 253L780 250M789 180L791 184M760 521L748 518M901 212L899 217M843 359L839 357M780 235L781 241M650 342L641 338M816 531L816 536M879 261L883 264M1005 333L997 331M897 497L893 498M785 310L788 296M626 350L621 353M795 352L795 349M864 268L860 275M862 350L863 347M849 186L845 180M890 517L887 517M780 235L776 230M783 480L775 478M855 366L855 363M786 354L791 351M613 367L610 366M648 330L652 332M860 369L858 372M867 342L865 339M791 519L788 519M830 443L829 435M779 194L779 198M607 377L608 381M817 224L814 221M882 218L881 223M833 440L837 437M984 285L980 288M858 501L852 502M858 340L858 345M933 527L932 540M905 559L906 561M725 291L725 304M777 353L775 349M868 355L868 351M843 493L847 494M776 563L777 566M626 356L628 353M897 475L894 480M992 339L989 336M829 361L836 359M808 548L810 552M1015 351L1019 355M832 538L828 538M894 516L891 521M766 191L761 190M931 294L935 291M875 265L876 272M966 315L963 311M748 566L750 570M848 354L851 358M886 488L890 490M783 489L783 494M773 516L778 517M883 374L877 370M796 518L799 514M783 563L781 559M912 270L912 265M783 538L787 541M769 224L764 223M781 497L783 494M914 249L917 245M866 373L863 368M929 255L930 260M787 531L793 530M785 243L779 245M929 255L932 252M985 322L983 319M892 503L888 503M965 351L964 348M785 255L778 257M599 384L603 382M789 502L793 501M833 495L835 489M988 320L985 322M800 481L800 484M781 202L786 200M808 181L807 177M846 543L847 548M892 250L890 254M811 216L814 211M820 559L817 556M904 494L901 492M1008 361L1010 364M797 477L791 480M858 340L855 343M618 374L617 378M966 315L966 309M901 274L899 279M776 250L774 246M835 428L831 422M968 342L962 342M871 267L872 263M780 491L781 485M901 509L898 511M800 194L796 194M988 311L987 307M960 276L962 281M831 507L827 502M940 289L942 293M907 516L905 518M882 218L885 216M928 285L931 283M916 539L914 535M809 245L814 247M814 558L817 559M815 197L816 193M893 265L897 264M810 222L814 221M929 255L925 254M794 189L793 192M851 431L857 428M778 180L777 177M902 517L904 514M856 352L859 354M801 560L798 562M958 297L956 301M837 506L836 509M944 269L941 270M643 359L648 359M898 284L895 279M791 471L793 476M762 210L761 213M686 302L691 296M790 220L794 226M852 382L855 383M778 358L775 357M885 534L889 535M834 532L829 531M860 359L859 362M878 354L882 351M841 477L843 480M837 198L840 204M863 203L862 198M930 260L934 259M790 174L794 176M1002 368L998 368M769 228L766 230M933 283L937 287M787 537L783 538M800 211L797 213M630 376L634 372M760 221L764 223M889 234L889 238M1006 363L1004 362M762 185L757 182M958 297L960 292M904 578L904 572M708 304L716 308M878 288L877 283M807 207L811 207M920 257L920 254M996 321L1002 322M896 544L895 547M805 521L804 524M855 499L852 499M904 252L905 248M855 202L852 199M977 293L980 288M925 254L927 250M617 365L619 367M822 335L817 336M877 360L875 354M850 495L854 490M895 246L892 248M968 318L967 324M848 392L849 386M640 366L636 368M843 223L847 218M618 374L615 374M896 556L899 556M797 486L800 484M797 477L793 476M894 542L894 539M864 387L867 384M919 230L914 229M822 505L825 510M776 218L781 217M857 556L861 553M843 527L844 523M618 381L621 380M814 516L812 520M932 540L926 551M790 577L789 573M801 215L797 213M919 567L924 569M768 565L771 565M808 356L803 358M803 495L799 493M795 357L789 357M608 362L610 366M764 351L769 357M817 224L813 226M828 448L833 453M811 235L814 230M936 250L932 252M944 276L948 273M788 564L785 564M830 463L834 465M782 247L782 252M863 257L868 264M816 531L813 526M810 222L809 219M834 447L833 453M847 432L844 426M899 506L901 509M966 276L964 278M894 513L898 511M834 211L830 207M692 324L687 318M778 268L772 265M775 179L777 177M939 281L937 284M988 320L988 314M889 541L894 539M858 212L864 209M916 525L919 521M603 382L607 384M861 432L854 440M776 203L775 206M900 264L897 261M842 520L841 524M800 175L798 180M905 556L907 556M669 295L672 285M796 182L791 184M778 180L776 185M855 525L857 522M829 356L825 351M857 491L863 497M792 339L789 331M835 483L841 484M775 179L772 177M788 296L781 297M708 304L696 310M914 252L917 256M838 547L833 545M631 340L636 344M892 506L888 503M610 379L613 382M763 244L760 237M891 206L894 201M775 287L772 278M750 528L758 530M875 514L880 516M840 533L840 538M790 248L789 244M946 303L941 307M776 218L772 218M816 512L810 511M799 185L801 182M989 336L987 340M843 480L841 484M917 245L917 248M778 190L781 192M807 173L807 177M895 246L899 246M810 505L814 506M884 254L881 257M853 508L856 505M843 197L843 202M725 283L726 275M901 226L902 229M616 389L616 384M863 203L859 206M820 189L824 184M1001 350L997 347M878 204L878 200M843 359L836 359M976 288L977 283M904 561L905 559M780 250L776 250M923 238L923 241M769 241L773 239M889 234L883 235M804 538L799 540M810 222L813 226M696 273L701 264M902 216L903 223M877 360L873 361M643 331L647 319M913 552L915 550M784 549L782 552M817 358L817 354M778 190L775 192M762 202L765 206M982 300L986 297M907 573L909 567M640 366L636 364M785 190L782 187M875 354L871 353M925 287L921 288M779 198L778 201M939 281L940 278M803 479L800 481M608 371L608 368M833 432L838 433M772 500L774 503M1010 360L1010 364M773 190L768 191M991 316L994 313M611 356L612 360M632 333L631 340M848 471L852 467M904 264L900 264M901 274L899 267M800 175L807 177M874 216L878 211M873 236L875 241M856 209L853 205M904 264L902 259M922 275L924 278M852 552L847 548M777 490L778 484M945 285L942 282M974 323L977 324M813 522L813 526M883 374L883 386M791 208L788 210M901 226L896 224M921 548L920 544M864 209L859 206M954 362L957 360M872 287L874 292M776 209L775 206M644 355L643 359M891 259L890 254M624 374L627 372M885 492L883 497M947 297L949 292M793 487L795 489M951 270L948 273M837 463L840 467M793 505L793 501M829 356L834 354M807 561L809 564M919 539L916 539M782 247L785 250M834 532L839 529M766 203L765 206M833 478L835 483M815 345L810 347M806 565L804 567M801 215L805 220M780 330L774 332M896 562L897 565M988 293L984 285M890 529L893 526M882 532L884 528M935 247L930 247M894 542L899 541M869 422L869 426M865 357L862 355M967 280L964 278M902 505L899 506M763 215L765 218M913 288L924 291M778 568L782 569M778 174L777 177M911 536L914 535M853 348L852 351M928 562L924 560M763 565L759 568M907 538L907 535M868 271L871 267M879 225L881 230M854 387L849 386M637 361L637 357M798 351L795 349M797 557L799 557M872 223L876 222M877 195L886 197M618 356L621 358M934 254L938 257M760 174L763 175M868 351L865 347M902 259L897 261M916 508L911 508M773 196L771 193M928 235L927 230M1009 348L1007 352M780 184L776 185M940 289L935 291M783 185L780 182M802 351L803 358M798 507L798 511M755 491L760 486M871 350L868 351M996 335L998 340M890 517L891 513M617 365L615 363M799 540L799 545M946 288L945 285M976 310L972 308M864 400L864 397M771 248L768 244M841 513L844 517M804 193L806 190M774 338L775 345M786 227L783 232M981 295L982 300M890 216L897 215M904 572L900 569M887 226L891 230M829 361L823 356M828 182L828 189M900 233L906 230M997 331L996 335M988 314L991 316M924 543L920 544M887 495L890 494M762 185L763 187M780 235L783 238M894 255L896 249M774 171L772 174M899 217L902 216M833 432L831 426M763 187L757 188M950 344L955 337M893 554L896 553M772 496L772 491M962 285L962 281M926 566L924 569M909 529L911 533M881 233L883 235M918 273L922 272M966 315L971 317M769 166L781 167M915 560L911 564M904 534L904 538M773 203L775 206M860 359L862 355M775 187L771 186M768 186L763 187M843 202L846 200M782 336L787 341M748 577L748 566M889 499L884 501M880 521L884 528M942 297L946 303M871 401L876 401M853 348L856 352M852 351L856 352M970 283L966 284M776 200L779 198M878 354L875 354M850 196L844 193M775 530L774 525M899 217L897 220M916 508L913 511M901 512L901 509M864 387L866 391M789 189L785 190M841 433L841 429M777 536L775 534M999 365L1001 363M992 327L992 332M782 523L779 524M951 287L954 288M841 477L839 474M764 227L766 230M764 574L769 573M916 553L913 552M800 481L793 482M908 563L911 564M647 319L650 323M834 180L823 174M850 346L849 351M994 313L993 318M862 426L863 421M806 214L801 215M919 498L916 508M860 420L863 421M919 570L915 571M934 254L932 252M804 193L807 197M816 531L824 532M846 485L847 483M786 546L787 541M878 216L883 214M775 215L777 213M804 234L804 240M863 251L868 255M786 561L785 564M763 565L767 561M627 362L625 362M992 323L998 325M809 526L808 522M954 323L955 317M838 470L835 474M783 238L783 232M802 179L798 180M851 526L851 529M803 558L799 557M850 196L852 199M624 365L625 362M806 505L810 505M775 349L770 350M839 185L845 188M777 507L777 513M876 222L872 219M835 470L835 474M911 518L910 513M799 199L802 197M933 283L931 283M897 233L895 235M781 485L777 490M856 517L852 513M901 512L904 514M628 383L633 382M853 542L854 546M856 540L858 537M766 209L765 206M1000 360L997 359M884 220L889 219M718 298L725 304M1014 358L1015 363M1020 374L1018 379M884 254L885 258M785 310L780 307M809 364L821 360M820 203L829 199M938 294L942 293M762 479L775 478M812 202L808 200M641 362L636 364M924 536L919 535M804 203L808 203M975 296L971 297M839 357L845 355M861 341L860 344M799 345L803 342M901 212L896 212M837 516L832 515M783 563L786 561M802 502L806 505M929 571L924 569M777 353L775 357M911 504L913 500M950 259L954 254M825 351L818 351M896 272L899 279M961 323L954 323M785 310L785 303M764 227L761 225M817 502L822 496M857 186L853 190M859 236L861 242M787 569L785 564M813 355L818 351M773 196L769 198M652 361L646 369M807 346L804 345M792 548L791 545M889 483L890 486M843 454L840 450M818 211L819 215M796 194L797 197M775 530L778 533M622 372L623 369M763 195L760 196M880 267L875 265M907 260L905 257M842 520L844 517M963 318L967 324M776 362L778 358M1019 355L1018 360M834 525L831 527M775 206L770 208M880 506L879 498M854 393L859 397M871 199L867 200M937 287L937 284M618 356L617 348M976 329L977 324M700 287L691 288M888 210L887 207M960 276L964 278M1001 373L1007 374M802 517L807 516M863 497L859 497M797 486L793 482M852 343L855 343M777 576L775 572M866 373L867 376M922 272L919 270M842 549L847 548M840 538L844 540M855 494L855 499M641 344L641 338M822 547L824 551M755 570L750 570M1017 369L1023 364M757 188L757 182M858 389L854 387M802 179L807 177M773 203L771 201M900 564L896 562M833 478L835 474M888 508L891 513M834 525L830 523M921 244L923 241M817 518L816 512M806 565L809 564M911 524L907 521M791 239L804 240M956 282L957 279M935 247L933 244M782 196L787 194M900 553L896 553M867 217L870 213M902 554L905 554M799 493L795 493M783 352L780 354M909 558L906 561M793 516L793 513M954 296L956 301M1002 368L999 365M648 330L655 327M869 422L868 418M846 485L843 488M869 393L866 391M951 270L955 271M898 548L895 547M871 341L877 340M888 214L890 216M784 549L789 551M797 568L800 565M878 255L881 257M1003 357L1005 359M830 337L824 338M976 303L970 301M839 444L844 448M852 402L852 399M855 380L855 383M797 175L794 176M853 508L850 510M847 432L852 436M959 289L959 283M607 388L610 386M1015 363L1020 363M785 567L785 571M817 358L811 358M994 307L989 299M782 359L780 354M646 369L643 368M771 214L769 210M910 247L905 248M834 532L831 527M913 500L907 502M788 224L785 219M899 525L898 520M785 505L786 502M787 531L784 530M842 437L837 437M927 275L922 275M927 275L924 278M781 217L783 216M799 540L803 545M794 244L804 240M986 351L985 346M837 192L834 195M634 362L632 358M778 533L777 529M853 214L853 209M794 179L798 180M904 236L900 233M900 222L901 226M858 384L864 387M766 340L764 351M905 257L900 255M782 515L777 513M794 226L793 232M1002 368L1001 363M867 553L877 549M771 214L767 211M930 260L932 257M783 206L781 202M959 307L955 308M894 218L897 215M947 314L951 310M807 352L803 358M809 238L811 235M776 318L771 324M768 201L766 197M871 401L871 397M836 498L839 498M908 553L905 554M773 190L771 186M911 541L914 545M818 509L825 510M868 264L871 267M863 497L868 504M644 355L648 359M947 297L949 302M909 228L910 234M812 350L807 352M797 547L798 551M776 234L776 239M763 175L765 172M995 372L996 366M797 175L800 175M772 500L764 501M778 568L778 571M1005 377L1014 379M837 192L835 188M770 520L774 525M787 349L791 351M972 347L968 346M904 507L901 509M860 408L862 411M793 186L797 187M830 543L828 538M911 524L911 518M957 279L959 283M845 513L847 517M1014 367L1015 363M855 494L852 499M893 265L893 269M817 556L814 555M904 551L905 554M891 206L893 211M968 318L966 315M1014 370L1012 367M789 189L794 189M856 359L855 363M849 479L847 483M858 227L858 221M826 213L819 215M875 374L877 370M986 303L982 303M860 369L863 368M790 215L785 219M632 352L628 353M773 516L777 513M622 372L622 376M787 234L786 227M839 498L836 495M849 415L853 411M926 242L928 244M944 295L943 290M719 270L712 276M865 519L875 514M883 279L895 279M817 502L822 505M795 498L793 501M790 555L793 553M855 202L853 205M909 558L910 556M854 355L856 359M783 238L787 234M762 479L768 483M838 470L840 467M794 189L796 194M896 272L899 267M789 497L789 502M883 345L880 342M817 556L816 551M892 509L892 506M834 460L838 459M848 514L846 510M899 482L902 488M781 559L786 561M871 401L868 405M804 361L803 358M780 518L776 522M921 548L917 547M901 212L900 207M888 264L891 259M823 564L819 565M799 540L800 538M796 518L795 523M852 481L847 483M844 193L846 200M996 316L1000 318M847 521L842 520M905 530L904 534M846 350L843 346M763 244L767 248M848 514L850 517M755 576L752 575M770 183L774 184M650 342L652 348M829 199L830 207M862 350L859 354M892 506L895 509M864 268L857 269M888 259L887 256M805 531L807 534M921 490L910 490M623 369L620 369M939 265L936 263M1023 382L1018 379M778 544L772 541M608 362L612 360M883 235L881 239M814 558L812 555M843 488L839 492M849 544L847 548M913 279L917 279M868 365L869 362M798 551L800 548M890 494L889 499M763 244L766 240M772 181L772 177M808 499L812 502M955 349L950 355M812 560L814 565M847 476L850 475M790 215L794 216M800 548L803 545M904 565L908 563M685 274L689 281M921 269L924 268M845 363L851 361M785 575L790 577M858 384L859 381M875 529L876 539M840 425L841 429M777 576L770 580M839 492L840 488M866 391L871 391M884 520L887 522M783 179L783 177M975 315L980 316M839 347L840 349M892 537L897 534M795 568L790 565M869 533L866 526M808 499L813 498M912 560L915 560M992 323L989 326M924 250L920 254M795 535L799 535M800 565L803 570M995 344L998 340M854 369L858 372M797 568L798 572M880 405L875 407M840 488L837 486M778 551L780 547M764 494L764 501M863 546L860 541M969 307L967 305M796 518L793 516M822 335L830 337M848 359L845 363M843 346L840 349M857 428L857 434M897 528L893 529M813 544L813 541M938 294L934 297M939 281L940 285M848 538L844 540M1008 367L1006 363M964 298L964 300M858 416L860 420M858 549L860 541M897 229L892 228M919 567L915 571M767 534L771 532M775 345L775 349M1001 343L1004 347M748 577L752 575M952 273L955 274M888 250L892 250M782 569L778 571M798 206L800 211M916 553L915 550M774 254L778 257M905 530L900 534M860 465L855 463M914 222L917 225M859 515L859 508M867 250L863 251M901 512L903 511M790 555L789 551M910 490L919 498M929 289L931 287M628 366L629 370M945 260L943 257M863 257L857 255M799 365L795 357M774 525L774 519M797 547L800 548M774 338L771 342M910 556L915 556M785 505L790 506M704 275L712 276M862 395L859 397M932 266L926 263M972 347L965 351M889 475L889 483M828 496L822 496M898 548L894 550M793 513L798 511M803 573L797 575M759 193L764 193M817 224L819 215M975 315L976 310M894 492L898 493M845 440L848 443M974 323L969 322M789 485L784 486M775 215L781 217M859 263L854 264M894 516L895 520M767 248L768 244M919 535L921 531M809 526L804 524M1001 363L1004 362M617 378L620 378M987 307L984 305M789 206L790 203M618 363L619 367M769 203L770 208M866 415L871 415M881 230L876 228M841 524L844 523M753 509L761 512M947 314L954 323M998 325L1002 322M878 255L879 261M753 509L764 501M864 224L867 217M904 482L902 488M772 181L768 178M911 533L917 528M872 223L870 227M924 536L926 530M611 356L608 362M894 550L898 551M774 567L778 568M937 267L941 270M854 387L855 383M772 484L769 486M800 499L797 500M928 267L930 272M851 361L848 366M811 485L807 481M893 554L896 556M807 207L808 203M876 401L873 404M768 180L768 178M848 398L852 407M724 262L731 268M877 195L878 200M812 187L809 186M760 521L761 512M780 307L785 303M763 215L760 221M914 515L919 516M794 558L793 553M930 247L924 244M843 475L846 479M863 230L866 232M781 350L775 349M810 567L814 565M798 206L801 205M876 365L877 370M708 304L718 298M872 383L870 378M859 515L855 511M903 549L900 553M836 540L838 542M865 394L864 397M783 179L787 181M781 202L776 203M884 272L889 271M860 541L854 546M801 510L798 511M866 415L870 411M835 542L833 545M969 307L972 308M679 292L677 305M895 520L898 520M778 174L774 171M870 333L871 337M977 283L980 288M798 180L801 182M650 342L646 335M650 342L654 339M981 332L986 334M843 470L843 475M756 221L758 216M883 250L877 247M907 236L906 230M858 549L854 546M914 256L917 256M793 505L798 507M984 285L977 283M860 344L858 345M923 556L922 553M815 481L829 477M766 571L762 572M776 239L777 243M913 261L917 263M976 329L978 335M768 516L766 511M772 541L773 537M776 200L776 203M889 499L893 498M846 215L847 218M835 489L831 486M773 203L770 208M883 374L880 379M878 354L877 349M602 377L605 380M975 315L970 313M886 488L890 486M772 211L770 208M800 499L798 496M828 496L825 489M777 353L781 350M874 392L871 391M874 388L871 391M834 346L830 346M641 338L647 345M872 287L868 283M959 369L962 360M837 513L836 509M618 381L617 378M853 508L850 507M871 341L870 345M899 257L900 255M872 230L877 231M894 516L894 513M834 532L835 528M889 241L893 238M774 510L770 513M889 271L884 267M772 296L765 298M779 194L781 192M899 506L898 511M753 509L747 500M867 342L871 341M847 488L846 485M969 327L962 337M919 560L915 560M602 373L608 368M870 333L875 337M836 498L836 495M793 491L790 488M867 239L867 244M944 242L936 238M940 289L937 287M889 245L892 248M812 560L811 564M830 543L833 545M864 224L858 221M996 321L993 318M611 372L615 374M867 342L865 347M865 274L868 271M789 189L789 192M829 199L828 194M811 180L807 177M618 381L616 384M794 226L788 224M841 502L837 502M889 569L894 564M773 573L769 573M894 242L892 248M942 263L943 266M805 521L808 519M786 559L790 555M762 556L770 549M852 199L853 205M784 198L781 200M950 276L954 277M801 202L802 197M895 520L899 525M880 506L882 511M964 298L961 300M864 408L866 411M777 279L784 286M852 552L854 546M897 568L900 569M864 383L867 380M762 185L760 180M849 202L843 202M922 261L923 264M932 275L929 279M955 349L958 350M845 341L847 346M904 286L906 281M930 515L919 516M841 484L843 488M802 522L800 525M976 303L976 307M793 203L797 203M866 373L861 373M904 534L907 535M852 407L856 408M808 356L807 352M1014 370L1013 375M897 239L900 240M844 193L849 191M899 556L896 553M816 218L815 214M799 503L797 500M871 356L874 357M869 393L871 397M910 247L912 242M847 517L850 517M913 511L911 508M826 213L834 211M1007 357L1011 353M875 265L872 263M890 550L895 547M957 292L954 296M803 573L812 571M937 277L940 278M848 538L849 536M920 265L921 269M796 182L797 187M771 571L775 572M764 501L767 497M825 342L826 346M994 307L987 307M813 550L816 548M805 521L802 522M885 216L883 214M910 220L910 224M837 344L839 341M856 517L860 519M802 197L804 199M797 477L800 481M865 519L866 526M778 540L783 538M914 515L916 508M813 550L812 555M777 301L781 297M902 498L901 495M618 363L615 363M959 369L966 357M952 291L951 287M786 205L789 206M758 571L760 574M771 234L768 238M760 230L766 230M796 514L798 511M919 277L917 279M890 524L893 526M785 243L781 241M812 571L823 564M911 569L915 571M969 307L966 309M934 270L932 266M881 242L875 241M767 305L770 301M933 283L937 284M919 535L916 539M889 234L885 232M848 210L845 207M776 218L775 215M798 562L795 560M799 340L793 344M777 227L777 224M632 358L630 356M809 245L804 240M883 279L875 277M781 200L786 200M617 348L626 345M757 182L760 180M794 211L795 206M884 506L880 506M784 530L781 532M897 264L897 261M895 246L898 243M793 186L794 189M790 347L793 344M760 230L764 227M843 464L840 467M867 200L870 205M820 195L819 199M881 247L885 243M853 424L849 427M858 501L859 497M623 369L624 371M976 303L970 304M795 509L793 513M958 363L957 360M673 313L677 305M607 377L612 377M877 549L876 539M782 196L779 198M1001 312L994 313M640 371L638 373M783 238L787 237M863 189L857 186M779 557L778 551M828 189L828 194M785 193L789 192M820 189L824 188M775 349L778 346M755 171L762 170M700 287L707 284M922 248L924 250M964 293L964 298M785 190L789 192M925 547L921 548M831 527L835 528M991 348L991 342M909 562L906 561M865 347L868 347M764 574L769 576M869 368L863 368M803 185L806 184M804 193L809 195M931 241L928 244M894 568L894 564M897 229L893 224M979 305L976 307M618 374L620 378M812 187L813 184M773 516L770 520M897 534L892 532M970 313L972 311M996 335L992 339M776 230L773 226M858 336L858 340M781 504L774 503M784 486L790 488M888 214L883 214M793 487L793 491M854 194L858 196M624 365L622 366M618 356L621 353M860 519L860 525M783 480L784 486M941 254L944 252M860 369L861 365M776 481L778 484M761 206L759 200M824 532L820 534M928 267L927 271M663 346L656 345M916 544L917 547M862 426L861 432M888 264L884 267M1007 369L1007 374M971 280L967 280M858 389L853 390M875 277L873 281M945 260L947 254M789 485L791 480M620 383L619 386M817 518L821 525M643 359L641 362M826 346L830 346M918 273L922 275M782 345L780 342M841 208L845 207M897 565L900 569M898 493L901 492M707 296L707 284M781 497L786 496M791 208L794 211M868 192L862 193M980 343L972 347M644 355L650 353M986 303L991 304M763 565L762 556M660 335L661 329M914 545L917 547M624 374L624 371M876 272L875 277M810 199L808 200M909 567L911 569M837 353L842 353M919 539L919 535M893 211L896 212M968 318L969 322M894 218L899 217M768 516L770 513M807 346L805 349M854 355L851 358M864 209L866 205M827 502L832 498M834 180L845 180M889 271L893 269M893 489L894 485M907 516L907 521M840 190L835 188M905 569L902 567M865 428L862 426M776 185L774 184M810 222L805 220M899 236L904 236M857 255L863 251M776 218L775 221M876 496L879 498M890 494L894 492M1017 365L1015 363M961 323L958 320M806 190L803 185M789 497L786 502M955 317L958 320M989 331L985 327M812 560L810 557M614 387L610 386M772 181L774 184M774 254L773 259M788 175L786 178M906 546L903 546M900 538L896 537M810 545L807 544M841 546L838 542M803 479L797 477M852 181L849 186M791 195L789 192M932 266L937 267M775 530L777 529M843 480L847 483M815 345L818 343M865 519L860 519M780 564L777 566M808 181L806 184M894 550L895 547M868 365L866 361M911 524L908 525M808 548L804 553M825 489L831 489M807 529L807 534M964 298L967 301M858 501L868 504M801 202L804 199M951 297L954 303M892 248L896 249M859 402L859 397M878 346L874 348M919 277L921 281M834 435L829 435M823 538L820 534M843 493L847 488M979 302L979 298M874 253L868 255M994 358L994 354M788 564L792 560M913 552L915 556M813 498L817 502M630 376L628 380M793 232L791 239M810 222L807 225M640 371L640 366M627 362L632 358M955 308L958 304M835 220L838 217M965 270L960 267M982 338L978 335M948 268L945 272M794 533L790 536M790 199L786 200M967 280L966 284M779 213L781 217M892 220L889 219M789 189L789 185M907 511L903 511M989 331L992 332M874 411L876 415M801 202L799 199M924 244L921 244M616 395L614 391M621 358L621 353M867 244L871 241M640 358L641 362M985 346L988 345M860 485L856 484M871 401L873 404M624 365L627 362M968 318L971 317M912 270L911 273M908 553L910 553M853 214L858 212M899 257L894 255M955 308L954 303M787 349L785 344M818 509L814 506M871 246L875 241M851 539L849 536M774 489L777 490M776 250L779 245M842 549L838 547M773 242L777 243M826 346L823 349M778 312L780 307M1010 372L1007 374M783 352L784 348M763 244L761 250M768 235L766 230M839 444L839 440M867 380L867 376M901 495L901 492M771 214L772 211M762 202L763 195M905 244L910 247M871 431L869 426M697 301L686 302M828 430L831 426M845 513L848 514M835 428L838 433M782 187L780 184M887 495L889 499M777 576L778 571M958 297L962 296M859 402L862 406M955 268L957 262M766 340L767 331M835 489L836 495M919 251L917 256M855 530L855 533M640 371L639 378M820 195L823 192M907 516L911 518M865 428L871 431M762 580L769 576M787 516L791 519M868 351L863 352M890 550L894 550M912 560L909 562M820 203L818 206M790 220L794 216M915 239L914 244M778 268L779 261M783 500L781 497M765 218L764 223M900 544L900 548M828 194L823 192M772 177L768 178M844 193L845 188M773 242L774 246M818 239L814 247M884 506L882 511M852 533L854 537M944 248L939 245M786 205L787 208M831 518L824 519M902 541L900 544M887 514L888 508M981 327L976 329M906 220L907 215M834 504L837 502M1005 366L1002 368M798 496L795 493M1007 369L1005 366M790 347L791 351M957 262L954 254M879 488L881 485M793 203L792 201M926 530L921 531M829 342L830 346M768 180L764 182M846 457L842 456M1013 375L1009 377M845 367L844 370M843 359L845 363M851 526L855 525M950 355L956 352M765 298L767 305M965 351L960 352M824 556L820 551M958 297L957 292M775 287L777 293M853 518L857 522M831 457L830 463M904 277L908 274M897 252L899 246M841 559L846 553M899 525L893 526M633 386L633 382M855 525L851 529M824 551L828 554M607 384L605 380M841 336L834 332M858 416L862 416M776 495L779 494M786 546L783 543M863 294L859 290M871 386L871 391M907 511L911 508M834 346L837 344M602 373L602 377M775 478L770 479M634 367L634 362M790 536L790 539M957 292L952 291M919 576L918 573M807 346L803 342M851 485L852 481M833 200L840 204M889 483L894 480M816 512L814 516M840 516L837 516M774 171L770 170M860 369L858 366M758 571L755 576M911 533L911 536M899 236L900 233M847 498L843 498M782 572L782 569M876 504L879 498M988 314L985 314M841 559L835 553M839 529L836 534M911 273L915 271M768 195L764 193M859 248L861 242M940 285L943 290M899 499L897 497M868 365L873 364M886 353L878 354M918 573L915 571M841 336L835 338M607 377L606 374M916 532L914 535M956 357L960 355M982 300L982 303M801 489L802 492M992 362L986 358M924 569L919 570M876 222L879 225M815 345L818 347M803 558L804 563M944 295L946 288M813 522L808 522M607 384L607 388M912 527L908 525M863 230L863 236M806 228L807 225M785 183L789 185M794 211L797 213M852 382L855 380M989 299L991 304M650 353L648 359M857 428L862 426M785 176L786 178M657 350L652 348M835 428L831 426M922 261L918 260M1008 361L1007 357M877 283L883 279M887 514L885 509M847 218L838 217M856 242L853 249M817 518L822 514M778 517L776 522M796 526L799 523M786 559L789 559M816 252L810 252M981 327L977 324M704 275L707 284M930 515L926 521M809 364L811 358M812 202L810 199M686 302L677 305M805 220L809 219M802 507L799 503M834 504L827 502M834 465L837 463M628 383L623 384M841 484L837 486M947 314L941 307M920 257L925 254M801 560L799 557M696 310L698 318M798 551L794 547M866 361L869 362M804 193L802 197M843 454L840 453M763 565L764 569M902 558L905 559M795 357L795 352M767 534L758 530M796 526L800 525M874 201L878 200M781 297L785 303M878 236L883 235M957 262L954 264M634 362L636 364M804 524L808 522M876 383L874 377M611 398L601 391M919 576L911 572M855 363L858 366M912 560L910 556M764 182L762 185M898 520L900 515M809 238L813 243M844 370L849 369M905 244L912 242M851 431L857 434M1015 363L1010 364M863 294L871 296M892 250L892 248M616 360L621 358M863 368L861 373M782 569L785 571M834 460L830 463M835 489L839 492M849 423L856 418M602 385L607 384M849 544L854 546M841 559L841 554M912 527L911 533M878 204L878 211M773 306L770 301M889 245L888 250M632 369L636 368M928 267L924 268M803 185L801 182M851 365L855 363M764 276L767 270M768 201L769 203M785 243L783 238M855 525L860 525M636 344L641 338M762 202L766 203M766 361L764 351M900 574L900 569M955 349L954 343M787 197L786 200M776 362L772 360M897 528L899 525M917 256L920 254M893 489L899 488M809 337L817 336M813 522L809 526M812 187L814 190M782 523L780 518M874 258L868 255M913 261L914 256M762 567L759 568M804 538L810 536M812 533L809 526M911 276L906 281M911 533L916 532M887 207L883 202M919 567L913 566M946 288L949 292M957 262L960 267M872 370L874 367M934 297L935 291M919 567L916 564M810 567L806 565M996 316L996 321M636 368L634 372M921 562L920 564M797 547L794 547M768 186L771 186M802 507L805 510M764 311L771 312M776 203L778 201M812 555L814 555M783 494L786 490M768 235L768 238M853 518L850 517M900 538L904 534M773 190L771 193M802 351L799 345M908 563L909 567M917 225L910 224M822 514L816 512M981 348L986 351M769 166L774 171M933 527L926 530M860 465L857 457M940 301L946 303M937 267L936 263M1014 354L1011 350M814 506L812 502M881 247L886 247M866 361L863 360M866 415L862 416M891 206L889 201M813 184L819 184M910 556L910 553M782 523L785 526M780 330L775 327M809 364L808 356M779 253L776 250M803 558L807 558M884 528L887 522M1003 357L1002 353M760 174L765 172M884 211L883 206M836 359L839 357M947 254L950 259M908 240L907 236M924 250L927 250M612 377L615 377M785 526L787 527M905 518L907 521M980 316L980 311M850 510L852 513M628 366L630 364M876 496L879 493M797 575L793 570M778 323L775 327M939 274L940 278M784 286L777 293M787 531L787 527M855 511L852 513M848 514L852 513M864 268L868 271M875 514L872 522M981 295L986 297M601 391L607 393M764 291L770 287M828 515L831 512M907 225L903 223M764 227L769 228M863 421L868 418M853 448L849 450M784 519L788 519M861 280L865 274M876 365L877 360M900 222L902 216M870 213L874 216M985 322L985 327M849 492L847 494M889 234L892 235M951 270L948 268M610 375L615 374M955 268L954 264M867 200L866 205M767 211L766 216M772 177L772 174M894 539L896 537M846 543L841 546M779 557L776 560M849 202L850 207M767 534L761 545M780 177L777 177M756 179L757 188M904 507L908 506M793 563L792 560M948 263L942 263M954 303L958 304M791 178L790 174M934 254L937 254M602 373L606 374M888 264L893 261M845 355L842 353M888 508L892 509M912 527L911 524M799 523L795 523M871 415L870 411M760 221L761 225M981 348L972 347M877 349L874 348M802 351L798 351M900 222L897 220M965 270L963 275M817 498L818 491M860 408L864 408M997 331L1003 327M780 547L783 543M868 260L872 263M817 187L816 193M980 343L973 340M777 227L773 226M834 332L835 338M876 539L885 534M637 361L635 360M660 335L654 339M759 200L760 196M900 538L900 534M843 383L846 388M717 283L714 290M847 517L844 517M852 351L854 355M915 236L919 230M895 258L897 261M980 316L983 319M764 351L770 350M1010 360L1007 357M767 490L760 486M826 524L829 531M799 365L799 361M991 348L988 345M871 274L869 278M799 185L803 185M1017 373L1013 375M763 195L766 197M908 264L913 261M869 373L868 371M634 350L635 354M758 216L763 215M858 349L859 354M964 293L967 296M853 542L856 540M779 213L781 210M860 420L862 426M802 246L810 252M770 188L771 186M834 351L834 354M850 346L847 346M879 493L871 489M955 308L951 310M789 514L793 516M799 221L805 220M954 277L951 282M845 496L841 496M929 279L934 280M860 369L861 373M848 359L851 361M829 342L824 338M639 378L638 373M931 241L936 242M1008 327L1003 327M627 359L630 356M808 499L809 495M898 560L896 558M778 268L773 273M823 174L821 178M900 528L903 527M781 504L783 507M895 520L893 526M853 219L858 221M848 210L850 207M864 387L864 383M791 568L795 568M768 565L772 562M799 199L795 201M889 241L889 238M634 367L630 364M817 542L813 541M877 283L873 281M861 373L858 372M978 335L981 332M880 379L874 377M908 496L904 494M798 351L800 355M884 528L885 534M890 224L892 220M930 227L922 226M775 572L778 571M814 555L816 551M959 273L955 274M932 266L936 263M783 179L786 178M899 506L896 504M836 454L836 450M804 203L804 199M775 287L777 279M795 197L795 201M802 191L800 194M992 362L994 358M792 527L792 522M856 472L854 478M756 200L760 196M626 356L621 358M970 304L967 305M793 186L796 182M970 301L967 296M941 254L947 254M616 389L619 386M934 254L936 250M816 531L812 533M773 573L769 576M787 537L790 539M643 331L648 330M867 196L862 198M774 510L774 503M824 556L820 559M958 363L951 365M838 433L838 428M875 344L880 342M809 238L804 240M789 548L786 546M847 525L846 528M903 522L905 518M956 282L954 277M810 347L805 349M909 548L906 546M867 244L871 246M764 182L768 183M850 495L847 494M875 241L881 239M782 225L777 224M874 351L871 353M777 196L773 196M876 222L878 216M622 372L618 370M627 362L628 366M828 182L831 185M997 331L998 325M835 483L837 486M624 365L628 366M842 456L840 453M783 177L780 177M1009 345L1005 333M851 459L849 456M922 261L926 263M932 540L926 530M639 355L637 357M793 553L789 551M973 340L972 347M795 352L791 351M840 349L842 353M911 504L908 506M853 209L850 207M890 224L887 226M888 264L883 264M919 516L914 520M956 352L958 350M755 576L760 574M862 213L870 213M776 481L775 486M620 383L621 380M863 352L862 350M960 355L962 360M619 367L620 369M919 251L914 252M851 459L849 463M955 317L960 316M986 303L984 305M828 448L829 435M857 269L860 275M635 354L637 357M863 421L862 416M772 221L773 226M907 225L906 230M800 553L798 551M871 356L869 362M875 514L868 504M835 444L839 440M906 281L908 274M761 206L758 209M755 570L753 566M839 347L837 353M925 259L920 257M616 360L615 363M772 500L772 496M883 264L884 267M760 256L761 250M855 530L851 529M1005 339L1000 336M807 558L804 563M789 485L790 488M679 292L672 285M851 278L860 275M778 517L774 519M772 265L768 258M817 498L822 496M892 509L891 513M844 448L840 450M989 331L989 326M782 572L777 576M869 373L874 377M777 507L781 504M770 549L774 548M991 348L995 344M771 253L771 248M910 490L917 479M871 350L874 348M992 339L995 344M876 365L873 361M939 281L934 280M886 353L883 345M916 553L915 556M789 206L788 210M897 252L896 249M804 498L806 501M655 327L652 332M845 207L840 204M963 288L966 284M948 268L943 266M862 391L864 387M814 190L817 187M863 286L868 283M725 304L732 298M842 353L846 352M795 357L788 361M778 540L777 536M1000 336L996 335M884 220L888 222M764 291L766 282M881 495L883 497M846 350L849 351M849 423L849 427M962 285L963 288M911 536L907 535M849 463L855 463M833 478L829 477M766 191L764 193M872 383L867 384M871 356L875 354M896 574L889 569M839 440L842 437M904 514L903 511M780 207L776 203M915 283L913 279M796 538L800 538M884 254L887 256M752 575L753 572M764 494L767 490M850 507L846 510M894 542L896 544M800 194L797 197M769 228L770 231M956 357L957 360M782 336L780 342M813 194L810 190M768 516L760 521M781 210L784 212M843 480L846 479M771 214L775 215M960 355L965 351M787 537L790 536M899 488L901 492M834 460L836 454M821 525L824 519M900 574L904 572M856 400L859 397M787 569L785 571M869 368L873 364M804 535L800 538M911 276L908 274M817 524L813 526M867 239L866 232M848 398L846 388M764 182L762 177M789 492L786 490M840 450L836 450M843 527L841 524M894 255L895 258M897 252L901 251M900 503L903 502M710 315L713 324M955 268L951 265M821 525L824 532M890 524L891 521M859 402L856 404M627 376L627 372M841 477L843 475M860 541L862 535M813 184L817 187M800 531L799 528M786 354L782 359M611 372L610 366M646 335L641 338M813 538L812 533M764 227L764 223M835 188L839 185M1000 360L1004 362M950 276L948 273M831 512L825 510M988 293L980 288M862 411L866 411M810 212L807 207M911 276L911 280M855 530L860 525M768 174L772 174M907 550L904 551M783 185L782 187M918 552L917 547M763 215L766 216M907 271L904 273M795 543L796 538M872 383L876 383M856 472L848 471M787 234L787 237M910 234L914 229M913 288L904 286M889 241L885 238M904 277L899 279M986 303L989 299M841 513L840 510M761 206L756 200M810 228L811 231M781 485L778 484M907 538L906 543M790 536L794 540M607 384L610 386M908 563L906 561M850 196L846 200M852 199L846 200M871 415L874 411M843 223L835 220M838 547L833 548M778 180L780 182M847 498L850 495M826 524L824 519M776 318L784 318M777 224L778 221M770 231L773 226M997 347L1000 346M904 286L899 279M836 534L840 538M862 391L866 391M791 178L791 182M852 455L849 450M881 393L876 397M910 556L907 556M875 407L873 404M1009 345L1005 344M963 318L958 320M975 315L980 311M903 269L901 274M783 352L781 350M989 331L986 334M803 188L806 190M914 232L919 230M871 356L873 361M804 203L801 205M768 174L765 177M976 329L981 332M969 332L973 340M829 199L834 195M1009 348L1011 350M958 363L954 362M900 264L899 267M800 553L800 548M725 291L714 290M962 360L957 360M884 547L888 545M782 527L781 532M762 202L760 196M771 324L778 323M918 273L919 270M897 528L897 534M853 448L848 443M903 549L900 548M865 428L869 426M974 319L971 317M628 383L623 382M955 271L955 274M894 242L898 243M776 209L778 211M781 482L776 481M771 532L773 537M875 529L866 526M853 214L856 209M862 213L862 220M845 377L844 370M804 538L808 540M828 515L825 510M808 203L808 200M640 358L637 361M876 496L863 497M845 513L846 510M806 214L811 216M893 526L893 529M955 349L956 352M806 493L809 495M900 503L896 501M820 551L816 551M822 514L825 510M829 471L835 470M946 309L951 310M770 231L766 230M885 232L881 233M885 554L893 554M706 330L698 318M910 238L908 240M896 574L894 568M769 538L773 537M907 225L901 226M966 357L972 347M626 356L630 356M879 225L881 223M843 488L840 488M966 357L962 360M777 279L773 273M877 370L872 370M816 180L821 178M948 280L945 285M855 363L859 362M932 266L930 260M925 547L924 543M885 243L886 247M814 506L808 508M872 223L867 217M907 236L910 234M785 513L782 515M851 485L854 490M815 345L814 341M775 179L774 181M911 536L916 539M896 224L897 220M858 384L864 383M919 251L922 248M789 573L785 571M612 360L610 366M995 372L1005 377M866 415L862 411M935 247L939 245M948 268L951 265M779 245L781 241M892 558L896 556M620 369L622 366M863 189L852 181M835 470L838 470M921 562L919 560M839 347L837 344M812 350L818 351M634 362L635 360M889 483L883 481M894 513L900 515M841 502L843 498M777 536L783 535M1005 333L1000 336M801 489L798 490M862 213L859 217M950 259L951 265M916 525L920 526M996 321L998 325M905 569L907 573M758 571L753 572M854 393L852 399M923 565L924 560M799 185L797 187M801 489L803 484M611 390L607 393M919 498L908 496M800 531L804 528M760 174L762 170M971 286L966 287M852 552L850 561M618 381L620 378M618 370L616 369M899 541L894 539M772 354L769 357M764 212L761 213M871 341L875 344M1014 370L1010 372M783 563L785 564M878 288L874 292M802 179L801 182M913 558L917 558M852 502L853 508M881 242L881 239M756 192L757 188M756 200L759 200M913 558L915 556M806 214L810 212M927 271L930 272M809 337L808 341M815 481L807 481M1009 345L1005 339M777 279L779 283M782 345L785 344M863 377L859 376M725 283L732 287M864 224L862 220M770 520L760 521M878 346L882 351M810 199L807 197M820 203L819 199M862 411L862 416M654 339L662 340M902 505L904 507M858 196L858 191M803 188L799 185M854 369L853 372M773 516L770 513M759 193L760 196M797 531L799 528M797 203L795 201M837 207L834 211M853 337L849 341M899 499L901 495M783 538L783 535M784 198L786 200M610 379L607 377M795 564L790 565M904 236L907 236M986 358L988 353M860 347L858 349M851 365L848 366M858 416L853 411M764 276L764 263M846 532L844 536M754 539L750 550M807 173L800 175M866 398L871 397M782 196L781 192M853 348L858 345M1008 367L1010 364M856 404L856 408M781 167L774 171M880 405L881 393M911 273L915 274M929 289L935 291M867 239L873 236M624 374L622 376M816 180L819 184M845 341L849 341M868 355L871 353M958 304L961 300M756 192L759 193M897 229L891 230M930 247L933 244M918 552L916 553M783 535L787 534M785 567L785 564M866 398L869 393M853 372L849 369M872 370L868 371M852 533L849 531M778 211L777 213M899 482L904 482M793 344L795 349M911 541L911 546M875 204L878 204M929 289L924 291M907 573L911 569M762 567L762 572M717 283L726 275M834 351L830 346M772 218L775 221M930 227L927 230M783 185L780 184M784 325L789 331M959 307L958 304M863 546L861 553M607 384L608 381M772 218L772 221M840 425L838 428M956 357L950 355M985 322L989 326M845 507L850 507M857 186L858 191M858 340L860 344M795 554L793 553M922 248L917 248M957 292L954 288M798 490L795 493M897 528L893 526M779 253L774 254M880 478L889 475M960 276L955 274M614 387L611 384M811 485L808 487M907 556L905 554M1001 343L1000 346M976 303L979 302M910 247L914 244M1014 379L1013 375M795 535L794 540M840 450L840 453M808 341L803 342M623 369L622 366M1008 327L1005 333M845 472L848 471M783 507L780 509M789 548L791 545M638 350L635 354M640 366L643 368M788 523L784 519M806 493L802 492M854 264L857 255M872 418L871 415M820 551L824 551M831 489L831 486M760 230L764 235M784 519L780 518M856 484L852 481M849 479L852 481M911 546L915 550M765 177L762 177M785 513L780 509M650 353L657 350M755 491L764 494M887 256L890 254M778 190L775 187M781 210L780 207M1014 354L1012 356M779 213L775 215M879 225L883 228M769 486L772 491M857 428L857 424M927 275L929 279M854 537L856 540M902 248L899 246M887 538L889 541M939 281L937 277M852 351L849 351M804 203L807 207M652 361L646 362M764 276L773 273M792 339L799 340M797 575L798 572M880 521L875 529M863 546L869 533M888 503L884 501M911 546L914 545M894 550L896 553M627 376L624 374M843 223L838 217M925 234L923 230M829 356L836 359M807 561L804 563M617 378L614 379M858 356L856 352M772 278L773 273M893 269L896 267M909 228L914 229M806 493L803 495M851 521L857 522M920 526L917 528M869 209L870 205M646 335L652 332M1017 369L1014 370M918 573L911 572M772 347L766 340M944 242L939 245M840 510L836 509M850 196L849 191M867 336L867 342M778 533L775 534M780 250L782 252M838 470L837 467M815 197L810 199M804 553L807 558M784 530L787 527M818 351L817 354M846 485L843 480M806 190L809 186M767 248L761 250M778 312L773 306M791 239L787 237M962 304L963 311M854 478L850 475M902 505L900 503M613 367L616 369M785 219L786 214M814 208L818 206M845 440L849 438M959 369L958 363M957 292L960 292M900 207L896 207M859 376L858 372M845 367L848 366M986 351L988 345M853 411L856 418M764 494L767 497M711 267L704 275M639 378L635 375M838 550L838 547M828 189L824 188M876 401L875 407M888 210L893 211M834 342L830 346M833 478L837 480M982 338L981 332M622 372L620 369M817 498L813 494M809 195L810 190M782 247L779 245M954 277L955 274M795 543L799 545M879 488L878 483M918 573L919 570M846 532L846 528M904 578L900 574M780 330L778 323M916 508L919 516M800 211L806 211M855 366L851 365M979 305L979 302M884 501L883 497M810 557L808 554M892 235L895 235M780 491L779 494M956 285L954 288M760 521L750 528M962 304L966 309M901 212L897 215M920 526L921 531M791 195L787 197M981 348L986 358M764 212L763 215M841 484L840 488M919 535L914 535M763 195L768 195M762 202L759 200M814 341L818 343M867 384L866 391M799 493L798 496M1010 364L1012 367M781 504L785 505M768 516L761 512M881 230L877 231M834 351L837 353M843 197L846 200M912 242L914 244M818 491L811 485M864 224L858 227M830 443L835 444M975 296L979 298M906 281L899 279M767 569L766 571M787 509L789 514M812 560L807 561M799 199L797 197M841 542L840 538M932 540L924 536M942 297L944 295M903 549L904 551M837 513L841 513M835 188L828 194M828 496L832 498M771 253L776 250M697 301L691 296M858 384L855 383M627 376L630 376M911 508L910 513M810 567L806 569M851 431L847 432M881 209L883 206M930 227L936 238M764 291L765 298M782 252L785 250M888 264L888 259M795 197L797 197M894 516L900 515M774 510L777 507M769 166L770 170M619 390L619 386M911 546L909 548M921 237L915 236M806 190L806 184M843 470L839 474M774 181L776 185M771 186L768 183M966 309L967 305M764 182L766 185M855 363L853 360M845 355L848 354M1003 350L1002 353M1009 348L1004 347M718 298L716 308M807 173L812 177M869 422L863 421M898 548L900 548M863 230L857 232M853 518L852 513M874 201L870 205M839 529L843 530M782 523L788 523M774 567L776 563M887 517L887 522M879 261L872 263M986 303L987 307M878 236L877 231M770 217L772 221M803 484L800 484M987 340L991 342M843 464L843 470M865 347L864 342M915 560L917 558M767 534L769 538M815 197L819 199M859 402L859 405M787 553L784 557M794 558L795 560M841 542L844 540M911 533L914 535M919 560L916 564M959 369L951 365M970 301L975 299M988 314L991 312M871 350L870 345M781 559L780 564M854 194L858 191M928 300L931 294M835 553L841 554M851 521L850 517M810 228L814 230M944 269L948 268M809 195L810 199M935 247L936 250M846 350L842 353M894 218L897 220M869 533L860 541M841 208L840 204M922 226L923 230M929 571L919 576M801 560L804 563M891 259L887 256M776 318L771 312M916 508L913 500M641 362L643 368M828 515L822 514M763 175L762 177M976 310L972 311M966 315L963 314M911 541L916 539M856 484L854 478M844 193L843 197M764 182L765 177M892 537L887 538M875 204L878 211M897 264L893 261M1015 351L1011 350M673 313L686 310M986 303L986 297M614 371L618 370M806 569L804 567M969 292L966 287M851 223L847 218M866 526L860 525M766 203L768 206M829 531L831 527M859 236L856 242M921 288L923 283M815 235L813 243M923 238L929 238M897 475L904 482M880 516L882 511M776 200L771 201M862 426L857 424M860 420L857 424M929 255L927 250M870 333L863 336M756 179L762 177M787 569L785 567M615 363L610 366M793 203L795 206M860 485L857 491M991 348L994 351M771 248L776 250M827 502L825 510M981 348L980 343M890 550L893 554M909 228L906 230M834 525L838 524M700 287L707 296M862 511L875 514M753 559L757 564M1003 357L1004 354M835 553L829 549M880 521L872 522M764 501L761 512M897 239L895 235M793 570L798 572M790 347L795 349M923 238L921 237M838 550L842 549M774 510L777 513M894 255L890 254M806 565L804 563M795 564L800 565M840 425L835 428M804 538L803 545M847 476L845 472M873 361L869 362M843 454L844 448M771 193L769 198M852 395L852 399M963 318L960 316M931 287L935 291M797 203L798 206M959 289L954 288M892 509L895 509M804 203L808 200M845 363L848 366M895 520L891 521M719 270L711 267M826 213L835 220M793 173L796 170M903 269L904 273M863 352L865 347M958 313L963 311M794 179L794 176M840 538L836 540M850 507L849 505M611 384L610 386M850 346L852 343M821 360L817 358M834 180L831 185M902 567L900 569M907 260L902 259M807 346L811 344M810 511L814 516M763 215L761 213M805 220L807 225M840 425L831 422M853 348L858 349M880 478L883 481M928 562L926 566M865 354L865 357M928 285L923 283M698 318L697 332M833 495L836 498M964 293L960 292M803 188L803 185M962 304L959 307M814 565L817 563M912 560L913 558M781 504L776 500M816 252L814 247M882 218L883 214M766 240L768 244M818 206L816 202M806 214L800 211M879 493L883 489M778 498L779 494M632 333L643 331M874 411L875 407M626 356L621 353M833 432L834 435M618 363L625 362M790 215L788 210M782 345L784 348M839 444L844 445M863 189L862 193M771 571L767 569M817 498L817 502M919 277L922 275M614 391L619 390M785 243L789 244M870 205L866 205M786 205L786 200M1018 360L1015 363M902 243L899 246M802 191L806 190M972 347L968 342M852 378L853 372M907 516L904 514M819 215L823 208M617 348L626 350M787 194L789 192M851 278L857 269M787 481L784 486M966 315L963 318M858 340L861 341M849 531L849 536M810 545L813 544M854 537L855 533M847 448L844 445M1023 382L1014 379M804 538L807 544M770 183L771 186M878 376L874 377M787 569L791 568M610 379L608 381M950 276L951 282M972 308L972 311M893 554L894 550M858 356L862 355M769 203L768 206M799 493L802 492M880 506L884 501M919 516L919 521M799 514L799 520M783 507L785 505M854 440L852 436M1004 370L1007 369M880 379L878 376M889 238L893 238M636 364L637 361M997 355L998 351M869 393L865 394M794 533L795 535M845 513L844 517M851 361L851 365M772 181L770 183M863 294L868 289M940 289L940 285M959 289L960 292M939 274L932 275M826 426L829 435M853 229L848 226M829 356L823 356M799 472L797 477M944 248L944 252M884 211L887 207M768 483L760 486M929 571L926 566M812 350L813 355M899 482L894 480M771 253L768 258M779 229L783 232M766 209L768 206M620 383L616 384M900 528L905 530M881 198L886 197M942 263L943 257M855 463L852 467M896 574L900 574M1008 361L1005 359M911 546L906 546M818 211L818 206M922 272L927 275M1001 373L998 368M891 275L895 279M1009 348L1003 350M852 552L857 556M979 305L984 305M865 428L869 422M1009 345L1011 350M975 315L971 317M645 349L638 350M1005 366L1001 363M868 405L864 408M775 192L773 196M826 213L830 207M799 535L800 538M608 371L610 375M913 566L915 571M817 518L814 516M829 477L831 481M869 422L873 422M764 235L766 230M762 567L764 569M986 351L991 348M812 560L817 559M855 202L859 200M764 569L766 571M864 224L870 227M894 542L893 545M892 220L888 222M793 491L795 493M656 345L652 348M962 285L959 283M854 369L851 365M911 541L911 536M762 580L760 574M769 357L775 357M922 272L922 275M621 380L620 378M969 307L970 313M777 301L785 303M801 202L798 206M834 504L832 498M845 341L842 343M899 541L902 541M859 263L857 269M839 444L840 450M881 247L881 242M921 548L922 553M902 505L901 509M764 235L766 240M918 552L920 557M862 395L865 394M928 235L929 238M793 344L799 345M897 497L901 495M927 250L932 252" stroke="#000" stroke-width="1" fill="none" shape-rendering="crispEdges"/>
</g>
<polygon points="759.0,147.5 786.0,147.5 795.0,167.5 820.0,171.0 850.0,180.0 880.0,190.0 906.6,205.4 908.8,214.3 921.0,220.9 934.3,234.2 936.5,239.7 946.5,245.3 958.7,260.8 977.5,280.7 995.2,302.2 1007.4,322.1 1010.7,335.4 1021.8,364.2 1025.1,381.9 1017.4,383.0 1007.4,377.5 1001.9,377.5 990.8,364.2 979.7,346.5 968.6,346.5 964.2,357.6 959.8,369.7 950.9,368.6 950.2,365.2 951.1,349.3 953.7,336.9 952.8,324.5 940.4,320.9 936.9,315.6 920.9,301.4 913.8,288.1 903.2,285.5 881.0,279.3 877.5,294.3 875.7,303.2 876.6,329.8 883.7,335.1 887.2,349.3 892.6,365.2 896.6,377.5 900.0,398.2 903.2,400.0 911.7,434.0 922.0,464.6 928.7,481.5 942.3,508.7 957.6,535.9 955.9,539.3 922.0,551.2 925.3,556.3 928.7,569.9 925.3,573.3 894.8,576.7 891.4,569.9 891.4,556.3 864.2,559.7 830.2,559.7 821.8,557.0 821.8,570.3 768.6,579.2 745.0,580.7 743.5,574.8 753.9,563.0 739.0,563.0 720.0,560.0 722.8,542.3 727.3,503.9 728.7,465.5 739.1,430.0 744.3,421.8 756.1,392.3 763.5,365.7 766.8,346.0 765.3,332.7 762.4,313.5 755.0,298.7 746.9,288.4 738.7,309.1 730.6,323.9 729.1,337.1 719.5,346.0 704.1,344.3 681.9,337.7 673.1,333.2 664.2,346.5 646.5,364.3 644.3,376.4 635.4,378.7 633.2,384.2 624.3,394.2 613.2,396.4 604.4,395.3 597.7,390.8 597.7,384.2 604.4,364.3 613.2,351.0 626.5,335.5 646.5,317.0 656.4,310.7 652.0,297.4 653.1,282.0 659.8,273.0 679.7,264.2 693.0,255.3 706.3,242.0 717.4,231.0 726.2,221.0 733.9,209.9 743.6,201.7 751.7,195.2 757.4,188.7 755.0,172.5 756.6,156.2" fill="none" stroke="#000" stroke-width="1"/>
</svg></div>
<div class="tx" style="left:464px;top:637px;line-height:14px;letter-spacing:-0.55px">Using OpenGL Version: 3.3.0 Core Profile Context 23.9.3.230915<br>'Mouse Left'=Rotate | 'Mouse Right'=Move | 'Mouse Wheel'=Zoom<br>'Ctrl W'=Wireframe | 'Ctrl S'=Shade | 'Ctrl N'=ReNormal</div>
<div class="a" style="left:1197px;top:668px;width:2px;height:2px;background:#999"></div>
<div class="a" style="left:1193px;top:672px;width:2px;height:2px;background:#999"></div>
<div class="a" style="left:1197px;top:672px;width:2px;height:2px;background:#999"></div>
<div class="a" style="left:1189px;top:676px;width:2px;height:2px;background:#999"></div>
<div class="a" style="left:1193px;top:676px;width:2px;height:2px;background:#999"></div>
<div class="a" style="left:1197px;top:676px;width:2px;height:2px;background:#999"></div>
<div class="a" style="left:0;top:664px;width:453px;height:13px;background:#0f7b0f"></div>
</body></html>
